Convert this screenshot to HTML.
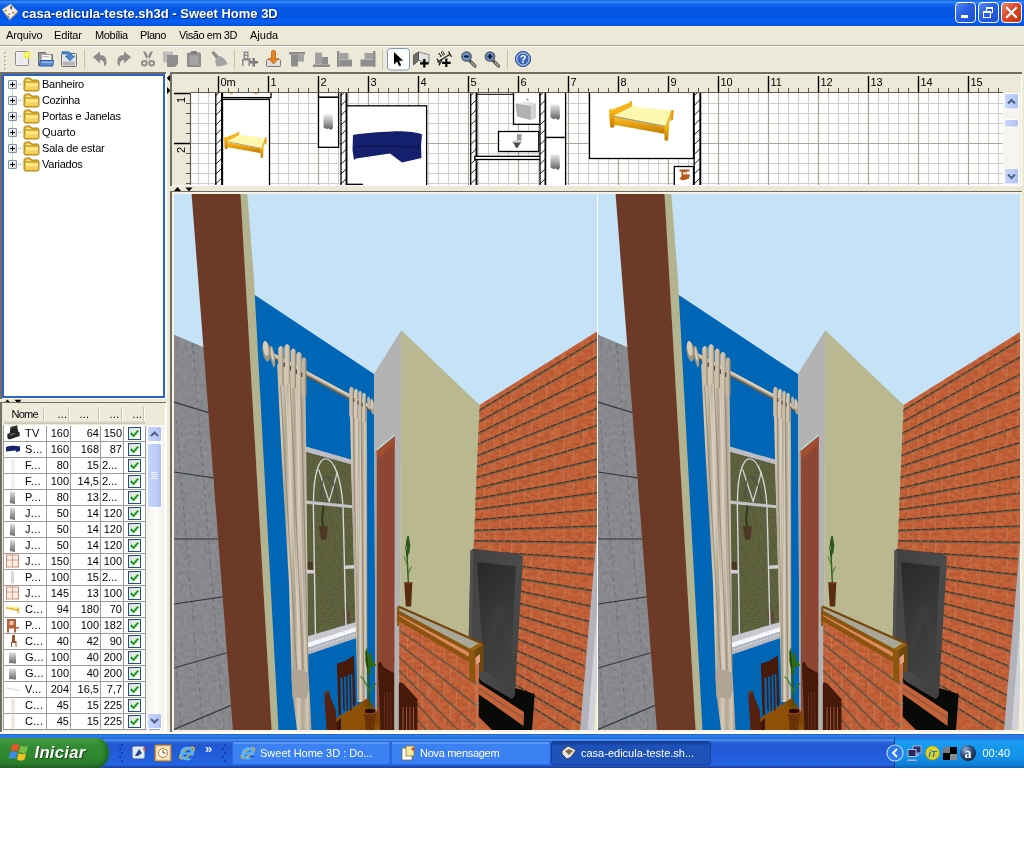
<!DOCTYPE html>
<html lang="pt-BR">
<head>
<meta charset="utf-8">
<title>casa-edicula-teste.sh3d - Sweet Home 3D</title>
<style>
html,body{margin:0;padding:0;background:#fff;}
body{width:1024px;height:857px;position:relative;overflow:hidden;font-family:"Liberation Sans",sans-serif;font-size:11px;color:#000;}
.abs{position:absolute;}
#win{will-change:transform;position:absolute;left:0;top:0;width:1024px;height:768px;background:#ece9d8;overflow:hidden;}
#titlebar{position:absolute;left:0;top:0;width:1024px;height:26px;background:linear-gradient(to bottom,#0a5fe0 0px,#3a8bf7 2px,#1466ec 4px,#0558e6 8px,#0354e2 17px,#0561f5 22px,#0553dc 25px,#0345c4 26px);}
#title{position:absolute;left:22px;top:6px;font-weight:bold;font-size:13px;color:#fff;white-space:nowrap;text-shadow:1px 1px 0 #0a2a8c;letter-spacing:0px;}
.tb{position:absolute;top:2px;width:19px;height:19px;border:1px solid #fff;border-radius:4px;background:linear-gradient(135deg,#5d8cf0 0%,#2a62e4 40%,#1c4fd0 100%);}
#menubar{position:absolute;left:0;top:26px;width:1024px;height:19px;background:#ece9d8;}
#menubar span{position:absolute;top:3px;font-size:11px;white-space:nowrap;}
#toolbar{position:absolute;left:0;top:45px;width:1024px;height:27px;background:#ece9d8;border-top:1px solid #aca899;box-shadow:inset 0 1px 0 #fff;box-sizing:border-box;}
.sep{position:absolute;top:50px;width:1px;height:18px;background:#c5c2b2;}
</style>
</head>
<body>
<div id="win">
<div id="titlebar">
  <svg class="abs" style="left:0;top:0" width="22" height="26"><path d="M10.500 4 L18 11.500 L9.400 19.900 L2.100 9.400 Z" fill="#f4f2ec" stroke="#9a8460" stroke-width="0.900" stroke-dasharray="1.2 0.8"/><path d="M9.400 19.900 L18 11.500 L17.500 13.500 L9.800 20 L5 14.500 L9.500 16.500 Z" fill="#8c8c8c"/><path d="M10 5.500 L11.800 6.500 L11.800 9.500 L10.200 8.800 Z" fill="#111"/><path d="M4.500 10 L7 9.500 L6.500 11.500 L5 12 Z" fill="#c88a1a"/><path d="M12.500 12 L15 12 L13.500 13.800 L12 13.500 Z" fill="#c8781a"/><path d="M7 11.500 L10.500 10.500 L11 13.500 L8 14.800 Z" fill="#fdf8d8"/><path d="M7.500 15 L10.500 13.500" stroke="#8a6a2a" stroke-width="1"/><path d="M10.500 4 L10.800 11 L18 11.500" fill="none" stroke="#d8d4cc" stroke-width="0.700"/></svg>
  <div id="title">casa-edicula-teste.sh3d - Sweet Home 3D</div>
  <div class="tb" style="left:955px"><div class="abs" style="left:5px;top:12px;width:7px;height:3px;background:#fff"></div></div>
  <div class="tb" style="left:978px"><div class="abs" style="left:7px;top:4px;width:7px;height:6px;border:1px solid #fff;border-top-width:2px;box-sizing:border-box"></div><div class="abs" style="left:4px;top:8px;width:8px;height:7px;border:1px solid #fff;border-top-width:2px;box-sizing:border-box;background:#2a5fe0"></div></div>
  <div class="tb" style="left:1001px;background:linear-gradient(135deg,#e8846a 0%,#d9492a 45%,#c03410 100%)"><svg class="abs" style="left:0;top:0" width="19" height="19"><path d="M5 5 L14 14 M14 5 L5 14" stroke="#fff" stroke-width="2.2" stroke-linecap="square"/></svg></div>
</div>
<div id="menubar">
  <span style="left:6px;letter-spacing:-0.1px">Arquivo</span><span style="left:54px;letter-spacing:-0.15px">Editar</span><span style="left:95px;letter-spacing:-0.4px">Mobília</span><span style="left:140px;letter-spacing:-0.45px">Plano</span><span style="left:179px;letter-spacing:-0.43px">Visão em 3D</span><span style="left:250px">Ajuda</span>
</div>
<div id="toolbar"></div>
<svg class="abs" style="left:0;top:46px" width="1024" height="26" viewBox="0 46 1024 26">
<rect x="4" y="52" width="2" height="2" fill="#b4b09c"/><rect x="5" y="53" width="1" height="1" fill="#fff"/>
<rect x="4" y="56" width="2" height="2" fill="#b4b09c"/><rect x="5" y="57" width="1" height="1" fill="#fff"/>
<rect x="4" y="60" width="2" height="2" fill="#b4b09c"/><rect x="5" y="61" width="1" height="1" fill="#fff"/>
<rect x="4" y="64" width="2" height="2" fill="#b4b09c"/><rect x="5" y="65" width="1" height="1" fill="#fff"/>
<rect x="4" y="68" width="2" height="2" fill="#b4b09c"/><rect x="5" y="69" width="1" height="1" fill="#fff"/>
<rect x="84" y="50" width="1" height="19" fill="#c9c3a6"/>
<rect x="234" y="50" width="1" height="19" fill="#c9c3a6"/>
<rect x="382" y="50" width="1" height="19" fill="#c9c3a6"/>
<rect x="507" y="50" width="1" height="19" fill="#c9c3a6"/>
<rect x="15.5" y="51.5" width="13" height="14" rx="1" fill="#f2f2f4" stroke="#8c8c90"/>
<rect x="17" y="53" width="10" height="11" fill="#ecebee"/>
<circle cx="27" cy="55" r="3.6" fill="#f4ee3a"/><circle cx="27" cy="55" r="1.6" fill="#fdfbb0"/>
<path d="M38.5 52.5 h7 l1.5 2 h5.5 v11 h-14 z" fill="#9a9a9a" stroke="#6a6a6a"/>
<rect x="41.5" y="54.500" width="10" height="8" fill="#f4f4f4" stroke="#9a9a9a" stroke-width="0.6"/>
<rect x="43" y="56" width="6" height="1" fill="#bbb"/>
<path d="M40.5 60.500 h13 l-0.800 5.500 h-13.200 z" fill="#5b8fd2" stroke="#2a5aa8"/>
<rect x="41" y="61.5" width="12" height="1.5" fill="#8db6ea"/>
<rect x="61.5" y="53.5" width="15" height="13" rx="1" fill="#e4e4e4" stroke="#6e6e6e"/>
<rect x="63" y="61.5" width="12" height="4" fill="#b4b4b4"/>
<path d="M62 51.8 h5 c3 0 5 1.500 5 4.200 h2.600 l-4.600 4.800 l-4.600 -4.800 h2.800 c0 -1.500 -1 -2.200 -2.500 -2.200 h-3.700 z" fill="#4e8cd0" stroke="#2660a8" stroke-width="0.8"/>
<path d="M93 57 l7 -5.500 v3.500 c5 0 7 3 6.500 9 l-2.500 2.500 c0.500 -4.500 -1 -6.500 -4 -6.500 v3.500 z" fill="#8e8e8e"/>
<path d="M131 57 l-7 -5.500 v3.500 c-5 0 -7 3 -6.500 9 l2.500 2.500 c-0.500 -4.500 1 -6.500 4 -6.500 v3.500 z" fill="#8e8e8e"/>
<path d="M143 51.500 l2.500 0 l4.500 8.500 l-2.200 2 z M153 51.500 l-2.500 0 l-4.500 8.500 l2.200 2 z" fill="#8e8e8e"/>
<ellipse cx="144.300" cy="63.300" rx="2.400" ry="2.200" fill="none" stroke="#8e8e8e" stroke-width="2"/><ellipse cx="151.700" cy="63.300" rx="2.400" ry="2.200" fill="none" stroke="#8e8e8e" stroke-width="2"/>
<rect x="163" y="51.5" width="10" height="11" rx="1" fill="#bdbdbd"/>
<path d="M167 55 h11 v9 l-3 3 h-8 z" fill="#8e8e8e"/>
<rect x="187" y="52.5" width="14" height="14.500" rx="1.500" fill="#8e8e8e"/>
<rect x="191" y="51" width="6" height="3" rx="1" fill="#7e7e7e"/>
<rect x="189.500" y="55.5" width="9" height="9.500" fill="#a4a4a4"/>
<path d="M211.200 52.500 l2.500 -1.500 l5.500 5.500 l-3 2.500 z" fill="#8e8e8e"/>
<path d="M215.500 59.500 l4.500 -3.500 c3.500 1.500 6.500 4.500 7.500 8 c-3 1.500 -6.500 2.500 -10.500 2.500 c-1.500 -2.500 -2 -5 -1.500 -7 z" fill="#a2a2a2"/>
<path d="M243.500 51.500 h5 v7 h2.500 v2 h-1 v5.500 h-1.500 v-5.500 h-5 v5.500 h-1.500 v-6.500 l1.500 -1 z M245 53 v1.500 h2.200 v-1.500 z M245 56 v2 h2.200 v-2 z" fill="#8a8a8a" fill-rule="evenodd"/>
<path d="M249.500 61 h3 v-3 h2.500 v3 h3 v2.500 h-3 v3 h-2.500 v-3 h-3 z" fill="#7e7e7e"/>
<rect x="266.500" y="59.500" width="14" height="7" rx="1" fill="#e0e0e0" stroke="#7a7a7a"/>
<path d="M271.500 51.500 c0 -1.500 4 -1.500 4 0 v7 h3 l-5 5.500 l-5 -5.500 h3 z" fill="#e8821e" stroke="#b45a0a" stroke-width="0.700"/>
<rect x="289" y="52" width="16" height="2.500" fill="#8e8e8e"/><rect x="291" y="54.500" width="7" height="12" fill="#8e8e8e"/><rect x="298" y="54.500" width="6" height="7" fill="#a2a2a2"/>
<rect x="313" y="64.500" width="17" height="2.500" fill="#8e8e8e"/><rect x="315" y="52.500" width="7" height="12" fill="#a2a2a2"/><rect x="322" y="57" width="6" height="7.500" fill="#8e8e8e"/>
<rect x="337" y="51" width="2.500" height="16" fill="#8e8e8e"/><rect x="339.500" y="53" width="9" height="6" fill="#a2a2a2"/><rect x="339.500" y="59.500" width="12.500" height="7" fill="#8e8e8e"/>
<rect x="373" y="51" width="2.500" height="16" fill="#8e8e8e"/><rect x="364.500" y="53" width="8.500" height="6" fill="#a2a2a2"/><rect x="360.500" y="59.500" width="12.500" height="7" fill="#8e8e8e"/>
<rect x="387.500" y="48.500" width="22" height="21.500" rx="3" fill="#fefefc" stroke="#7a98c4"/>
<path d="M394 52 v12.500 l3 -3 l2.200 4.800 l2 -1 l-2.200 -4.600 h4.200 z" fill="#000"/>
<path d="M418.500 52 l10.500 2.500 v8 l-10.500 -2 z" fill="#e2e2e2" stroke="#6a6a6a" stroke-width="0.800"/><path d="M413.500 55 l5 -3 v8.500 l-5 4.500 z" fill="#6e6e6e" stroke="#4a4a4a" stroke-width="0.800"/>
<path d="M418.500 52 v8" stroke="#4a4a4a" stroke-width="0.800"/>
<path d="M420 62.200 h3.200 v-3.200 h2.200 v3.200 h3.200 v2.200 h-3.200 v3.200 h-2.200 v-3.200 h-3.200 z" fill="#000"/>
<path d="M437.500 62 l13 -8 M437 58.500 l2.500 5 M448.500 51.500 l3 5.500 M439 65.500 l3 -6" stroke="#222" stroke-width="1.300" fill="none"/>
<text x="438.500" y="56.500" font-size="6" font-weight="bold" font-family="Liberation Sans,sans-serif" transform="rotate(-30 441 55)">10</text>
<path d="M442 61.700 h3.200 v-3.200 h2.200 v3.200 h3.200 v2.200 h-3.200 v3.200 h-2.200 v-3.200 h-3.200 z" fill="#000"/>
<path d="M469.5 60.500 l5.500 5.500" stroke="#5a5a5a" stroke-width="3.200" stroke-linecap="round"/>
<path d="M471.5 62.500 l3.500 3.500" stroke="#a8a8a8" stroke-width="1.200" stroke-linecap="round"/>
<circle cx="466.5" cy="56.500" r="4.600" fill="#6d95d2" stroke="#5a5e66" stroke-width="1.500"/>
<rect x="464.0" y="55.500" width="5" height="2" fill="#10203a"/>
<path d="M493.0 60.500 l5.500 5.500" stroke="#5a5a5a" stroke-width="3.200" stroke-linecap="round"/>
<path d="M495.0 62.500 l3.500 3.500" stroke="#a8a8a8" stroke-width="1.200" stroke-linecap="round"/>
<circle cx="490.0" cy="56.500" r="4.600" fill="#6d95d2" stroke="#5a5e66" stroke-width="1.500"/>
<rect x="487.5" y="55.500" width="5" height="2" fill="#10203a"/>
<rect x="489.0" y="54" width="2" height="5" fill="#10203a"/>
<circle cx="523" cy="59" r="7.600" fill="#3a66b8" stroke="#2a4a94" stroke-width="1"/>
<circle cx="523" cy="59" r="6.200" fill="none" stroke="#dfe8f8" stroke-width="1"/>
<text x="523" y="63.200" font-size="11" font-weight="bold" fill="#fff" text-anchor="middle" font-family="Liberation Sans,sans-serif">?</text>
</svg>
<style>
.tree{position:absolute;left:0;top:72px;width:166px;height:327px;background:#fff;box-sizing:border-box;border:2px solid #2b62c8;border-left-width:2px;}
.ti{position:absolute;left:42px;font-size:11px;white-space:nowrap;line-height:13px;}
.pm{position:absolute;left:8px;width:7px;height:7px;border:1px solid #7a94b4;background:linear-gradient(135deg,#fff,#d8d4c8);border-radius:1px;}
.pm:before{content:"";position:absolute;left:1px;top:3px;width:5px;height:1px;background:#000}.pm:after{content:"";position:absolute;left:3px;top:1px;width:1px;height:5px;background:#000}
.tbl{position:absolute;left:4px;top:425px;font-size:11px;}
.c{position:absolute;height:15px;line-height:15px;background:#fff;white-space:nowrap;overflow:hidden;}
.r{text-align:right}
.hd{position:absolute;top:403px;height:21px;line-height:23px;text-align:center;font-size:11px;background:#eeebdc;box-shadow:inset 0 -1px 0 #cbc7b8,inset 0 -2px 0 #d6d2c2,inset 0 -3px 0 #e0dccc;white-space:nowrap}.hd:after{content:"";position:absolute;right:0;top:4px;width:1px;height:14px;background:#fff;box-shadow:-1px 0 0 #c5c2b2}
.cb{position:absolute;left:4px;top:1px;width:11px;height:11px;border:1px solid #1c5180;background:linear-gradient(135deg,#dcdcd7,#fff);}
</style>
<div class="abs" style="left:0;top:72px;width:167px;height:327px;background:#fff"></div>
<div class="abs" style="left:0;top:72px;width:166px;height:2px;background:#716f64"></div><div class="abs" style="left:0;top:72px;width:2px;height:327px;background:#716f64"></div>
<div class="abs" style="left:2px;top:74px;width:163px;height:324px;background:#fff;border:2px solid #2b62c8;box-sizing:border-box"></div>
<svg class="abs" style="left:0;top:74px" width="60" height="100" viewBox="0 74 60 100">
<path d="M12.500 89 V160 M16 84.500 H22 M16 100.500 H22 M16 116.500 H22 M16 132.500 H22 M16 148.500 H22 M16 164.500 H22" stroke="#a0a0a0" stroke-width="1" stroke-dasharray="1 1" fill="none"/>
<g transform="translate(23 77)">
<path d="M1 3.500 C1 2 2 1 3.500 1 H7 L9 3 H14 C15.500 3 16 4 16 5 V12 C16 13.500 15 14 14 14 H3 C1.500 14 1 13 1 12 Z" fill="#d9aa2a" stroke="#a67c12" stroke-width="0.900"/>
<path d="M2.500 6 H15 V11.500 C15 12.500 14.500 13 13.500 13 H4 C3 13 2.500 12.500 2.500 11.500 Z" fill="#fbe88a"/>
<path d="M2.500 9.500 H15 V11.500 C15 12.500 14.500 13 13.500 13 H4 C3 13 2.500 12.500 2.500 11.500 Z" fill="#f3cf55"/>
<path d="M3 2.600 H6.500 L8 4.200 H3 Z" fill="#f6e08a"/>
</g>
<g transform="translate(23 93)">
<path d="M1 3.500 C1 2 2 1 3.500 1 H7 L9 3 H14 C15.500 3 16 4 16 5 V12 C16 13.500 15 14 14 14 H3 C1.500 14 1 13 1 12 Z" fill="#d9aa2a" stroke="#a67c12" stroke-width="0.900"/>
<path d="M2.500 6 H15 V11.500 C15 12.500 14.500 13 13.500 13 H4 C3 13 2.500 12.500 2.500 11.500 Z" fill="#fbe88a"/>
<path d="M2.500 9.500 H15 V11.500 C15 12.500 14.500 13 13.500 13 H4 C3 13 2.500 12.500 2.500 11.500 Z" fill="#f3cf55"/>
<path d="M3 2.600 H6.500 L8 4.200 H3 Z" fill="#f6e08a"/>
</g>
<g transform="translate(23 109)">
<path d="M1 3.500 C1 2 2 1 3.500 1 H7 L9 3 H14 C15.500 3 16 4 16 5 V12 C16 13.500 15 14 14 14 H3 C1.500 14 1 13 1 12 Z" fill="#d9aa2a" stroke="#a67c12" stroke-width="0.900"/>
<path d="M2.500 6 H15 V11.500 C15 12.500 14.500 13 13.500 13 H4 C3 13 2.500 12.500 2.500 11.500 Z" fill="#fbe88a"/>
<path d="M2.500 9.500 H15 V11.500 C15 12.500 14.500 13 13.500 13 H4 C3 13 2.500 12.500 2.500 11.500 Z" fill="#f3cf55"/>
<path d="M3 2.600 H6.500 L8 4.200 H3 Z" fill="#f6e08a"/>
</g>
<g transform="translate(23 125)">
<path d="M1 3.500 C1 2 2 1 3.500 1 H7 L9 3 H14 C15.500 3 16 4 16 5 V12 C16 13.500 15 14 14 14 H3 C1.500 14 1 13 1 12 Z" fill="#d9aa2a" stroke="#a67c12" stroke-width="0.900"/>
<path d="M2.500 6 H15 V11.500 C15 12.500 14.500 13 13.500 13 H4 C3 13 2.500 12.500 2.500 11.500 Z" fill="#fbe88a"/>
<path d="M2.500 9.500 H15 V11.500 C15 12.500 14.500 13 13.500 13 H4 C3 13 2.500 12.500 2.500 11.500 Z" fill="#f3cf55"/>
<path d="M3 2.600 H6.500 L8 4.200 H3 Z" fill="#f6e08a"/>
</g>
<g transform="translate(23 141)">
<path d="M1 3.500 C1 2 2 1 3.500 1 H7 L9 3 H14 C15.500 3 16 4 16 5 V12 C16 13.500 15 14 14 14 H3 C1.500 14 1 13 1 12 Z" fill="#d9aa2a" stroke="#a67c12" stroke-width="0.900"/>
<path d="M2.500 6 H15 V11.500 C15 12.500 14.500 13 13.500 13 H4 C3 13 2.500 12.500 2.500 11.500 Z" fill="#fbe88a"/>
<path d="M2.500 9.500 H15 V11.500 C15 12.500 14.500 13 13.500 13 H4 C3 13 2.500 12.500 2.500 11.500 Z" fill="#f3cf55"/>
<path d="M3 2.600 H6.500 L8 4.200 H3 Z" fill="#f6e08a"/>
</g>
<g transform="translate(23 157)">
<path d="M1 3.500 C1 2 2 1 3.500 1 H7 L9 3 H14 C15.500 3 16 4 16 5 V12 C16 13.500 15 14 14 14 H3 C1.500 14 1 13 1 12 Z" fill="#d9aa2a" stroke="#a67c12" stroke-width="0.900"/>
<path d="M2.500 6 H15 V11.500 C15 12.500 14.500 13 13.500 13 H4 C3 13 2.500 12.500 2.500 11.500 Z" fill="#fbe88a"/>
<path d="M2.500 9.500 H15 V11.500 C15 12.500 14.500 13 13.500 13 H4 C3 13 2.500 12.500 2.500 11.500 Z" fill="#f3cf55"/>
<path d="M3 2.600 H6.500 L8 4.200 H3 Z" fill="#f6e08a"/>
</g>
</svg>
<div class="pm" style="top:80px"></div>
<div class="ti" style="top:78px;letter-spacing:-0.27px">Banheiro</div>
<div class="pm" style="top:96px"></div>
<div class="ti" style="top:94px;letter-spacing:-0.38px">Cozinha</div>
<div class="pm" style="top:112px"></div>
<div class="ti" style="top:110px;letter-spacing:-0.20px">Portas e Janelas</div>
<div class="pm" style="top:128px"></div>
<div class="ti" style="top:126px;letter-spacing:-0.01px">Quarto</div>
<div class="pm" style="top:144px"></div>
<div class="ti" style="top:142px;letter-spacing:-0.17px">Sala de estar</div>
<div class="pm" style="top:160px"></div>
<div class="ti" style="top:158px;letter-spacing:-0.25px">Variados</div>
<svg class="abs" style="left:0;top:398px" width="166" height="7" viewBox="0 398 166 7"><path d="M4 403.500 L7.500 399.500 L11 403.500 Z M14.500 399.800 L21.500 399.800 L18 403.800 Z" fill="#000"/></svg>
<div class="abs" style="left:0;top:402px;width:167px;height:330px;background:#fff"></div>
<div class="abs" style="left:0;top:402px;width:166px;height:1px;background:#716f64"></div><div class="abs" style="left:0;top:402px;width:2px;height:330px;background:#716f64"></div>
<div class="abs" style="left:2px;top:403px;width:163px;height:328px;background:#ece9d8"></div>
<div class="abs" style="left:3px;top:425px;width:143px;height:305px;background:#9c9c9c"></div><div class="abs" style="left:4px;top:425px;width:142px;height:1px;background:#fff"></div>
<div class="abs" style="left:146px;top:425px;width:19px;height:306px;background:#f4f2ea"></div>
<div class="hd" style="left:4px;width:41px;box-sizing:border-box;"><span style="position:absolute;left:7.4px;letter-spacing:-0.7px">Nome</span></div>
<div class="hd" style="left:45px;width:25px;box-sizing:border-box;"><span style="position:absolute;left:12.5px;letter-spacing:0.25px">...</span></div>
<div class="hd" style="left:70px;width:30px;box-sizing:border-box;"><span style="position:absolute;left:9.5px;letter-spacing:0.25px">...</span></div>
<div class="hd" style="left:100px;width:23px;box-sizing:border-box;"><span style="position:absolute;left:9.5px;letter-spacing:0.25px">...</span></div>
<div class="hd" style="left:123px;width:22px;box-sizing:border-box;"><span style="position:absolute;left:9.5px;letter-spacing:0.25px">...</span></div>
<div class="c" style="left:4px;top:426px;width:42px"><span style="position:absolute;left:21px;letter-spacing:0.3px">TV</span></div>
<div class="c r" style="left:47px;top:426px;width:22px;padding-right:1px">160</div>
<div class="c r" style="left:71px;top:426px;width:28px;padding-right:1px">64</div>
<div class="c r" style="left:101px;top:426px;width:21px;padding-right:1px">150</div>
<div class="c" style="left:124px;top:426px;width:21px"><div class="cb"></div><svg class="abs" style="left:5px;top:2px" width="11" height="11"><path d="M1.800 5 L4.500 8 L9.200 2.600" fill="none" stroke="#21a121" stroke-width="2.100"/></svg></div>
<div class="c" style="left:4px;top:442px;width:42px"><span style="position:absolute;left:21px;letter-spacing:0.3px">S...</span></div>
<div class="c r" style="left:47px;top:442px;width:22px;padding-right:1px">160</div>
<div class="c r" style="left:71px;top:442px;width:28px;padding-right:1px">168</div>
<div class="c r" style="left:101px;top:442px;width:21px;padding-right:1px">87</div>
<div class="c" style="left:124px;top:442px;width:21px"><div class="cb"></div><svg class="abs" style="left:5px;top:2px" width="11" height="11"><path d="M1.800 5 L4.500 8 L9.200 2.600" fill="none" stroke="#21a121" stroke-width="2.100"/></svg></div>
<div class="c" style="left:4px;top:458px;width:42px"><span style="position:absolute;left:21px;letter-spacing:0.3px">F...</span></div>
<div class="c r" style="left:47px;top:458px;width:22px;padding-right:1px">80</div>
<div class="c r" style="left:71px;top:458px;width:28px;padding-right:1px">15</div>
<div class="c" style="left:101px;top:458px;width:22px;padding-left:1px;box-sizing:border-box">2...</div>
<div class="c" style="left:124px;top:458px;width:21px"><div class="cb"></div><svg class="abs" style="left:5px;top:2px" width="11" height="11"><path d="M1.800 5 L4.500 8 L9.200 2.600" fill="none" stroke="#21a121" stroke-width="2.100"/></svg></div>
<div class="c" style="left:4px;top:474px;width:42px"><span style="position:absolute;left:21px;letter-spacing:0.3px">F...</span></div>
<div class="c r" style="left:47px;top:474px;width:22px;padding-right:1px">100</div>
<div class="c r" style="left:71px;top:474px;width:28px;padding-right:1px">14,5</div>
<div class="c" style="left:101px;top:474px;width:22px;padding-left:1px;box-sizing:border-box">2...</div>
<div class="c" style="left:124px;top:474px;width:21px"><div class="cb"></div><svg class="abs" style="left:5px;top:2px" width="11" height="11"><path d="M1.800 5 L4.500 8 L9.200 2.600" fill="none" stroke="#21a121" stroke-width="2.100"/></svg></div>
<div class="c" style="left:4px;top:490px;width:42px"><span style="position:absolute;left:21px;letter-spacing:0.3px">P...</span></div>
<div class="c r" style="left:47px;top:490px;width:22px;padding-right:1px">80</div>
<div class="c r" style="left:71px;top:490px;width:28px;padding-right:1px">13</div>
<div class="c" style="left:101px;top:490px;width:22px;padding-left:1px;box-sizing:border-box">2...</div>
<div class="c" style="left:124px;top:490px;width:21px"><div class="cb"></div><svg class="abs" style="left:5px;top:2px" width="11" height="11"><path d="M1.800 5 L4.500 8 L9.200 2.600" fill="none" stroke="#21a121" stroke-width="2.100"/></svg></div>
<div class="c" style="left:4px;top:506px;width:42px"><span style="position:absolute;left:21px;letter-spacing:0.3px">J...</span></div>
<div class="c r" style="left:47px;top:506px;width:22px;padding-right:1px">50</div>
<div class="c r" style="left:71px;top:506px;width:28px;padding-right:1px">14</div>
<div class="c r" style="left:101px;top:506px;width:21px;padding-right:1px">120</div>
<div class="c" style="left:124px;top:506px;width:21px"><div class="cb"></div><svg class="abs" style="left:5px;top:2px" width="11" height="11"><path d="M1.800 5 L4.500 8 L9.200 2.600" fill="none" stroke="#21a121" stroke-width="2.100"/></svg></div>
<div class="c" style="left:4px;top:522px;width:42px"><span style="position:absolute;left:21px;letter-spacing:0.3px">J...</span></div>
<div class="c r" style="left:47px;top:522px;width:22px;padding-right:1px">50</div>
<div class="c r" style="left:71px;top:522px;width:28px;padding-right:1px">14</div>
<div class="c r" style="left:101px;top:522px;width:21px;padding-right:1px">120</div>
<div class="c" style="left:124px;top:522px;width:21px"><div class="cb"></div><svg class="abs" style="left:5px;top:2px" width="11" height="11"><path d="M1.800 5 L4.500 8 L9.200 2.600" fill="none" stroke="#21a121" stroke-width="2.100"/></svg></div>
<div class="c" style="left:4px;top:538px;width:42px"><span style="position:absolute;left:21px;letter-spacing:0.3px">J...</span></div>
<div class="c r" style="left:47px;top:538px;width:22px;padding-right:1px">50</div>
<div class="c r" style="left:71px;top:538px;width:28px;padding-right:1px">14</div>
<div class="c r" style="left:101px;top:538px;width:21px;padding-right:1px">120</div>
<div class="c" style="left:124px;top:538px;width:21px"><div class="cb"></div><svg class="abs" style="left:5px;top:2px" width="11" height="11"><path d="M1.800 5 L4.500 8 L9.200 2.600" fill="none" stroke="#21a121" stroke-width="2.100"/></svg></div>
<div class="c" style="left:4px;top:554px;width:42px"><span style="position:absolute;left:21px;letter-spacing:0.3px">J...</span></div>
<div class="c r" style="left:47px;top:554px;width:22px;padding-right:1px">150</div>
<div class="c r" style="left:71px;top:554px;width:28px;padding-right:1px">14</div>
<div class="c r" style="left:101px;top:554px;width:21px;padding-right:1px">100</div>
<div class="c" style="left:124px;top:554px;width:21px"><div class="cb"></div><svg class="abs" style="left:5px;top:2px" width="11" height="11"><path d="M1.800 5 L4.500 8 L9.200 2.600" fill="none" stroke="#21a121" stroke-width="2.100"/></svg></div>
<div class="c" style="left:4px;top:570px;width:42px"><span style="position:absolute;left:21px;letter-spacing:0.3px">P...</span></div>
<div class="c r" style="left:47px;top:570px;width:22px;padding-right:1px">100</div>
<div class="c r" style="left:71px;top:570px;width:28px;padding-right:1px">15</div>
<div class="c" style="left:101px;top:570px;width:22px;padding-left:1px;box-sizing:border-box">2...</div>
<div class="c" style="left:124px;top:570px;width:21px"><div class="cb"></div><svg class="abs" style="left:5px;top:2px" width="11" height="11"><path d="M1.800 5 L4.500 8 L9.200 2.600" fill="none" stroke="#21a121" stroke-width="2.100"/></svg></div>
<div class="c" style="left:4px;top:586px;width:42px"><span style="position:absolute;left:21px;letter-spacing:0.3px">J...</span></div>
<div class="c r" style="left:47px;top:586px;width:22px;padding-right:1px">145</div>
<div class="c r" style="left:71px;top:586px;width:28px;padding-right:1px">13</div>
<div class="c r" style="left:101px;top:586px;width:21px;padding-right:1px">100</div>
<div class="c" style="left:124px;top:586px;width:21px"><div class="cb"></div><svg class="abs" style="left:5px;top:2px" width="11" height="11"><path d="M1.800 5 L4.500 8 L9.200 2.600" fill="none" stroke="#21a121" stroke-width="2.100"/></svg></div>
<div class="c" style="left:4px;top:602px;width:42px"><span style="position:absolute;left:21px;letter-spacing:0.3px">C...</span></div>
<div class="c r" style="left:47px;top:602px;width:22px;padding-right:1px">94</div>
<div class="c r" style="left:71px;top:602px;width:28px;padding-right:1px">180</div>
<div class="c r" style="left:101px;top:602px;width:21px;padding-right:1px">70</div>
<div class="c" style="left:124px;top:602px;width:21px"><div class="cb"></div><svg class="abs" style="left:5px;top:2px" width="11" height="11"><path d="M1.800 5 L4.500 8 L9.200 2.600" fill="none" stroke="#21a121" stroke-width="2.100"/></svg></div>
<div class="c" style="left:4px;top:618px;width:42px"><span style="position:absolute;left:21px;letter-spacing:0.3px">P...</span></div>
<div class="c r" style="left:47px;top:618px;width:22px;padding-right:1px">100</div>
<div class="c r" style="left:71px;top:618px;width:28px;padding-right:1px">100</div>
<div class="c r" style="left:101px;top:618px;width:21px;padding-right:1px">182</div>
<div class="c" style="left:124px;top:618px;width:21px"><div class="cb"></div><svg class="abs" style="left:5px;top:2px" width="11" height="11"><path d="M1.800 5 L4.500 8 L9.200 2.600" fill="none" stroke="#21a121" stroke-width="2.100"/></svg></div>
<div class="c" style="left:4px;top:634px;width:42px"><span style="position:absolute;left:21px;letter-spacing:0.3px">C...</span></div>
<div class="c r" style="left:47px;top:634px;width:22px;padding-right:1px">40</div>
<div class="c r" style="left:71px;top:634px;width:28px;padding-right:1px">42</div>
<div class="c r" style="left:101px;top:634px;width:21px;padding-right:1px">90</div>
<div class="c" style="left:124px;top:634px;width:21px"><div class="cb"></div><svg class="abs" style="left:5px;top:2px" width="11" height="11"><path d="M1.800 5 L4.500 8 L9.200 2.600" fill="none" stroke="#21a121" stroke-width="2.100"/></svg></div>
<div class="c" style="left:4px;top:650px;width:42px"><span style="position:absolute;left:21px;letter-spacing:0.3px">G...</span></div>
<div class="c r" style="left:47px;top:650px;width:22px;padding-right:1px">100</div>
<div class="c r" style="left:71px;top:650px;width:28px;padding-right:1px">40</div>
<div class="c r" style="left:101px;top:650px;width:21px;padding-right:1px">200</div>
<div class="c" style="left:124px;top:650px;width:21px"><div class="cb"></div><svg class="abs" style="left:5px;top:2px" width="11" height="11"><path d="M1.800 5 L4.500 8 L9.200 2.600" fill="none" stroke="#21a121" stroke-width="2.100"/></svg></div>
<div class="c" style="left:4px;top:666px;width:42px"><span style="position:absolute;left:21px;letter-spacing:0.3px">G...</span></div>
<div class="c r" style="left:47px;top:666px;width:22px;padding-right:1px">100</div>
<div class="c r" style="left:71px;top:666px;width:28px;padding-right:1px">40</div>
<div class="c r" style="left:101px;top:666px;width:21px;padding-right:1px">200</div>
<div class="c" style="left:124px;top:666px;width:21px"><div class="cb"></div><svg class="abs" style="left:5px;top:2px" width="11" height="11"><path d="M1.800 5 L4.500 8 L9.200 2.600" fill="none" stroke="#21a121" stroke-width="2.100"/></svg></div>
<div class="c" style="left:4px;top:682px;width:42px"><span style="position:absolute;left:21px;letter-spacing:0.3px">V...</span></div>
<div class="c r" style="left:47px;top:682px;width:22px;padding-right:1px">204</div>
<div class="c r" style="left:71px;top:682px;width:28px;padding-right:1px">16,5</div>
<div class="c r" style="left:101px;top:682px;width:21px;padding-right:1px">7,7</div>
<div class="c" style="left:124px;top:682px;width:21px"><div class="cb"></div><svg class="abs" style="left:5px;top:2px" width="11" height="11"><path d="M1.800 5 L4.500 8 L9.200 2.600" fill="none" stroke="#21a121" stroke-width="2.100"/></svg></div>
<div class="c" style="left:4px;top:698px;width:42px"><span style="position:absolute;left:21px;letter-spacing:0.3px">C...</span></div>
<div class="c r" style="left:47px;top:698px;width:22px;padding-right:1px">45</div>
<div class="c r" style="left:71px;top:698px;width:28px;padding-right:1px">15</div>
<div class="c r" style="left:101px;top:698px;width:21px;padding-right:1px">225</div>
<div class="c" style="left:124px;top:698px;width:21px"><div class="cb"></div><svg class="abs" style="left:5px;top:2px" width="11" height="11"><path d="M1.800 5 L4.500 8 L9.200 2.600" fill="none" stroke="#21a121" stroke-width="2.100"/></svg></div>
<div class="c" style="left:4px;top:714px;width:42px"><span style="position:absolute;left:21px;letter-spacing:0.3px">C...</span></div>
<div class="c r" style="left:47px;top:714px;width:22px;padding-right:1px">45</div>
<div class="c r" style="left:71px;top:714px;width:28px;padding-right:1px">15</div>
<div class="c r" style="left:101px;top:714px;width:21px;padding-right:1px">225</div>
<div class="c" style="left:124px;top:714px;width:21px"><div class="cb"></div><svg class="abs" style="left:5px;top:2px" width="11" height="11"><path d="M1.800 5 L4.500 8 L9.200 2.600" fill="none" stroke="#21a121" stroke-width="2.100"/></svg></div>
<svg class="abs" style="left:4px;top:425px" width="22" height="305" viewBox="4 425 22 305">
<defs><linearGradient id="gi" x1="0" y1="0" x2="0" y2="1"><stop offset="0" stop-color="#e4e4e4"/><stop offset="1" stop-color="#6a6a6a"/></linearGradient></defs>
<path d="M10.500 427 l6.500 -1.500 l1.200 6 l1.300 0.500 l0.300 4 l-10.500 3.500 l-1.800 -1 l-0.200 -4.500 l2.500 -1 z" fill="#262626"/><path d="M10.500 427 l6.500 -1.500 l0.800 1.500 l-6.800 1.800 z" fill="#3e3e3e"/><path d="M10 435 l5 -1.500" stroke="#8a8a8a" stroke-width="0.900"/>
<path d="M6 447 c4 -1.500 10 -1.500 14 -0.500 v4.500 l-3.500 1 l-1 -1.500 l-9.500 1 z" fill="#18246e"/>
<rect x="11" y="459" width="4" height="14" fill="#f2f2f2"/>
<rect x="11" y="475" width="4" height="14" fill="#f2f2f2"/>
<path d="M10 491 l5 1 v12 l-5 -1 z" fill="url(#gi)"/>
<path d="M10 507 l5 1 v12 l-5 -1 z" fill="url(#gi)"/>
<path d="M10 523 l5 1 v12 l-5 -1 z" fill="url(#gi)"/>
<path d="M10 539 l5 1 v12 l-5 -1 z" fill="url(#gi)"/>
<rect x="6.500" y="555" width="12" height="12" fill="#f8ece4" stroke="#c89070" stroke-width="1"/><path d="M12.500 555 v12 M6.500 560 h12" stroke="#c89070" stroke-width="0.800"/>
<rect x="6.500" y="587" width="12" height="12" fill="#f8ece4" stroke="#c89070" stroke-width="1"/><path d="M12.500 587 v12 M6.500 592 h12" stroke="#c89070" stroke-width="0.800"/>
<path d="M11 571 l3 1 v12 l-3 -1 z" fill="#d8d8d8"/>
<path d="M6 607 l11 2 l2 -2 v6 l-1.500 0 v-2 l-11.500 -2.500 z" fill="#f0b020"/><path d="M7 607 l9.500 1.800 l1.500 -1.500 l-9 -1.500 z" fill="#fdf0a0"/>
<path d="M7 619 h9 v8 h3 v1.500 h-3 v4 h-2 v-4 h-5 v4 h-2 z" fill="#b4603a"/><rect x="9.500" y="621" width="4" height="4" fill="#e8c8b0"/>
<path d="M12 635 h3 v6 h1.500 v6 h-1 v-4 h-3.500 v4 h-1 v-5 h1 z" fill="#9a5430"/>
<path d="M9 652 l7 0.500 v11 l-7 -0.500 z" fill="url(#gi)"/>
<path d="M9 668 l7 0.500 v11 l-7 -0.500 z" fill="url(#gi)"/>
<path d="M6 688 l14 2.500" stroke="#e8e0d8" stroke-width="1.500"/>
<rect x="11.500" y="699" width="3" height="14" fill="#ece4d4"/>
<rect x="11.500" y="715" width="3" height="14" fill="#ece4d4"/>
</svg>
<svg class="abs" style="left:147px;top:425px" width="18" height="305" viewBox="147 425 18 305">
<defs><linearGradient id="sbt" x1="0" y1="0" x2="1" y2="0"><stop offset="0" stop-color="#f3f1ec"/><stop offset="0.500" stop-color="#fefefb"/><stop offset="1" stop-color="#f3f1ec"/></linearGradient><linearGradient id="sbb" x1="0" y1="0" x2="1" y2="0"><stop offset="0" stop-color="#c8d6fb"/><stop offset="0.700" stop-color="#bacbf7"/><stop offset="1" stop-color="#a8bcf0"/></linearGradient></defs>
<rect x="147" y="425" width="18" height="305" fill="#f6f5f0"/>
<rect x="148" y="426" width="15" height="304" fill="url(#sbt)"/>
<rect x="147.500" y="426.500" width="14" height="15" rx="2" fill="url(#sbb)" stroke="#fff"/>
<path d="M151 436 l3.500 -3.500 l3.500 3.500" fill="none" stroke="#4d6185" stroke-width="2"/>
<rect x="147.500" y="443.500" width="14" height="64" rx="2" fill="url(#sbb)" stroke="#fff"/>
<path d="M151.500 472.500 h6 M151.500 474.500 h6 M151.500 476.500 h6 M151.500 478.500 h6" stroke="#eef4fe" stroke-width="1"/>
<rect x="147.500" y="713.500" width="14" height="15" rx="2" fill="url(#sbb)" stroke="#fff"/><path d="M149 729.500 h11" stroke="#8aa4e0" stroke-width="1"/>
<path d="M151 719 l3.500 3.500 l3.500 -3.500" fill="none" stroke="#4d6185" stroke-width="2"/>
</svg>
<svg class="abs" style="left:166px;top:72px" width="5" height="30" viewBox="166 72 5 30"><path d="M170 75 L166.800 78 L170 81.500 Z M167 87 L170.500 90.500 L167 94 Z" fill="#000"/></svg>
<div class="abs" style="left:170px;top:72px;width:852px;height:114px;background:#fff"></div>
<div class="abs" style="left:170px;top:72px;width:852px;height:2px;background:#716f64"></div><div class="abs" style="left:170px;top:72px;width:2px;height:114px;background:#716f64"></div>
<div class="abs" style="left:172px;top:74px;width:849px;height:111px;background:#ece9d8"></div>
<svg class="abs" style="left:172px;top:74px" width="849" height="111" viewBox="172 74 849 111" font-family="Liberation Sans,sans-serif" font-size="11">
<defs><pattern id="hat" x="0" y="3" width="12" height="10" patternUnits="userSpaceOnUse"><rect width="12" height="10" fill="#fff"/><path d="M-6 15 L18 -5 M-6 25 L18 5 M-6 5 L18 -15" stroke="#444" stroke-width="0.900"/></pattern>
<linearGradient id="cur" x1="0" y1="0" x2="0" y2="1"><stop offset="0" stop-color="#eeeeee"/><stop offset="1" stop-color="#5c5c5c"/></linearGradient>
<linearGradient id="bedg" x1="0" y1="0" x2="0" y2="1"><stop offset="0" stop-color="#ffc01e"/><stop offset="1" stop-color="#c07800"/></linearGradient>
<linearGradient id="sbp" x1="0" y1="0" x2="1" y2="0"><stop offset="0" stop-color="#c8d6fb"/><stop offset="0.700" stop-color="#bacbf7"/><stop offset="1" stop-color="#a8bcf0"/></linearGradient>
</defs>
<rect x="191" y="93" width="812" height="92" fill="#fff"/>
<path d="M198.5 93V185M208.5 93V185M228.5 93V185M238.5 93V185M248.5 93V185M258.5 93V185M278.5 93V185M288.5 93V185M298.5 93V185M308.5 93V185M328.5 93V185M338.5 93V185M348.5 93V185M358.5 93V185M378.5 93V185M388.5 93V185M398.5 93V185M408.5 93V185M428.5 93V185M438.5 93V185M448.5 93V185M458.5 93V185M478.5 93V185M488.5 93V185M498.5 93V185M508.5 93V185M528.5 93V185M538.5 93V185M548.5 93V185M558.5 93V185M578.5 93V185M588.5 93V185M598.5 93V185M608.5 93V185M628.5 93V185M638.5 93V185M648.5 93V185M658.5 93V185M678.5 93V185M688.5 93V185M698.5 93V185M708.5 93V185M728.5 93V185M738.5 93V185M748.5 93V185M758.5 93V185M778.5 93V185M788.5 93V185M798.5 93V185M808.5 93V185M828.5 93V185M838.5 93V185M848.5 93V185M858.5 93V185M878.5 93V185M888.5 93V185M898.5 93V185M908.5 93V185M928.5 93V185M938.5 93V185M948.5 93V185M958.5 93V185M978.5 93V185M988.5 93V185M998.5 93V185M191 103.5H1003M191 113.5H1003M191 123.5H1003M191 133.5H1003M191 153.5H1003M191 163.5H1003M191 173.5H1003M191 183.5H1003" stroke="#d3cfc7" stroke-width="1" fill="none"/>
<path d="M218.5 93V185M268.5 93V185M318.5 93V185M368.5 93V185M418.5 93V185M468.5 93V185M518.5 93V185M568.5 93V185M618.5 93V185M668.5 93V185M718.5 93V185M768.5 93V185M818.5 93V185M868.5 93V185M918.5 93V185M968.5 93V185M191 143.5H1003" stroke="#aaa69a" stroke-width="1.200" fill="none"/>
<path d="M198.5 88V93M208.5 88V93M228.5 88V93M238.5 88V93M248.5 88V93M258.5 88V93M278.5 88V93M288.5 88V93M298.5 88V93M308.5 88V93M328.5 88V93M338.5 88V93M348.5 88V93M358.5 88V93M378.5 88V93M388.5 88V93M398.5 88V93M408.5 88V93M428.5 88V93M438.5 88V93M448.5 88V93M458.5 88V93M478.5 88V93M488.5 88V93M498.5 88V93M508.5 88V93M528.5 88V93M538.5 88V93M548.5 88V93M558.5 88V93M578.5 88V93M588.5 88V93M598.5 88V93M608.5 88V93M628.5 88V93M638.5 88V93M648.5 88V93M658.5 88V93M678.5 88V93M688.5 88V93M698.5 88V93M708.5 88V93M728.5 88V93M738.5 88V93M748.5 88V93M758.5 88V93M778.5 88V93M788.5 88V93M798.5 88V93M808.5 88V93M828.5 88V93M838.5 88V93M848.5 88V93M858.5 88V93M878.5 88V93M888.5 88V93M898.5 88V93M908.5 88V93M928.5 88V93M938.5 88V93M948.5 88V93M958.5 88V93M978.5 88V93M988.5 88V93M998.5 88V93M186 103.5H191M186 113.5H191M186 123.5H191M186 133.5H191M186 153.5H191M186 163.5H191M186 173.5H191M186 183.5H191" stroke="#55524a" stroke-width="1" fill="none"/>
<path d="M218.5 76V93M268.5 76V93M318.5 76V93M368.5 76V93M418.5 76V93M468.5 76V93M518.5 76V93M568.5 76V93M618.5 76V93M668.5 76V93M718.5 76V93M768.5 76V93M818.5 76V93M868.5 76V93M918.5 76V93M968.5 76V93M174 93.5H191M174 143.5H191" stroke="#000" stroke-width="1.400" fill="none"/>
<text x="220.5" y="86">0m</text>
<text x="270.5" y="86">1</text>
<text x="320.5" y="86">2</text>
<text x="370.5" y="86">3</text>
<text x="420.5" y="86">4</text>
<text x="470.5" y="86">5</text>
<text x="520.5" y="86">6</text>
<text x="570.5" y="86">7</text>
<text x="620.5" y="86">8</text>
<text x="670.5" y="86">9</text>
<text x="720.5" y="86">10</text>
<text x="770.5" y="86">11</text>
<text x="820.5" y="86">12</text>
<text x="870.5" y="86">13</text>
<text x="920.5" y="86">14</text>
<text x="970.5" y="86">15</text>
<text transform="translate(184.500 103) rotate(-90)">1</text>
<text transform="translate(184.500 153) rotate(-90)">2</text>
<clipPath id="pc"><rect x="191" y="93" width="812" height="92"/></clipPath><g clip-path="url(#pc)">
<rect x="222.5" y="92.0" width="48.5" height="5.6" fill="#fff" stroke="#000" stroke-width="1.300"/>
<path d="M229 93 h4.500 l-1 1 l-2 0.300 z M254 93 h4.500 l-1.500 1.100 l-2 0.200 z" fill="#f0954a"/>
<rect x="222.5" y="99.4" width="47.0" height="90.6" fill="#fff" stroke="#000" stroke-width="1.300"/>
<rect x="215.6" y="92" width="6.4" height="96" fill="#fff"/>
<path d="M215.6 95.9L222.0 89.5M215.6 105.7L222.0 99.3M215.6 115.5L222.0 109.1M215.6 125.3L222.0 118.9M215.6 135.1L222.0 128.7M215.6 144.9L222.0 138.5M215.6 154.7L222.0 148.3M215.6 164.5L222.0 158.1M215.6 174.3L222.0 167.9M215.6 184.1L222.0 177.7M215.6 193.9L222.0 187.5" stroke="#1a1a1a" stroke-width="1" fill="none"/>
<path d="M215.8 92V188" stroke="#000" stroke-width="1.300"/><path d="M222.0 92V188" stroke="#000" stroke-width="1.900"/>
<g transform="translate(224.0 131.5) scale(0.660)">
<path d="M61.500 9.500 L64.800 9 L64 19 L61.800 20 Z" fill="#e09a10"/>
<path d="M3.300 8.600 L20.500 1.800 L20.500 0.200 L23 0 L23.200 5.500 L4.900 15 Z" fill="#f8b21a"/>
<path d="M4.900 14.800 L23.800 5.300 L62.300 9.800 L56.600 24.800 Z" fill="#fdf8ae"/>
<path d="M4.900 14.800 L56.600 24.800 L56.600 26.200 L4.900 16.400 Z" fill="#a89c80"/>
<path d="M56.600 25 L62.300 9.800 L63.300 11 L59.500 24 Z" fill="#f0aa18"/>
<path d="M3.300 16 L56.600 26 L56.600 33 L3.300 23.400 Z" fill="url(#bedg)"/>
<path d="M0 8.500 L3.600 8 L5.200 9.500 L5.500 26 L2.500 27 L1 25 Z" fill="url(#bedg)"/>
<path d="M55.200 24.500 L60.200 23.400 L59.200 39 L57.500 40 L55.500 39 Z" fill="url(#bedg)"/>
</g>
<rect x="318.5" y="92.0" width="20.1" height="5.3" fill="#fff" stroke="#000" stroke-width="1.300"/>
<rect x="318.5" y="97.3" width="20.1" height="50.0" fill="#fff" stroke="#000" stroke-width="1.300"/>
<path d="M323.5 115.0 c1.500 -1 5 -1 7.500 -0.500 l1.500 1 l0.500 12 l-1.500 2.500 l-3 -1.500 l-2 0.500 l-3 -1.500 z" fill="url(#cur)"/>
<rect x="340.8" y="92" width="5.7" height="96" fill="#fff"/>
<path d="M340.8 95.9L346.5 90.2M340.8 105.7L346.5 100.0M340.8 115.5L346.5 109.8M340.8 125.3L346.5 119.6M340.8 135.1L346.5 129.4M340.8 144.9L346.5 139.2M340.8 154.7L346.5 149.0M340.8 164.5L346.5 158.8M340.8 174.3L346.5 168.6M340.8 184.1L346.5 178.4M340.8 193.9L346.5 188.2" stroke="#1a1a1a" stroke-width="1" fill="none"/>
<path d="M341.0 92V188" stroke="#000" stroke-width="1.300"/><path d="M346.5 92V188" stroke="#000" stroke-width="1.900"/>
<rect x="346.8" y="105.8" width="79.8" height="84.2" fill="#fff" stroke="#000" stroke-width="1.300"/>
<path d="M346.800 184.300 H363" stroke="#000" stroke-width="1.300"/>
<path d="M353 135 C362 133 380 132 392 131.500 C404 131 415 131.800 422 134.500 L421 146 L421.500 158 L402 162.500 L390 153.500 L356 158.500 L354 160 L352.500 150 Z" fill="#14206e"/>
<path d="M353.500 147 C370 146 384 145.500 393 146 L408 147.500 L421 146" fill="none" stroke="#0c1652" stroke-width="1.500"/>
<rect x="470.5" y="92" width="6.0" height="96" fill="#fff"/>
<path d="M470.5 95.9L476.5 89.9M470.5 105.7L476.5 99.7M470.5 115.5L476.5 109.5M470.5 125.3L476.5 119.3M470.5 135.1L476.5 129.1M470.5 144.9L476.5 138.9M470.5 154.7L476.5 148.7M470.5 164.5L476.5 158.5M470.5 174.3L476.5 168.3M470.5 184.1L476.5 178.1M470.5 193.9L476.5 187.9" stroke="#1a1a1a" stroke-width="1" fill="none"/>
<path d="M470.7 92V188" stroke="#000" stroke-width="1.300"/><path d="M476.5 92V188" stroke="#000" stroke-width="1.900"/>
<path d="M477 94.300 H513" stroke="#000" stroke-width="1"/>
<rect x="513.5" y="92.0" width="26.5" height="32.3" fill="#fff" stroke="#000" stroke-width="1.300"/>
<path d="M515.500 103.500 L530 102 L536 103.500 L535.500 118 L530.500 120 L517 116.500 Z" fill="#b0b0b0"/><path d="M515.500 103.500 L530 102 L536 103.500 L531 106 Z" fill="#e6e6e6"/><path d="M531 106 L536 103.500 L535.500 118 L530.500 120 Z" fill="#d4d4d4"/><path d="M526 100.500 l1.500 -2.500 l1.500 2.500 z" fill="#9a9a9a"/>
<rect x="498.5" y="131.5" width="40.3" height="20.0" fill="#fff" stroke="#000" stroke-width="1.300"/>
<path d="M517 134 h4.500 v6.500 h-4.500 z" fill="#9a9a9a"/><path d="M512.500 142 c2 -2 7 -2 9 0 l-3 4 l-1 2 l-2 -0.500 l-0.500 -2 z" fill="#4a4a4a"/><path d="M512.500 141.500 c2 -1.500 7 -1.500 9 0 l-1 1 h-7 z" fill="#e0e0e0"/>
<rect x="474.8" y="156.3" width="65.7" height="3.2" fill="#fff" stroke="#000" stroke-width="1.300"/>
<rect x="539.8" y="92" width="5.7" height="96" fill="#fff"/>
<path d="M539.8 95.9L545.5 90.2M539.8 105.7L545.5 100.0M539.8 115.5L545.5 109.8M539.8 125.3L545.5 119.6M539.8 135.1L545.5 129.4M539.8 144.9L545.5 139.2M539.8 154.7L545.5 149.0M539.8 164.5L545.5 158.8M539.8 174.3L545.5 168.6M539.8 184.1L545.5 178.4M539.8 193.9L545.5 188.2" stroke="#1a1a1a" stroke-width="1" fill="none"/>
<path d="M540.0 92V188" stroke="#000" stroke-width="1.300"/><path d="M545.5 92V188" stroke="#000" stroke-width="1.900"/>
<rect x="545.6" y="92.0" width="20.0" height="45.5" fill="#fff" stroke="#000" stroke-width="1.300"/>
<rect x="545.6" y="137.5" width="20.0" height="52.5" fill="#fff" stroke="#000" stroke-width="1.300"/>
<path d="M550.5 105.0 c1.500 -1 5 -1 7.500 -0.500 l1.500 1 l0.500 12 l-1.500 2.500 l-3 -1.500 l-2 0.500 l-3 -1.500 z" fill="url(#cur)"/>
<path d="M550.5 155.0 c1.500 -1 5 -1 7.500 -0.500 l1.500 1 l0.500 12 l-1.500 2.500 l-3 -1.500 l-2 0.500 l-3 -1.500 z" fill="url(#cur)"/>
<rect x="589.5" y="92.0" width="104.0" height="66.5" fill="#fff" stroke="#000" stroke-width="1.300"/>
<g transform="translate(609.0 101.0) scale(1.000)">
<path d="M61.500 9.500 L64.800 9 L64 19 L61.800 20 Z" fill="#e09a10"/>
<path d="M3.300 8.600 L20.500 1.800 L20.500 0.200 L23 0 L23.200 5.500 L4.900 15 Z" fill="#f8b21a"/>
<path d="M4.900 14.800 L23.800 5.300 L62.300 9.800 L56.600 24.800 Z" fill="#fdf8ae"/>
<path d="M4.900 14.800 L56.600 24.800 L56.600 26.200 L4.900 16.400 Z" fill="#a89c80"/>
<path d="M56.600 25 L62.300 9.800 L63.300 11 L59.500 24 Z" fill="#f0aa18"/>
<path d="M3.300 16 L56.600 26 L56.600 33 L3.300 23.400 Z" fill="url(#bedg)"/>
<path d="M0 8.500 L3.600 8 L5.200 9.500 L5.500 26 L2.500 27 L1 25 Z" fill="url(#bedg)"/>
<path d="M55.200 24.500 L60.200 23.400 L59.200 39 L57.500 40 L55.500 39 Z" fill="url(#bedg)"/>
</g>
<rect x="674.3" y="166.5" width="19.2" height="23.5" fill="#fff" stroke="#000" stroke-width="1.300"/>
<path d="M679.500 169.500 h10 v2 h-3 v3 h3.500 l-1 4 l-6 2 l-3.500 -1.500 l2 -3 v-4.500 h-2 z" fill="#b4581e"/><rect x="683" y="172" width="3" height="2.500" fill="#f0d8c0"/>
<rect x="694.0" y="92" width="6.3" height="96" fill="#fff"/>
<path d="M694.0 95.9L700.3 89.6M694.0 105.7L700.3 99.4M694.0 115.5L700.3 109.2M694.0 125.3L700.3 119.0M694.0 135.1L700.3 128.8M694.0 144.9L700.3 138.6M694.0 154.7L700.3 148.4M694.0 164.5L700.3 158.2M694.0 174.3L700.3 168.0M694.0 184.1L700.3 177.8M694.0 193.9L700.3 187.6" stroke="#1a1a1a" stroke-width="1" fill="none"/>
<path d="M694.2 92V188" stroke="#000" stroke-width="1.300"/><path d="M700.3 92V188" stroke="#000" stroke-width="1.900"/>
</g>
<path d="M191 92.500H1003" stroke="#5e5b50" stroke-width="1.200"/><path d="M190.500 93V185" stroke="#5e5b50" stroke-width="1.200"/>
<rect x="191" y="185" width="830" height="6" fill="#ece9d8"/>
<rect x="1003" y="74" width="18" height="111" fill="#ece9d8"/>
<rect x="1003" y="93" width="17" height="92" fill="#f6f5f0"/>
<rect x="1004.500" y="93.500" width="14" height="15.500" rx="2" fill="url(#sbp)" stroke="#fff"/>
<path d="M1008 103.500 l3.500 -3.500 l3.500 3.500" fill="none" stroke="#4d6185" stroke-width="2"/>
<rect x="1004.500" y="119.500" width="14" height="7.500" rx="2" fill="url(#sbp)" stroke="#fff"/>
<rect x="1004.500" y="168.500" width="14" height="15.500" rx="2" fill="url(#sbp)" stroke="#fff"/>
<path d="M1008 174.500 l3.500 3.500 l3.500 -3.500" fill="none" stroke="#4d6185" stroke-width="2"/>
</svg>
<svg class="abs" style="left:170px;top:185px" width="40" height="7" viewBox="170 185 40 7"><path d="M174 191 L177.500 187 L181 191 Z M185.500 187.500 L192.500 187.500 L189 191.500 Z" fill="#000"/></svg>
<div class="abs" style="left:170px;top:191px;width:852px;height:541px;background:#f6f2e6"></div>
<div class="abs" style="left:170px;top:191px;width:852px;height:1px;background:#716f64"></div><div class="abs" style="left:170px;top:191px;width:2px;height:541px;background:#716f64"></div>
<div class="abs" style="left:174px;top:194px;width:846px;height:536px;background:#fff"></div>
<svg class="abs" style="left:174px;top:194px" width="423" height="536" viewBox="174 194 423 536"><defs>
<filter id="na" x="0" y="0" width="100%" height="100%" color-interpolation-filters="sRGB"><feTurbulence type="fractalNoise" baseFrequency="0.25" numOctaves="3" seed="3" result="t"/><feColorMatrix in="t" type="matrix" values="0 0 0 0 0.46  0 0 0 0 0.465  0 0 0 0 0.485  1.2 0 0 0 -0.4"/><feComposite operator="in" in2="SourceGraphic"/></filter>
<filter id="fa" x="0" y="0" width="100%" height="100%" color-interpolation-filters="sRGB"><feTurbulence type="fractalNoise" baseFrequency="0.8" numOctaves="2" seed="8" result="t"/><feColorMatrix in="t" type="matrix" values="0 0 0 0 0.5  0 0 0 0 0.5  0 0 0 0 0.32  1.3 0 0 0 -0.5"/><feComposite operator="in" in2="SourceGraphic"/></filter>
<filter id="ba" x="0" y="0" width="100%" height="100%" color-interpolation-filters="sRGB"><feTurbulence type="fractalNoise" baseFrequency="0.18 0.3" numOctaves="3" seed="5" result="t"/><feColorMatrix in="t" type="matrix" values="0 0 0 0 0.66  0 0 0 0 0.3  0 0 0 0 0.17  1.5 0 0 0 -0.5"/><feComposite operator="in" in2="SourceGraphic"/></filter>
<linearGradient id="tsa" x1="0" y1="0" x2="0.3" y2="1"><stop offset="0" stop-color="#292929"/><stop offset="0.55" stop-color="#383838"/><stop offset="1" stop-color="#414141"/></linearGradient>
<linearGradient id="tva" x1="0" y1="0" x2="1" y2="1"><stop offset="0" stop-color="#404040"/><stop offset="0.5" stop-color="#4a4a4a"/><stop offset="1" stop-color="#3e3e3e"/></linearGradient>
<linearGradient id="cua" x1="0" y1="0" x2="1" y2="0"><stop offset="0" stop-color="#b4a994"/><stop offset="0.12" stop-color="#d6ccb9"/><stop offset="0.25" stop-color="#b0a591"/><stop offset="0.38" stop-color="#dad0bd"/><stop offset="0.5" stop-color="#aca18c"/><stop offset="0.62" stop-color="#d6ccb9"/><stop offset="0.75" stop-color="#b0a591"/><stop offset="0.88" stop-color="#d2c8b4"/><stop offset="1" stop-color="#a0957f"/></linearGradient>
<linearGradient id="dra" x1="0" y1="0" x2="1" y2="0"><stop offset="0" stop-color="#8a4a36"/><stop offset="1" stop-color="#8e4330"/></linearGradient>
<clipPath id="bwa"><polygon points="479.6,405.0 600.0,329.5 600.0,730.0 466.0,730.0"/></clipPath>
<clipPath id="lwa"><polygon points="399.3,619.0 470.0,661.5 475.5,663.0 476.0,730.0 399.3,730.0"/></clipPath>
<clipPath id="gwa"><polygon points="174.0,334.8 203.6,347.3 240.0,362.0 240.0,730.0 174.0,730.0"/></clipPath>
</defs>
<rect x="174" y="194" width="424" height="536" fill="#c6e2f7"/>
<polygon points="174.0,334.8 203.6,347.3 240.0,362.0 240.0,730.0 174.0,730.0" fill="#8d8e92" />
<g clip-path="url(#gwa)">
<rect x="174" y="330" width="62" height="400" fill="#6a6c72" filter="url(#na)"/>
<polyline points="174.0,402.0 240.0,422.1" fill="none" stroke="#32353e" stroke-width="1.2" />
<polyline points="174.0,472.0 240.0,481.8" fill="none" stroke="#32353e" stroke-width="1.2" />
<polyline points="174.0,539.0 240.0,539.0" fill="none" stroke="#32353e" stroke-width="1.2" />
<polyline points="174.0,604.0 240.0,594.4" fill="none" stroke="#32353e" stroke-width="1.2" />
<polyline points="174.0,668.0 240.0,649.0" fill="none" stroke="#32353e" stroke-width="1.2" />
<polyline points="174.0,729.5 240.0,701.5" fill="none" stroke="#32353e" stroke-width="1.2" />
<line x1="192.5" y1="343.0" x2="201.5" y2="454.0" stroke="#4e525e" stroke-width="0.8" stroke-dasharray="4.5 3.5" opacity="0.55"/>
<line x1="201.5" y1="454.0" x2="212.5" y2="590.0" stroke="#4e525e" stroke-width="0.8" stroke-dasharray="4.5 3.5" opacity="0.55"/>
<line x1="212.5" y1="590.0" x2="224.0" y2="730.0" stroke="#4e525e" stroke-width="0.8" stroke-dasharray="4.5 3.5" opacity="0.55"/>
<line x1="176.5" y1="420.0" x2="178.6" y2="450.0" stroke="#4e525e" stroke-width="0.8" stroke-dasharray="4.5 3.5" opacity="0.55"/>
<line x1="178.6" y1="450.0" x2="190.0" y2="584.0" stroke="#4e525e" stroke-width="0.8" stroke-dasharray="4.5 3.5" opacity="0.55"/>
<line x1="190.0" y1="584.0" x2="203.0" y2="730.0" stroke="#4e525e" stroke-width="0.8" stroke-dasharray="4.5 3.5" opacity="0.55"/>
<line x1="174.0" y1="640.0" x2="181.0" y2="730.0" stroke="#4e525e" stroke-width="0.8" stroke-dasharray="4.5 3.5" opacity="0.55"/>
</g>
<polygon points="254.0,294.6 374.0,374.0 375.8,730.0 276.0,730.0" fill="#0166b6" />
<polygon points="306.0,449.0 351.5,462.0 357.5,624.0 308.0,640.0" fill="#565a38" />
<polygon points="306.0,449.0 351.5,462.0 357.5,624.0 308.0,640.0" fill="#8a8a50" filter="url(#fa)"/>
<polyline points="323.5,505.0 322.0,520.0 323.5,527.0" fill="none" stroke="#2e3a20" stroke-width="2" />
<polygon points="319.0,526.0 328.0,526.5 326.2,539.5 321.0,539.5" fill="#4e3626" />
<polygon points="307.4,562.0 313.0,562.0 312.6,569.6 307.8,569.6" fill="#4a3424" />
<polygon points="343.4,611.5 350.5,611.0 349.6,622.5 344.6,622.5" fill="#5e4632" />
<polyline points="347.0,611.0 346.5,603.0" fill="none" stroke="#3a4a24" stroke-width="1.2" />
<path d="M313.5 501.5 C313.5 478 318 459 325.5 458.7 C334 459 341 478 342.8 504.5" fill="none" stroke="#dcdce0" stroke-width="1.3"/>
<path d="M318.7 469.5 L329.2 501.5 L337.4 472" fill="none" stroke="#d0d0d6" stroke-width="1.3"/>
<path d="M320.5 499 C321 486 323 476.5 327 476 C332 476.5 336 488 337.6 503" fill="none" stroke="#4c4c50" stroke-width="1.2"/>
<polyline points="313.3,502.0 315.5,637.0" fill="none" stroke="#d4d4da" stroke-width="1.4" />
<polyline points="343.0,506.0 346.0,628.0" fill="none" stroke="#d4d4da" stroke-width="1.4" />
<polygon points="306.0,500.5 352.8,505.3 352.8,508.3 306.0,503.7" fill="#c2c2c8" />
<polygon points="306.0,446.6 351.2,459.6 351.2,464.4 306.0,452.0" fill="#bcbcc2" />
<polyline points="306.0,452.4 351.2,464.8" fill="none" stroke="#4a4a4a" stroke-width="0.8" stroke-dasharray="2 2"/>
<polygon points="351.0,462.0 353.5,462.0 358.5,625.0 355.5,625.0" fill="#b4b4ba" />
<polygon points="306.0,569.8 314.5,570.2 314.5,573.6 306.0,573.4" fill="#cfcfd3" />
<polygon points="344.8,565.6 355.0,565.0 355.0,568.6 344.8,569.0" fill="#cfcfd3" />
<polygon points="306.0,636.8 357.8,621.5 358.0,628.0 306.0,645.0" fill="#c9c9cf" />
<polygon points="306.0,643.5 358.0,626.5 358.0,631.0 306.0,648.4" fill="#f6f6fa" />
<polygon points="306.0,648.4 358.0,631.0 358.2,637.5 306.0,655.2" fill="#b9b9c1" />
<polyline points="306.0,651.0 358.0,633.6" fill="none" stroke="#e8e8ee" stroke-width="0.8" stroke-dasharray="2 1.5"/>
<polygon points="277.0,364.0 305.3,372.0 306.2,450.0 307.5,580.0 308.2,672.0 309.5,690.0 311.5,730.0 297.0,730.0 292.5,694.0 291.5,672.0 289.0,584.0 281.3,450.0" fill="url(#cua)" />
<polyline points="279.5,366.0 296.7,670.0" fill="none" stroke="#8f8470" stroke-width="1.1" opacity="0.8"/>
<polyline points="284.5,367.5 300.5,670.0" fill="none" stroke="#e0d6c4" stroke-width="1.1" opacity="0.8"/>
<polyline points="289.5,369.0 303.0,670.0" fill="none" stroke="#8f8470" stroke-width="1.1" opacity="0.8"/>
<polyline points="295.0,370.5 305.5,670.0" fill="none" stroke="#ddd3c1" stroke-width="1.1" opacity="0.8"/>
<polyline points="300.5,372.0 308.1,670.0" fill="none" stroke="#8a7f6b" stroke-width="1.1" opacity="0.8"/>
<polygon points="349.5,398.0 366.8,407.0 367.1,450.0 367.3,640.0 367.0,702.0 357.5,702.0 356.2,640.0 350.8,450.0" fill="url(#cua)" />
<polyline points="353.0,400.0 358.5,700.0" fill="none" stroke="#8f8470" stroke-width="1" opacity="0.8"/>
<polyline points="357.0,401.5 361.0,700.0" fill="none" stroke="#e0d6c4" stroke-width="1" opacity="0.8"/>
<polyline points="361.0,403.0 364.0,700.0" fill="none" stroke="#8a7f6b" stroke-width="1" opacity="0.8"/>
<polyline points="364.5,404.5 366.0,700.0" fill="none" stroke="#d6ccb9" stroke-width="1" opacity="0.8"/>
<polyline points="268.0,353.2 372.0,409.0" fill="none" stroke="#6a5e4c" stroke-width="5.2" stroke-linecap="round"/>
<polyline points="268.0,352.2 372.0,408.0" fill="none" stroke="#b8ad99" stroke-width="3.6" stroke-linecap="round"/>
<polyline points="268.0,351.4 372.0,407.2" fill="none" stroke="#ddd4c3" stroke-width="1.6" stroke-linecap="round"/>
<ellipse cx="266.6" cy="351.2" rx="4" ry="10.4" fill="#9c917d" transform="rotate(-8 266.6 351.2)"/>
<ellipse cx="265.8" cy="348.5" rx="2.6" ry="7.5" fill="#d8cfbd" transform="rotate(-8 265.8 348.5)"/>
<ellipse cx="272.6" cy="356.5" rx="2.1" ry="11" fill="#a89d89" transform="rotate(-8 272.6 356.5)"/>
<ellipse cx="272.2" cy="354.5" rx="1" ry="7" fill="#d8cebc" transform="rotate(-8 272.2 354.5)"/>
<path d="M278.2 385.5 V348.5 Q280.8 343.0 283.4 348.5 V385.5 Z" fill="#c9beaa"/>
<path d="M283.0 348.5 V385.5" stroke="#9c917d" stroke-width="1.3"/>
<path d="M284.4 383.8 V346.8 Q287.1 341.3 289.8 346.8 V383.8 Z" fill="#d2c7b3"/>
<path d="M289.4 346.8 V383.8" stroke="#a59a86" stroke-width="1.3"/>
<path d="M290.6 388.0 V351.0 Q293.2 345.5 295.8 351.0 V388.0 Z" fill="#cabfab"/>
<path d="M295.4 351.0 V388.0" stroke="#978c78" stroke-width="1.3"/>
<path d="M296.3 391.5 V354.5 Q298.9 349.0 301.5 354.5 V391.5 Z" fill="#cfc4b0"/>
<path d="M301.1 354.5 V391.5" stroke="#9f9480" stroke-width="1.3"/>
<path d="M301.6 397.0 V360.0 Q303.9 354.5 306.2 360.0 V397.0 Z" fill="#c2b7a3"/>
<path d="M305.8 360.0 V397.0" stroke="#8f8470" stroke-width="1.3"/>
<rect x="283.6" y="362.5" width="1.3" height="4.5" fill="#5a4e40"/>
<rect x="289.8" y="366.0" width="1.3" height="4.5" fill="#5a4e40"/>
<rect x="295.7" y="369.5" width="1.3" height="4.5" fill="#5a4e40"/>
<rect x="301.0" y="372.5" width="1.3" height="4.5" fill="#5a4e40"/>
<path d="M349.3 416.5 V389.0 Q351.4 384.5 353.5 389.0 V416.5 Z" fill="#c9beaa"/>
<path d="M353.1 389.5 V416.5" stroke="#9c917d" stroke-width="1.1"/>
<path d="M354.0 418.5 V391.0 Q356.0 386.5 358.0 391.0 V418.5 Z" fill="#d2c7b3"/>
<path d="M357.6 391.5 V418.5" stroke="#a59a86" stroke-width="1.1"/>
<path d="M358.3 420.5 V393.0 Q360.1 388.5 361.9 393.0 V420.5 Z" fill="#cabfab"/>
<path d="M361.5 393.5 V420.5" stroke="#978c78" stroke-width="1.1"/>
<path d="M362.2 422.5 V395.0 Q364.1 390.5 366.0 395.0 V422.5 Z" fill="#cfc4b0"/>
<path d="M365.6 395.5 V422.5" stroke="#9f9480" stroke-width="1.1"/>
<rect x="353.3" y="398.0" width="1.1" height="4" fill="#5a4e40"/>
<rect x="357.6" y="400.5" width="1.1" height="4" fill="#5a4e40"/>
<rect x="361.6" y="402.5" width="1.1" height="4" fill="#5a4e40"/>
<ellipse cx="369" cy="403" rx="1.7" ry="6.5" fill="#c4b9a5" transform="rotate(-6 369 403)"/>
<ellipse cx="372.4" cy="406.5" rx="2" ry="8" fill="#b0a591" transform="rotate(-6 372.4 406.5)"/>
<ellipse cx="372" cy="404.5" rx="0.9" ry="5" fill="#ddd3c1" transform="rotate(-6 372 404.5)"/>
<polygon points="291.2,676.0 293.5,668.0 308.2,672.5 309.2,689.0 306.0,699.0 292.6,697.0" fill="#b0a592" />
<polygon points="374.0,374.0 401.2,330.2 400.0,730.0 375.5,730.0" fill="#b2b2b2" />
<polygon points="376.6,450.5 394.8,435.5 394.3,730.0 376.8,730.0" fill="url(#dra)" />
<polygon points="376.6,450.5 394.8,435.5 394.8,444.0 377.2,460.0" fill="#a24c30" />
<polyline points="376.6,450.0 394.8,435.0" fill="none" stroke="#b8e6ea" stroke-width="1.2" />
<polyline points="375.9,452.0 376.3,730.0" fill="none" stroke="#9a9a9a" stroke-width="1" />
<polygon points="401.2,330.2 479.6,405.0 472.0,730.0 399.8,730.0" fill="#bab890" />
<polygon points="479.6,405.0 600.0,329.5 600.0,730.0 466.0,730.0" fill="#c8663c" />
<polygon points="479.6,405.0 600.0,329.5 600.0,730.0 466.0,730.0" fill="#000" filter="url(#ba)"/>
<g clip-path="url(#bwa)">
<line x1="605.9" y1="316.3" x2="604.2" y2="335.3" stroke="#c08c60" stroke-width="0.8" opacity="0.75"/>
<line x1="583.8" y1="330.9" x2="582.4" y2="348.5" stroke="#c08c60" stroke-width="0.8" opacity="0.75"/>
<line x1="564.4" y1="343.6" x2="563.2" y2="360.1" stroke="#c08c60" stroke-width="0.8" opacity="0.75"/>
<line x1="547.3" y1="354.9" x2="546.3" y2="370.3" stroke="#c08c60" stroke-width="0.8" opacity="0.75"/>
<line x1="532.1" y1="364.9" x2="531.2" y2="379.5" stroke="#c08c60" stroke-width="0.8" opacity="0.75"/>
<line x1="518.4" y1="373.9" x2="517.6" y2="387.7" stroke="#c08c60" stroke-width="0.8" opacity="0.75"/>
<line x1="506.0" y1="382.0" x2="505.4" y2="395.0" stroke="#c08c60" stroke-width="0.8" opacity="0.75"/>
<line x1="494.9" y1="389.3" x2="494.3" y2="401.7" stroke="#c08c60" stroke-width="0.8" opacity="0.75"/>
<line x1="484.7" y1="396.0" x2="484.2" y2="407.8" stroke="#c08c60" stroke-width="0.8" opacity="0.75"/>
<line x1="475.4" y1="402.1" x2="475.0" y2="413.4" stroke="#c08c60" stroke-width="0.8" opacity="0.75"/>
<line x1="466.9" y1="407.8" x2="466.5" y2="418.5" stroke="#c08c60" stroke-width="0.8" opacity="0.75"/>
<line x1="594.5" y1="341.2" x2="592.9" y2="359.4" stroke="#c08c60" stroke-width="0.8" opacity="0.75"/>
<line x1="573.8" y1="353.7" x2="572.5" y2="370.6" stroke="#c08c60" stroke-width="0.8" opacity="0.75"/>
<line x1="555.6" y1="364.7" x2="554.5" y2="380.5" stroke="#c08c60" stroke-width="0.8" opacity="0.75"/>
<line x1="539.5" y1="374.5" x2="538.5" y2="389.4" stroke="#c08c60" stroke-width="0.8" opacity="0.75"/>
<line x1="525.0" y1="383.2" x2="524.2" y2="397.2" stroke="#c08c60" stroke-width="0.8" opacity="0.75"/>
<line x1="512.1" y1="391.0" x2="511.4" y2="404.3" stroke="#c08c60" stroke-width="0.8" opacity="0.75"/>
<line x1="500.3" y1="398.1" x2="499.7" y2="410.7" stroke="#c08c60" stroke-width="0.8" opacity="0.75"/>
<line x1="489.7" y1="404.6" x2="489.2" y2="416.6" stroke="#c08c60" stroke-width="0.8" opacity="0.75"/>
<line x1="479.9" y1="410.4" x2="479.5" y2="421.9" stroke="#c08c60" stroke-width="0.8" opacity="0.75"/>
<line x1="471.0" y1="415.8" x2="470.7" y2="426.8" stroke="#c08c60" stroke-width="0.8" opacity="0.75"/>
<line x1="605.9" y1="352.2" x2="604.2" y2="370.9" stroke="#c08c60" stroke-width="0.8" opacity="0.75"/>
<line x1="583.8" y1="364.4" x2="582.4" y2="381.7" stroke="#c08c60" stroke-width="0.8" opacity="0.75"/>
<line x1="564.4" y1="375.1" x2="563.2" y2="391.3" stroke="#c08c60" stroke-width="0.8" opacity="0.75"/>
<line x1="547.3" y1="384.5" x2="546.3" y2="399.7" stroke="#c08c60" stroke-width="0.8" opacity="0.75"/>
<line x1="532.1" y1="392.9" x2="531.2" y2="407.3" stroke="#c08c60" stroke-width="0.8" opacity="0.75"/>
<line x1="518.4" y1="400.5" x2="517.6" y2="414.0" stroke="#c08c60" stroke-width="0.8" opacity="0.75"/>
<line x1="506.0" y1="407.3" x2="505.4" y2="420.1" stroke="#c08c60" stroke-width="0.8" opacity="0.75"/>
<line x1="494.9" y1="413.4" x2="494.3" y2="425.6" stroke="#c08c60" stroke-width="0.8" opacity="0.75"/>
<line x1="484.7" y1="419.0" x2="484.2" y2="430.7" stroke="#c08c60" stroke-width="0.8" opacity="0.75"/>
<line x1="475.4" y1="424.2" x2="475.0" y2="435.3" stroke="#c08c60" stroke-width="0.8" opacity="0.75"/>
<line x1="466.9" y1="428.9" x2="466.5" y2="439.5" stroke="#c08c60" stroke-width="0.8" opacity="0.75"/>
<line x1="594.5" y1="375.7" x2="592.9" y2="393.5" stroke="#c08c60" stroke-width="0.8" opacity="0.75"/>
<line x1="573.8" y1="386.0" x2="572.5" y2="402.6" stroke="#c08c60" stroke-width="0.8" opacity="0.75"/>
<line x1="555.6" y1="395.1" x2="554.5" y2="410.6" stroke="#c08c60" stroke-width="0.8" opacity="0.75"/>
<line x1="539.5" y1="403.1" x2="538.5" y2="417.8" stroke="#c08c60" stroke-width="0.8" opacity="0.75"/>
<line x1="525.0" y1="410.3" x2="524.2" y2="424.2" stroke="#c08c60" stroke-width="0.8" opacity="0.75"/>
<line x1="512.1" y1="416.8" x2="511.4" y2="429.9" stroke="#c08c60" stroke-width="0.8" opacity="0.75"/>
<line x1="500.3" y1="422.7" x2="499.7" y2="435.1" stroke="#c08c60" stroke-width="0.8" opacity="0.75"/>
<line x1="489.7" y1="428.0" x2="489.2" y2="439.8" stroke="#c08c60" stroke-width="0.8" opacity="0.75"/>
<line x1="479.9" y1="432.8" x2="479.5" y2="444.1" stroke="#c08c60" stroke-width="0.8" opacity="0.75"/>
<line x1="471.0" y1="437.3" x2="470.7" y2="448.1" stroke="#c08c60" stroke-width="0.8" opacity="0.75"/>
<line x1="605.9" y1="387.7" x2="604.2" y2="406.0" stroke="#c08c60" stroke-width="0.8" opacity="0.75"/>
<line x1="583.8" y1="397.6" x2="582.4" y2="414.6" stroke="#c08c60" stroke-width="0.8" opacity="0.75"/>
<line x1="564.4" y1="406.2" x2="563.2" y2="422.1" stroke="#c08c60" stroke-width="0.8" opacity="0.75"/>
<line x1="547.3" y1="413.9" x2="546.3" y2="428.8" stroke="#c08c60" stroke-width="0.8" opacity="0.75"/>
<line x1="532.0" y1="420.7" x2="531.2" y2="434.8" stroke="#c08c60" stroke-width="0.8" opacity="0.75"/>
<line x1="518.4" y1="426.8" x2="517.6" y2="440.1" stroke="#c08c60" stroke-width="0.8" opacity="0.75"/>
<line x1="506.0" y1="432.3" x2="505.4" y2="444.9" stroke="#c08c60" stroke-width="0.8" opacity="0.75"/>
<line x1="494.9" y1="437.3" x2="494.3" y2="449.3" stroke="#c08c60" stroke-width="0.8" opacity="0.75"/>
<line x1="484.7" y1="441.8" x2="484.2" y2="453.3" stroke="#c08c60" stroke-width="0.8" opacity="0.75"/>
<line x1="475.4" y1="446.0" x2="475.0" y2="456.9" stroke="#c08c60" stroke-width="0.8" opacity="0.75"/>
<line x1="466.9" y1="449.8" x2="466.5" y2="460.3" stroke="#c08c60" stroke-width="0.8" opacity="0.75"/>
<line x1="594.5" y1="409.8" x2="592.9" y2="427.3" stroke="#c08c60" stroke-width="0.8" opacity="0.75"/>
<line x1="573.8" y1="418.0" x2="572.5" y2="434.3" stroke="#c08c60" stroke-width="0.8" opacity="0.75"/>
<line x1="555.6" y1="425.2" x2="554.5" y2="440.5" stroke="#c08c60" stroke-width="0.8" opacity="0.75"/>
<line x1="539.5" y1="431.5" x2="538.5" y2="445.9" stroke="#c08c60" stroke-width="0.8" opacity="0.75"/>
<line x1="525.0" y1="437.2" x2="524.2" y2="450.8" stroke="#c08c60" stroke-width="0.8" opacity="0.75"/>
<line x1="512.0" y1="442.3" x2="511.4" y2="455.2" stroke="#c08c60" stroke-width="0.8" opacity="0.75"/>
<line x1="500.3" y1="446.9" x2="499.7" y2="459.2" stroke="#c08c60" stroke-width="0.8" opacity="0.75"/>
<line x1="489.7" y1="451.1" x2="489.2" y2="462.8" stroke="#c08c60" stroke-width="0.8" opacity="0.75"/>
<line x1="479.9" y1="455.0" x2="479.5" y2="466.1" stroke="#c08c60" stroke-width="0.8" opacity="0.75"/>
<line x1="471.0" y1="458.5" x2="470.7" y2="469.1" stroke="#c08c60" stroke-width="0.8" opacity="0.75"/>
<line x1="605.9" y1="422.9" x2="604.2" y2="440.8" stroke="#c08c60" stroke-width="0.8" opacity="0.75"/>
<line x1="583.8" y1="430.4" x2="582.4" y2="447.1" stroke="#c08c60" stroke-width="0.8" opacity="0.75"/>
<line x1="564.4" y1="437.1" x2="563.3" y2="452.7" stroke="#c08c60" stroke-width="0.8" opacity="0.75"/>
<line x1="547.3" y1="442.9" x2="546.3" y2="457.6" stroke="#c08c60" stroke-width="0.8" opacity="0.75"/>
<line x1="532.0" y1="448.1" x2="531.2" y2="462.0" stroke="#c08c60" stroke-width="0.8" opacity="0.75"/>
<line x1="518.4" y1="452.8" x2="517.6" y2="466.0" stroke="#c08c60" stroke-width="0.8" opacity="0.75"/>
<line x1="506.0" y1="457.0" x2="505.4" y2="469.5" stroke="#c08c60" stroke-width="0.8" opacity="0.75"/>
<line x1="494.9" y1="460.9" x2="494.3" y2="472.7" stroke="#c08c60" stroke-width="0.8" opacity="0.75"/>
<line x1="484.7" y1="464.3" x2="484.2" y2="475.7" stroke="#c08c60" stroke-width="0.8" opacity="0.75"/>
<line x1="475.4" y1="467.5" x2="475.0" y2="478.4" stroke="#c08c60" stroke-width="0.8" opacity="0.75"/>
<line x1="466.9" y1="470.4" x2="466.5" y2="480.8" stroke="#c08c60" stroke-width="0.8" opacity="0.75"/>
<line x1="594.5" y1="443.6" x2="592.9" y2="460.8" stroke="#c08c60" stroke-width="0.8" opacity="0.75"/>
<line x1="573.8" y1="449.6" x2="572.5" y2="465.6" stroke="#c08c60" stroke-width="0.8" opacity="0.75"/>
<line x1="555.6" y1="454.9" x2="554.5" y2="470.0" stroke="#c08c60" stroke-width="0.8" opacity="0.75"/>
<line x1="539.5" y1="459.6" x2="538.5" y2="473.8" stroke="#c08c60" stroke-width="0.8" opacity="0.75"/>
<line x1="525.0" y1="463.8" x2="524.2" y2="477.2" stroke="#c08c60" stroke-width="0.8" opacity="0.75"/>
<line x1="512.0" y1="467.6" x2="511.4" y2="480.3" stroke="#c08c60" stroke-width="0.8" opacity="0.75"/>
<line x1="500.3" y1="471.0" x2="499.7" y2="483.1" stroke="#c08c60" stroke-width="0.8" opacity="0.75"/>
<line x1="489.7" y1="474.1" x2="489.2" y2="485.6" stroke="#c08c60" stroke-width="0.8" opacity="0.75"/>
<line x1="479.9" y1="476.9" x2="479.5" y2="487.9" stroke="#c08c60" stroke-width="0.8" opacity="0.75"/>
<line x1="471.0" y1="479.5" x2="470.7" y2="490.0" stroke="#c08c60" stroke-width="0.8" opacity="0.75"/>
<line x1="605.9" y1="457.7" x2="604.2" y2="475.2" stroke="#c08c60" stroke-width="0.8" opacity="0.75"/>
<line x1="583.8" y1="463.0" x2="582.4" y2="479.3" stroke="#c08c60" stroke-width="0.8" opacity="0.75"/>
<line x1="564.4" y1="467.6" x2="563.3" y2="483.0" stroke="#c08c60" stroke-width="0.8" opacity="0.75"/>
<line x1="547.3" y1="471.7" x2="546.3" y2="486.1" stroke="#c08c60" stroke-width="0.8" opacity="0.75"/>
<line x1="532.0" y1="475.3" x2="531.2" y2="489.0" stroke="#c08c60" stroke-width="0.8" opacity="0.75"/>
<line x1="518.4" y1="478.6" x2="517.6" y2="491.5" stroke="#c08c60" stroke-width="0.8" opacity="0.75"/>
<line x1="506.0" y1="481.6" x2="505.4" y2="493.8" stroke="#c08c60" stroke-width="0.8" opacity="0.75"/>
<line x1="494.9" y1="484.2" x2="494.3" y2="495.9" stroke="#c08c60" stroke-width="0.8" opacity="0.75"/>
<line x1="484.7" y1="486.7" x2="484.2" y2="497.8" stroke="#c08c60" stroke-width="0.8" opacity="0.75"/>
<line x1="475.4" y1="488.9" x2="475.0" y2="499.6" stroke="#c08c60" stroke-width="0.8" opacity="0.75"/>
<line x1="466.9" y1="490.9" x2="466.5" y2="501.2" stroke="#c08c60" stroke-width="0.8" opacity="0.75"/>
<line x1="594.5" y1="477.1" x2="592.9" y2="493.9" stroke="#c08c60" stroke-width="0.8" opacity="0.75"/>
<line x1="573.8" y1="481.0" x2="572.5" y2="496.7" stroke="#c08c60" stroke-width="0.8" opacity="0.75"/>
<line x1="555.6" y1="484.4" x2="554.5" y2="499.2" stroke="#c08c60" stroke-width="0.8" opacity="0.75"/>
<line x1="539.5" y1="487.4" x2="538.5" y2="501.4" stroke="#c08c60" stroke-width="0.8" opacity="0.75"/>
<line x1="525.0" y1="490.1" x2="524.2" y2="503.3" stroke="#c08c60" stroke-width="0.8" opacity="0.75"/>
<line x1="512.0" y1="492.6" x2="511.4" y2="505.1" stroke="#c08c60" stroke-width="0.8" opacity="0.75"/>
<line x1="500.3" y1="494.8" x2="499.7" y2="506.7" stroke="#c08c60" stroke-width="0.8" opacity="0.75"/>
<line x1="489.7" y1="496.8" x2="489.2" y2="508.1" stroke="#c08c60" stroke-width="0.8" opacity="0.75"/>
<line x1="479.9" y1="498.6" x2="479.5" y2="509.5" stroke="#c08c60" stroke-width="0.8" opacity="0.75"/>
<line x1="471.0" y1="500.3" x2="470.7" y2="510.7" stroke="#c08c60" stroke-width="0.8" opacity="0.75"/>
<line x1="605.9" y1="492.1" x2="604.2" y2="509.3" stroke="#c08c60" stroke-width="0.8" opacity="0.75"/>
<line x1="583.8" y1="495.1" x2="582.4" y2="511.2" stroke="#c08c60" stroke-width="0.8" opacity="0.75"/>
<line x1="564.4" y1="497.8" x2="563.3" y2="512.9" stroke="#c08c60" stroke-width="0.8" opacity="0.75"/>
<line x1="547.3" y1="500.1" x2="546.3" y2="514.4" stroke="#c08c60" stroke-width="0.8" opacity="0.75"/>
<line x1="532.0" y1="502.2" x2="531.2" y2="515.7" stroke="#c08c60" stroke-width="0.8" opacity="0.75"/>
<line x1="518.4" y1="504.1" x2="517.6" y2="516.8" stroke="#c08c60" stroke-width="0.8" opacity="0.75"/>
<line x1="506.0" y1="505.8" x2="505.4" y2="517.9" stroke="#c08c60" stroke-width="0.8" opacity="0.75"/>
<line x1="494.9" y1="507.3" x2="494.3" y2="518.9" stroke="#c08c60" stroke-width="0.8" opacity="0.75"/>
<line x1="484.7" y1="508.7" x2="484.2" y2="519.7" stroke="#c08c60" stroke-width="0.8" opacity="0.75"/>
<line x1="475.4" y1="510.0" x2="475.0" y2="520.5" stroke="#c08c60" stroke-width="0.8" opacity="0.75"/>
<line x1="466.9" y1="511.2" x2="466.5" y2="521.3" stroke="#c08c60" stroke-width="0.8" opacity="0.75"/>
<line x1="594.5" y1="510.2" x2="593.0" y2="526.7" stroke="#c08c60" stroke-width="0.8" opacity="0.75"/>
<line x1="573.8" y1="512.0" x2="572.5" y2="527.4" stroke="#c08c60" stroke-width="0.8" opacity="0.75"/>
<line x1="555.6" y1="513.5" x2="554.5" y2="528.1" stroke="#c08c60" stroke-width="0.8" opacity="0.75"/>
<line x1="539.5" y1="514.9" x2="538.5" y2="528.6" stroke="#c08c60" stroke-width="0.8" opacity="0.75"/>
<line x1="525.0" y1="516.2" x2="524.2" y2="529.2" stroke="#c08c60" stroke-width="0.8" opacity="0.75"/>
<line x1="512.0" y1="517.3" x2="511.4" y2="529.6" stroke="#c08c60" stroke-width="0.8" opacity="0.75"/>
<line x1="500.3" y1="518.3" x2="499.7" y2="530.1" stroke="#c08c60" stroke-width="0.8" opacity="0.75"/>
<line x1="489.7" y1="519.3" x2="489.2" y2="530.4" stroke="#c08c60" stroke-width="0.8" opacity="0.75"/>
<line x1="479.9" y1="520.1" x2="479.5" y2="530.8" stroke="#c08c60" stroke-width="0.8" opacity="0.75"/>
<line x1="471.0" y1="520.9" x2="470.7" y2="531.1" stroke="#c08c60" stroke-width="0.8" opacity="0.75"/>
<line x1="605.9" y1="526.2" x2="604.2" y2="543.1" stroke="#c08c60" stroke-width="0.8" opacity="0.75"/>
<line x1="583.8" y1="527.0" x2="582.4" y2="542.8" stroke="#c08c60" stroke-width="0.8" opacity="0.75"/>
<line x1="564.4" y1="527.7" x2="563.3" y2="542.5" stroke="#c08c60" stroke-width="0.8" opacity="0.75"/>
<line x1="547.3" y1="528.3" x2="546.3" y2="542.3" stroke="#c08c60" stroke-width="0.8" opacity="0.75"/>
<line x1="532.0" y1="528.9" x2="531.2" y2="542.1" stroke="#c08c60" stroke-width="0.8" opacity="0.75"/>
<line x1="518.4" y1="529.4" x2="517.6" y2="541.9" stroke="#c08c60" stroke-width="0.8" opacity="0.75"/>
<line x1="506.0" y1="529.8" x2="505.4" y2="541.7" stroke="#c08c60" stroke-width="0.8" opacity="0.75"/>
<line x1="494.9" y1="530.2" x2="494.3" y2="541.6" stroke="#c08c60" stroke-width="0.8" opacity="0.75"/>
<line x1="484.7" y1="530.6" x2="484.2" y2="541.4" stroke="#c08c60" stroke-width="0.8" opacity="0.75"/>
<line x1="475.4" y1="530.9" x2="475.0" y2="541.3" stroke="#c08c60" stroke-width="0.8" opacity="0.75"/>
<line x1="466.9" y1="531.2" x2="466.5" y2="541.2" stroke="#c08c60" stroke-width="0.8" opacity="0.75"/>
<line x1="594.5" y1="542.9" x2="593.0" y2="559.1" stroke="#c08c60" stroke-width="0.8" opacity="0.75"/>
<line x1="573.8" y1="542.6" x2="572.5" y2="557.8" stroke="#c08c60" stroke-width="0.8" opacity="0.75"/>
<line x1="555.6" y1="542.4" x2="554.5" y2="556.6" stroke="#c08c60" stroke-width="0.8" opacity="0.75"/>
<line x1="539.5" y1="542.2" x2="538.5" y2="555.6" stroke="#c08c60" stroke-width="0.8" opacity="0.75"/>
<line x1="525.0" y1="542.0" x2="524.2" y2="554.7" stroke="#c08c60" stroke-width="0.8" opacity="0.75"/>
<line x1="512.0" y1="541.8" x2="511.4" y2="553.9" stroke="#c08c60" stroke-width="0.8" opacity="0.75"/>
<line x1="500.3" y1="541.7" x2="499.7" y2="553.2" stroke="#c08c60" stroke-width="0.8" opacity="0.75"/>
<line x1="489.7" y1="541.5" x2="489.2" y2="552.5" stroke="#c08c60" stroke-width="0.8" opacity="0.75"/>
<line x1="479.9" y1="541.4" x2="479.5" y2="551.9" stroke="#c08c60" stroke-width="0.8" opacity="0.75"/>
<line x1="471.0" y1="541.3" x2="470.7" y2="551.3" stroke="#c08c60" stroke-width="0.8" opacity="0.75"/>
<line x1="605.9" y1="559.9" x2="604.2" y2="576.4" stroke="#c08c60" stroke-width="0.8" opacity="0.75"/>
<line x1="583.8" y1="558.5" x2="582.4" y2="574.0" stroke="#c08c60" stroke-width="0.8" opacity="0.75"/>
<line x1="564.4" y1="557.3" x2="563.3" y2="571.8" stroke="#c08c60" stroke-width="0.8" opacity="0.75"/>
<line x1="547.3" y1="556.2" x2="546.3" y2="569.9" stroke="#c08c60" stroke-width="0.8" opacity="0.75"/>
<line x1="532.0" y1="555.2" x2="531.2" y2="568.2" stroke="#c08c60" stroke-width="0.8" opacity="0.75"/>
<line x1="518.4" y1="554.4" x2="517.6" y2="566.7" stroke="#c08c60" stroke-width="0.8" opacity="0.75"/>
<line x1="506.0" y1="553.6" x2="505.4" y2="565.3" stroke="#c08c60" stroke-width="0.8" opacity="0.75"/>
<line x1="494.9" y1="552.9" x2="494.3" y2="564.0" stroke="#c08c60" stroke-width="0.8" opacity="0.75"/>
<line x1="484.7" y1="552.2" x2="484.2" y2="562.9" stroke="#c08c60" stroke-width="0.8" opacity="0.75"/>
<line x1="475.4" y1="551.6" x2="475.0" y2="561.9" stroke="#c08c60" stroke-width="0.8" opacity="0.75"/>
<line x1="466.9" y1="551.1" x2="466.5" y2="560.9" stroke="#c08c60" stroke-width="0.8" opacity="0.75"/>
<line x1="594.5" y1="575.3" x2="593.0" y2="591.2" stroke="#c08c60" stroke-width="0.8" opacity="0.75"/>
<line x1="573.8" y1="573.0" x2="572.5" y2="587.9" stroke="#c08c60" stroke-width="0.8" opacity="0.75"/>
<line x1="555.6" y1="570.9" x2="554.5" y2="584.9" stroke="#c08c60" stroke-width="0.8" opacity="0.75"/>
<line x1="539.5" y1="569.1" x2="538.5" y2="582.3" stroke="#c08c60" stroke-width="0.8" opacity="0.75"/>
<line x1="525.0" y1="567.5" x2="524.2" y2="580.0" stroke="#c08c60" stroke-width="0.8" opacity="0.75"/>
<line x1="512.0" y1="566.0" x2="511.4" y2="577.9" stroke="#c08c60" stroke-width="0.8" opacity="0.75"/>
<line x1="500.3" y1="564.7" x2="499.7" y2="576.1" stroke="#c08c60" stroke-width="0.8" opacity="0.75"/>
<line x1="489.7" y1="563.5" x2="489.2" y2="574.3" stroke="#c08c60" stroke-width="0.8" opacity="0.75"/>
<line x1="479.9" y1="562.4" x2="479.5" y2="572.8" stroke="#c08c60" stroke-width="0.8" opacity="0.75"/>
<line x1="471.0" y1="561.4" x2="470.7" y2="571.3" stroke="#c08c60" stroke-width="0.8" opacity="0.75"/>
<line x1="605.9" y1="593.3" x2="604.2" y2="609.5" stroke="#c08c60" stroke-width="0.8" opacity="0.75"/>
<line x1="583.8" y1="589.7" x2="582.4" y2="604.9" stroke="#c08c60" stroke-width="0.8" opacity="0.75"/>
<line x1="564.4" y1="586.5" x2="563.3" y2="600.8" stroke="#c08c60" stroke-width="0.8" opacity="0.75"/>
<line x1="547.3" y1="583.8" x2="546.3" y2="597.2" stroke="#c08c60" stroke-width="0.8" opacity="0.75"/>
<line x1="532.0" y1="581.3" x2="531.2" y2="594.0" stroke="#c08c60" stroke-width="0.8" opacity="0.75"/>
<line x1="518.4" y1="579.1" x2="517.6" y2="591.2" stroke="#c08c60" stroke-width="0.8" opacity="0.75"/>
<line x1="506.0" y1="577.1" x2="505.4" y2="588.6" stroke="#c08c60" stroke-width="0.8" opacity="0.75"/>
<line x1="494.9" y1="575.3" x2="494.3" y2="586.3" stroke="#c08c60" stroke-width="0.8" opacity="0.75"/>
<line x1="484.7" y1="573.6" x2="484.2" y2="584.1" stroke="#c08c60" stroke-width="0.8" opacity="0.75"/>
<line x1="475.4" y1="572.1" x2="475.0" y2="582.2" stroke="#c08c60" stroke-width="0.8" opacity="0.75"/>
<line x1="466.9" y1="570.7" x2="466.5" y2="580.4" stroke="#c08c60" stroke-width="0.8" opacity="0.75"/>
<line x1="594.5" y1="607.4" x2="593.0" y2="622.9" stroke="#c08c60" stroke-width="0.8" opacity="0.75"/>
<line x1="573.8" y1="603.0" x2="572.5" y2="617.6" stroke="#c08c60" stroke-width="0.8" opacity="0.75"/>
<line x1="555.6" y1="599.2" x2="554.5" y2="612.9" stroke="#c08c60" stroke-width="0.8" opacity="0.75"/>
<line x1="539.4" y1="595.8" x2="538.5" y2="608.8" stroke="#c08c60" stroke-width="0.8" opacity="0.75"/>
<line x1="525.0" y1="592.7" x2="524.2" y2="605.1" stroke="#c08c60" stroke-width="0.8" opacity="0.75"/>
<line x1="512.0" y1="590.0" x2="511.4" y2="601.7" stroke="#c08c60" stroke-width="0.8" opacity="0.75"/>
<line x1="500.3" y1="587.5" x2="499.7" y2="598.7" stroke="#c08c60" stroke-width="0.8" opacity="0.75"/>
<line x1="489.7" y1="585.3" x2="489.2" y2="595.9" stroke="#c08c60" stroke-width="0.8" opacity="0.75"/>
<line x1="479.9" y1="583.2" x2="479.5" y2="593.4" stroke="#c08c60" stroke-width="0.8" opacity="0.75"/>
<line x1="471.0" y1="581.3" x2="470.7" y2="591.1" stroke="#c08c60" stroke-width="0.8" opacity="0.75"/>
<line x1="605.9" y1="626.3" x2="604.2" y2="642.1" stroke="#c08c60" stroke-width="0.8" opacity="0.75"/>
<line x1="583.8" y1="620.5" x2="582.4" y2="635.4" stroke="#c08c60" stroke-width="0.8" opacity="0.75"/>
<line x1="564.4" y1="615.5" x2="563.3" y2="629.5" stroke="#c08c60" stroke-width="0.8" opacity="0.75"/>
<line x1="547.3" y1="611.0" x2="546.3" y2="624.3" stroke="#c08c60" stroke-width="0.8" opacity="0.75"/>
<line x1="532.0" y1="607.1" x2="531.2" y2="619.6" stroke="#c08c60" stroke-width="0.8" opacity="0.75"/>
<line x1="518.4" y1="603.5" x2="517.6" y2="615.4" stroke="#c08c60" stroke-width="0.8" opacity="0.75"/>
<line x1="506.0" y1="600.3" x2="505.4" y2="611.7" stroke="#c08c60" stroke-width="0.8" opacity="0.75"/>
<line x1="494.9" y1="597.4" x2="494.3" y2="608.2" stroke="#c08c60" stroke-width="0.8" opacity="0.75"/>
<line x1="484.7" y1="594.8" x2="484.2" y2="605.1" stroke="#c08c60" stroke-width="0.8" opacity="0.75"/>
<line x1="475.4" y1="592.4" x2="475.0" y2="602.3" stroke="#c08c60" stroke-width="0.8" opacity="0.75"/>
<line x1="466.9" y1="590.2" x2="466.5" y2="599.7" stroke="#c08c60" stroke-width="0.8" opacity="0.75"/>
<line x1="594.4" y1="639.1" x2="593.0" y2="654.3" stroke="#c08c60" stroke-width="0.8" opacity="0.75"/>
<line x1="573.8" y1="632.7" x2="572.5" y2="647.0" stroke="#c08c60" stroke-width="0.8" opacity="0.75"/>
<line x1="555.6" y1="627.1" x2="554.5" y2="640.6" stroke="#c08c60" stroke-width="0.8" opacity="0.75"/>
<line x1="539.4" y1="622.2" x2="538.5" y2="634.9" stroke="#c08c60" stroke-width="0.8" opacity="0.75"/>
<line x1="525.0" y1="617.7" x2="524.2" y2="629.8" stroke="#c08c60" stroke-width="0.8" opacity="0.75"/>
<line x1="512.0" y1="613.7" x2="511.4" y2="625.2" stroke="#c08c60" stroke-width="0.8" opacity="0.75"/>
<line x1="500.3" y1="610.1" x2="499.7" y2="621.1" stroke="#c08c60" stroke-width="0.8" opacity="0.75"/>
<line x1="489.7" y1="606.8" x2="489.2" y2="617.3" stroke="#c08c60" stroke-width="0.8" opacity="0.75"/>
<line x1="479.9" y1="603.8" x2="479.5" y2="613.9" stroke="#c08c60" stroke-width="0.8" opacity="0.75"/>
<line x1="471.0" y1="601.1" x2="470.7" y2="610.7" stroke="#c08c60" stroke-width="0.8" opacity="0.75"/>
<line x1="605.9" y1="658.9" x2="604.2" y2="674.4" stroke="#c08c60" stroke-width="0.8" opacity="0.75"/>
<line x1="583.8" y1="651.0" x2="582.4" y2="665.6" stroke="#c08c60" stroke-width="0.8" opacity="0.75"/>
<line x1="564.4" y1="644.1" x2="563.3" y2="657.9" stroke="#c08c60" stroke-width="0.8" opacity="0.75"/>
<line x1="547.3" y1="638.0" x2="546.3" y2="651.0" stroke="#c08c60" stroke-width="0.8" opacity="0.75"/>
<line x1="532.0" y1="632.6" x2="531.2" y2="644.9" stroke="#c08c60" stroke-width="0.8" opacity="0.75"/>
<line x1="518.4" y1="627.7" x2="517.6" y2="639.4" stroke="#c08c60" stroke-width="0.8" opacity="0.75"/>
<line x1="506.0" y1="623.3" x2="505.4" y2="634.5" stroke="#c08c60" stroke-width="0.8" opacity="0.75"/>
<line x1="494.9" y1="619.3" x2="494.3" y2="630.0" stroke="#c08c60" stroke-width="0.8" opacity="0.75"/>
<line x1="484.7" y1="615.7" x2="484.2" y2="625.9" stroke="#c08c60" stroke-width="0.8" opacity="0.75"/>
<line x1="475.4" y1="612.4" x2="475.0" y2="622.2" stroke="#c08c60" stroke-width="0.8" opacity="0.75"/>
<line x1="466.9" y1="609.4" x2="466.5" y2="618.8" stroke="#c08c60" stroke-width="0.8" opacity="0.75"/>
<line x1="594.4" y1="670.5" x2="593.0" y2="685.4" stroke="#c08c60" stroke-width="0.8" opacity="0.75"/>
<line x1="573.8" y1="662.1" x2="572.6" y2="676.1" stroke="#c08c60" stroke-width="0.8" opacity="0.75"/>
<line x1="555.6" y1="654.8" x2="554.5" y2="668.0" stroke="#c08c60" stroke-width="0.8" opacity="0.75"/>
<line x1="539.4" y1="648.2" x2="538.5" y2="660.8" stroke="#c08c60" stroke-width="0.8" opacity="0.75"/>
<line x1="525.0" y1="642.4" x2="524.2" y2="654.3" stroke="#c08c60" stroke-width="0.8" opacity="0.75"/>
<line x1="512.0" y1="637.2" x2="511.4" y2="648.5" stroke="#c08c60" stroke-width="0.8" opacity="0.75"/>
<line x1="500.3" y1="632.4" x2="499.7" y2="643.2" stroke="#c08c60" stroke-width="0.8" opacity="0.75"/>
<line x1="489.7" y1="628.1" x2="489.2" y2="638.4" stroke="#c08c60" stroke-width="0.8" opacity="0.75"/>
<line x1="479.9" y1="624.2" x2="479.5" y2="634.1" stroke="#c08c60" stroke-width="0.8" opacity="0.75"/>
<line x1="471.0" y1="620.6" x2="470.7" y2="630.1" stroke="#c08c60" stroke-width="0.8" opacity="0.75"/>
<line x1="605.9" y1="691.2" x2="604.2" y2="706.4" stroke="#c08c60" stroke-width="0.8" opacity="0.75"/>
<line x1="583.8" y1="681.2" x2="582.4" y2="695.5" stroke="#c08c60" stroke-width="0.8" opacity="0.75"/>
<line x1="564.4" y1="672.5" x2="563.3" y2="685.9" stroke="#c08c60" stroke-width="0.8" opacity="0.75"/>
<line x1="547.3" y1="664.7" x2="546.3" y2="677.5" stroke="#c08c60" stroke-width="0.8" opacity="0.75"/>
<line x1="532.0" y1="657.8" x2="531.2" y2="669.9" stroke="#c08c60" stroke-width="0.8" opacity="0.75"/>
<line x1="518.4" y1="651.6" x2="517.6" y2="663.1" stroke="#c08c60" stroke-width="0.8" opacity="0.75"/>
<line x1="506.0" y1="646.1" x2="505.4" y2="657.0" stroke="#c08c60" stroke-width="0.8" opacity="0.75"/>
<line x1="494.9" y1="641.0" x2="494.3" y2="651.5" stroke="#c08c60" stroke-width="0.8" opacity="0.75"/>
<line x1="484.7" y1="636.4" x2="484.2" y2="646.5" stroke="#c08c60" stroke-width="0.8" opacity="0.75"/>
<line x1="475.4" y1="632.2" x2="475.0" y2="641.9" stroke="#c08c60" stroke-width="0.8" opacity="0.75"/>
<line x1="466.9" y1="628.4" x2="466.5" y2="637.6" stroke="#c08c60" stroke-width="0.8" opacity="0.75"/>
<line x1="594.4" y1="701.5" x2="593.0" y2="716.1" stroke="#c08c60" stroke-width="0.8" opacity="0.75"/>
<line x1="573.8" y1="691.2" x2="572.6" y2="704.9" stroke="#c08c60" stroke-width="0.8" opacity="0.75"/>
<line x1="555.6" y1="682.1" x2="554.5" y2="695.1" stroke="#c08c60" stroke-width="0.8" opacity="0.75"/>
<line x1="539.4" y1="674.0" x2="538.6" y2="686.3" stroke="#c08c60" stroke-width="0.8" opacity="0.75"/>
<line x1="525.0" y1="666.8" x2="524.2" y2="678.5" stroke="#c08c60" stroke-width="0.8" opacity="0.75"/>
<line x1="512.0" y1="660.3" x2="511.4" y2="671.5" stroke="#c08c60" stroke-width="0.8" opacity="0.75"/>
<line x1="500.3" y1="654.5" x2="499.7" y2="665.1" stroke="#c08c60" stroke-width="0.8" opacity="0.75"/>
<line x1="489.7" y1="649.2" x2="489.2" y2="659.3" stroke="#c08c60" stroke-width="0.8" opacity="0.75"/>
<line x1="479.9" y1="644.3" x2="479.5" y2="654.1" stroke="#c08c60" stroke-width="0.8" opacity="0.75"/>
<line x1="471.0" y1="639.9" x2="470.7" y2="649.2" stroke="#c08c60" stroke-width="0.8" opacity="0.75"/>
<line x1="605.8" y1="723.1" x2="604.3" y2="738.0" stroke="#c08c60" stroke-width="0.8" opacity="0.75"/>
<line x1="583.8" y1="711.0" x2="582.4" y2="725.0" stroke="#c08c60" stroke-width="0.8" opacity="0.75"/>
<line x1="564.4" y1="700.5" x2="563.3" y2="713.7" stroke="#c08c60" stroke-width="0.8" opacity="0.75"/>
<line x1="547.3" y1="691.1" x2="546.3" y2="703.6" stroke="#c08c60" stroke-width="0.8" opacity="0.75"/>
<line x1="532.0" y1="682.8" x2="531.2" y2="694.6" stroke="#c08c60" stroke-width="0.8" opacity="0.75"/>
<line x1="518.4" y1="675.3" x2="517.6" y2="686.6" stroke="#c08c60" stroke-width="0.8" opacity="0.75"/>
<line x1="506.0" y1="668.6" x2="505.4" y2="679.3" stroke="#c08c60" stroke-width="0.8" opacity="0.75"/>
<line x1="494.9" y1="662.5" x2="494.3" y2="672.8" stroke="#c08c60" stroke-width="0.8" opacity="0.75"/>
<line x1="484.7" y1="656.9" x2="484.2" y2="666.8" stroke="#c08c60" stroke-width="0.8" opacity="0.75"/>
<line x1="475.4" y1="651.8" x2="475.0" y2="661.3" stroke="#c08c60" stroke-width="0.8" opacity="0.75"/>
<line x1="466.9" y1="647.2" x2="466.5" y2="656.3" stroke="#c08c60" stroke-width="0.8" opacity="0.75"/>
<line x1="594.4" y1="732.2" x2="593.0" y2="746.4" stroke="#c08c60" stroke-width="0.8" opacity="0.75"/>
<line x1="573.8" y1="719.9" x2="572.6" y2="733.4" stroke="#c08c60" stroke-width="0.8" opacity="0.75"/>
<line x1="555.6" y1="709.1" x2="554.6" y2="721.8" stroke="#c08c60" stroke-width="0.8" opacity="0.75"/>
<line x1="539.4" y1="699.5" x2="538.6" y2="711.6" stroke="#c08c60" stroke-width="0.8" opacity="0.75"/>
<line x1="525.0" y1="691.0" x2="524.2" y2="702.5" stroke="#c08c60" stroke-width="0.8" opacity="0.75"/>
<line x1="512.0" y1="683.3" x2="511.4" y2="694.2" stroke="#c08c60" stroke-width="0.8" opacity="0.75"/>
<line x1="500.3" y1="676.3" x2="499.7" y2="686.8" stroke="#c08c60" stroke-width="0.8" opacity="0.75"/>
<line x1="489.7" y1="670.0" x2="489.2" y2="680.0" stroke="#c08c60" stroke-width="0.8" opacity="0.75"/>
<line x1="479.9" y1="664.2" x2="479.5" y2="673.8" stroke="#c08c60" stroke-width="0.8" opacity="0.75"/>
<line x1="471.0" y1="658.9" x2="470.7" y2="668.2" stroke="#c08c60" stroke-width="0.8" opacity="0.75"/>
<line x1="460.0" y1="412.3" x2="602.0" y2="318.9" stroke="#75604a" stroke-width="2"/>
<line x1="460.0" y1="411.6" x2="602.0" y2="318.2" stroke="#2e1e14" stroke-width="0.9" stroke-dasharray="6 1.5" opacity="0.85"/>
<line x1="460.0" y1="422.5" x2="602.0" y2="336.7" stroke="#75604a" stroke-width="2"/>
<line x1="460.0" y1="421.8" x2="602.0" y2="336.0" stroke="#2e1e14" stroke-width="0.9" stroke-dasharray="6 1.5" opacity="0.85"/>
<line x1="460.0" y1="432.6" x2="602.0" y2="354.4" stroke="#75604a" stroke-width="2"/>
<line x1="460.0" y1="431.9" x2="602.0" y2="353.7" stroke="#2e1e14" stroke-width="0.9" stroke-dasharray="6 1.5" opacity="0.85"/>
<line x1="460.0" y1="442.8" x2="602.0" y2="372.0" stroke="#75604a" stroke-width="2"/>
<line x1="460.0" y1="442.1" x2="602.0" y2="371.3" stroke="#2e1e14" stroke-width="0.9" stroke-dasharray="6 1.5" opacity="0.85"/>
<line x1="460.0" y1="452.8" x2="602.0" y2="389.5" stroke="#75604a" stroke-width="2"/>
<line x1="460.0" y1="452.1" x2="602.0" y2="388.8" stroke="#2e1e14" stroke-width="0.9" stroke-dasharray="6 1.5" opacity="0.85"/>
<line x1="460.0" y1="462.8" x2="602.0" y2="406.9" stroke="#75604a" stroke-width="2"/>
<line x1="460.0" y1="462.1" x2="602.0" y2="406.2" stroke="#2e1e14" stroke-width="0.9" stroke-dasharray="6 1.5" opacity="0.85"/>
<line x1="460.0" y1="472.8" x2="602.0" y2="424.2" stroke="#75604a" stroke-width="2"/>
<line x1="460.0" y1="472.1" x2="602.0" y2="423.5" stroke="#2e1e14" stroke-width="0.9" stroke-dasharray="6 1.5" opacity="0.85"/>
<line x1="460.0" y1="482.7" x2="602.0" y2="441.4" stroke="#75604a" stroke-width="2"/>
<line x1="460.0" y1="482.0" x2="602.0" y2="440.7" stroke="#2e1e14" stroke-width="0.9" stroke-dasharray="6 1.5" opacity="0.85"/>
<line x1="460.0" y1="492.6" x2="602.0" y2="458.6" stroke="#75604a" stroke-width="2"/>
<line x1="460.0" y1="491.9" x2="602.0" y2="457.9" stroke="#2e1e14" stroke-width="0.9" stroke-dasharray="6 1.5" opacity="0.85"/>
<line x1="460.0" y1="502.4" x2="602.0" y2="475.7" stroke="#75604a" stroke-width="2"/>
<line x1="460.0" y1="501.7" x2="602.0" y2="475.0" stroke="#2e1e14" stroke-width="0.9" stroke-dasharray="6 1.5" opacity="0.85"/>
<line x1="460.0" y1="512.1" x2="602.0" y2="492.6" stroke="#75604a" stroke-width="2"/>
<line x1="460.0" y1="511.4" x2="602.0" y2="491.9" stroke="#2e1e14" stroke-width="0.9" stroke-dasharray="6 1.5" opacity="0.85"/>
<line x1="460.0" y1="521.8" x2="602.0" y2="509.5" stroke="#75604a" stroke-width="2"/>
<line x1="460.0" y1="521.1" x2="602.0" y2="508.8" stroke="#2e1e14" stroke-width="0.9" stroke-dasharray="6 1.5" opacity="0.85"/>
<line x1="460.0" y1="531.5" x2="602.0" y2="526.3" stroke="#75604a" stroke-width="2"/>
<line x1="460.0" y1="530.8" x2="602.0" y2="525.6" stroke="#2e1e14" stroke-width="0.9" stroke-dasharray="6 1.5" opacity="0.85"/>
<line x1="460.0" y1="541.1" x2="602.0" y2="543.0" stroke="#75604a" stroke-width="2"/>
<line x1="460.0" y1="540.4" x2="602.0" y2="542.3" stroke="#2e1e14" stroke-width="0.9" stroke-dasharray="6 1.5" opacity="0.85"/>
<line x1="460.0" y1="550.7" x2="602.0" y2="559.7" stroke="#75604a" stroke-width="2"/>
<line x1="460.0" y1="550.0" x2="602.0" y2="559.0" stroke="#2e1e14" stroke-width="0.9" stroke-dasharray="6 1.5" opacity="0.85"/>
<line x1="460.0" y1="560.2" x2="602.0" y2="576.2" stroke="#75604a" stroke-width="2"/>
<line x1="460.0" y1="559.5" x2="602.0" y2="575.5" stroke="#2e1e14" stroke-width="0.9" stroke-dasharray="6 1.5" opacity="0.85"/>
<line x1="460.0" y1="569.6" x2="602.0" y2="592.6" stroke="#75604a" stroke-width="2"/>
<line x1="460.0" y1="568.9" x2="602.0" y2="591.9" stroke="#2e1e14" stroke-width="0.9" stroke-dasharray="6 1.5" opacity="0.85"/>
<line x1="460.0" y1="579.0" x2="602.0" y2="609.0" stroke="#75604a" stroke-width="2"/>
<line x1="460.0" y1="578.3" x2="602.0" y2="608.3" stroke="#2e1e14" stroke-width="0.9" stroke-dasharray="6 1.5" opacity="0.85"/>
<line x1="460.0" y1="588.4" x2="602.0" y2="625.3" stroke="#75604a" stroke-width="2"/>
<line x1="460.0" y1="587.7" x2="602.0" y2="624.6" stroke="#2e1e14" stroke-width="0.9" stroke-dasharray="6 1.5" opacity="0.85"/>
<line x1="460.0" y1="597.7" x2="602.0" y2="641.4" stroke="#75604a" stroke-width="2"/>
<line x1="460.0" y1="597.0" x2="602.0" y2="640.7" stroke="#2e1e14" stroke-width="0.9" stroke-dasharray="6 1.5" opacity="0.85"/>
<line x1="460.0" y1="606.9" x2="602.0" y2="657.5" stroke="#75604a" stroke-width="2"/>
<line x1="460.0" y1="606.2" x2="602.0" y2="656.8" stroke="#2e1e14" stroke-width="0.9" stroke-dasharray="6 1.5" opacity="0.85"/>
<line x1="460.0" y1="616.1" x2="602.0" y2="673.5" stroke="#75604a" stroke-width="2"/>
<line x1="460.0" y1="615.4" x2="602.0" y2="672.8" stroke="#2e1e14" stroke-width="0.9" stroke-dasharray="6 1.5" opacity="0.85"/>
<line x1="460.0" y1="625.3" x2="602.0" y2="689.4" stroke="#75604a" stroke-width="2"/>
<line x1="460.0" y1="624.6" x2="602.0" y2="688.7" stroke="#2e1e14" stroke-width="0.9" stroke-dasharray="6 1.5" opacity="0.85"/>
<line x1="460.0" y1="634.4" x2="602.0" y2="705.3" stroke="#75604a" stroke-width="2"/>
<line x1="460.0" y1="633.7" x2="602.0" y2="704.6" stroke="#2e1e14" stroke-width="0.9" stroke-dasharray="6 1.5" opacity="0.85"/>
<line x1="460.0" y1="643.4" x2="602.0" y2="721.0" stroke="#75604a" stroke-width="2"/>
<line x1="460.0" y1="642.7" x2="602.0" y2="720.3" stroke="#2e1e14" stroke-width="0.9" stroke-dasharray="6 1.5" opacity="0.85"/>
<line x1="460.0" y1="652.4" x2="602.0" y2="736.6" stroke="#75604a" stroke-width="2"/>
<line x1="460.0" y1="651.7" x2="602.0" y2="735.9" stroke="#2e1e14" stroke-width="0.9" stroke-dasharray="6 1.5" opacity="0.85"/>
<line x1="460.0" y1="661.3" x2="602.0" y2="752.2" stroke="#75604a" stroke-width="2"/>
<line x1="460.0" y1="660.6" x2="602.0" y2="751.5" stroke="#2e1e14" stroke-width="0.9" stroke-dasharray="6 1.5" opacity="0.85"/>
</g>
<polygon points="597.2,530.0 600.0,530.0 600.0,730.0 580.0,730.0" fill="#b2b2ba" />
<polygon points="597.0,612.0 600.0,612.0 600.0,730.0 587.5,730.0" fill="#d2d2da" />
<polygon points="596.0,690.0 597.0,690.0 597.0,730.0 594.3,730.0" fill="#eeeec4" />
<polygon points="240.3,194.0 247.3,194.0 254.0,280.0 256.4,324.0 263.4,454.0 270.3,580.0 278.5,730.0 271.6,730.0" fill="#b3b38d" />
<polygon points="191.6,194.0 240.5,194.0 271.6,730.0 232.9,730.0" fill="#6e3a28" />
<polyline points="408.4,584.0 407.3,560.0 408.0,536.0" fill="none" stroke="#2e5a1e" stroke-width="1.4" />
<polyline points="407.5,566.0 404.2,556.0" fill="none" stroke="#4a8a2a" stroke-width="1" />
<polyline points="407.6,575.0 411.5,566.5" fill="none" stroke="#3a7a24" stroke-width="1" />
<polygon points="406.6,538.0 408.6,536.0 410.3,545.0 409.2,555.0 407.2,551.0" fill="#2a5a1e" />
<polyline points="407.2,540.0 405.8,548.0 407.0,557.0" fill="none" stroke="#1c4014" stroke-width="1" />
<polygon points="404.3,582.5 412.3,582.5 411.2,606.5 405.8,606.5" fill="#5a2a12" />
<polyline points="404.3,583.0 412.3,583.0" fill="none" stroke="#7a3e1e" stroke-width="1.4" />
<polygon points="476.0,676.0 534.7,694.0 532.0,730.0 476.0,730.0" fill="#080a08" />
<polygon points="479.0,683.0 524.0,712.0 523.5,726.0 478.5,694.0" fill="#c4623a" />
<polyline points="479.0,688.5 524.0,718.5" fill="none" stroke="#8a5a3a" stroke-width="1.5" />
<polygon points="478.0,716.0 492.0,730.0 478.0,730.0" fill="#c4623a" />
<polygon points="470.6,550.5 473.5,548.8 520.0,554.0 523.0,557.0 514.8,696.0 511.5,699.0 482.0,681.5 468.2,664.0" fill="url(#tva)" />
<polygon points="477.0,562.0 516.0,566.5 510.0,686.0 483.5,671.0" fill="url(#tsa)" />
<polygon points="468.2,664.0 470.6,550.5 473.5,548.8 471.5,662.0 482.0,681.5" fill="#505050" />
<polyline points="486.0,650.0 500.0,606.0 511.0,646.0" fill="none" stroke="#464646" stroke-width="7" opacity="0.3" stroke-linejoin="round"/>
<polygon points="399.0,606.3 483.0,643.8 472.0,651.6 397.4,611.7" fill="#a9a797" />
<polygon points="397.4,613.0 472.0,653.0 470.0,661.0 397.4,619.0" fill="#e08a60" />
<polygon points="399.3,619.0 470.0,661.5 475.5,663.0 476.0,730.0 399.3,730.0" fill="#c8663c" />
<polygon points="399.3,619.0 470.0,661.5 475.5,663.0 476.0,730.0 399.3,730.0" fill="#000" filter="url(#ba)"/>
<g clip-path="url(#lwa)">
<line x1="394.0" y1="613.7" x2="394.0" y2="626.6" stroke="#c08c60" stroke-width="0.8" opacity="0.75"/>
<line x1="402.9" y1="619.1" x2="402.9" y2="632.8" stroke="#c08c60" stroke-width="0.8" opacity="0.75"/>
<line x1="412.5" y1="624.7" x2="412.3" y2="639.5" stroke="#c08c60" stroke-width="0.8" opacity="0.75"/>
<line x1="422.6" y1="630.8" x2="422.4" y2="646.5" stroke="#c08c60" stroke-width="0.8" opacity="0.75"/>
<line x1="433.4" y1="637.2" x2="433.0" y2="654.0" stroke="#c08c60" stroke-width="0.8" opacity="0.75"/>
<line x1="444.7" y1="644.0" x2="444.3" y2="661.8" stroke="#c08c60" stroke-width="0.8" opacity="0.75"/>
<line x1="456.7" y1="651.1" x2="456.1" y2="670.1" stroke="#c08c60" stroke-width="0.8" opacity="0.75"/>
<line x1="469.3" y1="658.7" x2="468.5" y2="678.8" stroke="#c08c60" stroke-width="0.8" opacity="0.75"/>
<line x1="482.5" y1="666.5" x2="481.5" y2="687.9" stroke="#c08c60" stroke-width="0.8" opacity="0.75"/>
<line x1="496.3" y1="674.8" x2="495.1" y2="697.4" stroke="#c08c60" stroke-width="0.8" opacity="0.75"/>
<line x1="510.7" y1="683.4" x2="509.3" y2="707.3" stroke="#c08c60" stroke-width="0.8" opacity="0.75"/>
<line x1="525.7" y1="692.4" x2="524.1" y2="717.6" stroke="#c08c60" stroke-width="0.8" opacity="0.75"/>
<line x1="541.4" y1="701.7" x2="539.4" y2="728.4" stroke="#c08c60" stroke-width="0.8" opacity="0.75"/>
<line x1="557.7" y1="711.4" x2="555.3" y2="739.5" stroke="#c08c60" stroke-width="0.8" opacity="0.75"/>
<line x1="398.4" y1="629.7" x2="398.3" y2="643.1" stroke="#c08c60" stroke-width="0.8" opacity="0.75"/>
<line x1="407.6" y1="636.2" x2="407.5" y2="650.4" stroke="#c08c60" stroke-width="0.8" opacity="0.75"/>
<line x1="417.5" y1="643.1" x2="417.3" y2="658.3" stroke="#c08c60" stroke-width="0.8" opacity="0.75"/>
<line x1="427.9" y1="650.4" x2="427.6" y2="666.6" stroke="#c08c60" stroke-width="0.8" opacity="0.75"/>
<line x1="439.0" y1="658.1" x2="438.6" y2="675.3" stroke="#c08c60" stroke-width="0.8" opacity="0.75"/>
<line x1="450.6" y1="666.3" x2="450.1" y2="684.6" stroke="#c08c60" stroke-width="0.8" opacity="0.75"/>
<line x1="462.9" y1="674.9" x2="462.2" y2="694.3" stroke="#c08c60" stroke-width="0.8" opacity="0.75"/>
<line x1="475.8" y1="683.9" x2="474.9" y2="704.5" stroke="#c08c60" stroke-width="0.8" opacity="0.75"/>
<line x1="489.3" y1="693.3" x2="488.2" y2="715.2" stroke="#c08c60" stroke-width="0.8" opacity="0.75"/>
<line x1="503.4" y1="703.2" x2="502.1" y2="726.3" stroke="#c08c60" stroke-width="0.8" opacity="0.75"/>
<line x1="518.1" y1="713.5" x2="516.6" y2="737.9" stroke="#c08c60" stroke-width="0.8" opacity="0.75"/>
<line x1="533.5" y1="724.2" x2="531.7" y2="750.0" stroke="#c08c60" stroke-width="0.8" opacity="0.75"/>
<line x1="549.5" y1="735.4" x2="547.3" y2="762.6" stroke="#c08c60" stroke-width="0.8" opacity="0.75"/>
<line x1="566.0" y1="747.0" x2="563.5" y2="775.6" stroke="#c08c60" stroke-width="0.8" opacity="0.75"/>
<line x1="394.0" y1="639.6" x2="394.0" y2="652.5" stroke="#c08c60" stroke-width="0.8" opacity="0.75"/>
<line x1="402.9" y1="646.8" x2="402.9" y2="660.5" stroke="#c08c60" stroke-width="0.8" opacity="0.75"/>
<line x1="412.5" y1="654.4" x2="412.3" y2="669.1" stroke="#c08c60" stroke-width="0.8" opacity="0.75"/>
<line x1="422.6" y1="662.6" x2="422.4" y2="678.2" stroke="#c08c60" stroke-width="0.8" opacity="0.75"/>
<line x1="433.4" y1="671.2" x2="433.0" y2="687.8" stroke="#c08c60" stroke-width="0.8" opacity="0.75"/>
<line x1="444.7" y1="680.3" x2="444.3" y2="698.0" stroke="#c08c60" stroke-width="0.8" opacity="0.75"/>
<line x1="456.7" y1="689.9" x2="456.1" y2="708.7" stroke="#c08c60" stroke-width="0.8" opacity="0.75"/>
<line x1="469.3" y1="700.0" x2="468.5" y2="720.0" stroke="#c08c60" stroke-width="0.8" opacity="0.75"/>
<line x1="482.5" y1="710.6" x2="481.5" y2="731.7" stroke="#c08c60" stroke-width="0.8" opacity="0.75"/>
<line x1="496.3" y1="721.6" x2="495.1" y2="744.0" stroke="#c08c60" stroke-width="0.8" opacity="0.75"/>
<line x1="510.7" y1="733.2" x2="509.3" y2="756.9" stroke="#c08c60" stroke-width="0.8" opacity="0.75"/>
<line x1="525.7" y1="745.3" x2="524.0" y2="770.2" stroke="#c08c60" stroke-width="0.8" opacity="0.75"/>
<line x1="541.4" y1="757.8" x2="539.4" y2="784.1" stroke="#c08c60" stroke-width="0.8" opacity="0.75"/>
<line x1="557.7" y1="770.9" x2="555.3" y2="798.5" stroke="#c08c60" stroke-width="0.8" opacity="0.75"/>
<line x1="398.4" y1="656.5" x2="398.3" y2="669.8" stroke="#c08c60" stroke-width="0.8" opacity="0.75"/>
<line x1="407.6" y1="664.9" x2="407.5" y2="679.1" stroke="#c08c60" stroke-width="0.8" opacity="0.75"/>
<line x1="417.5" y1="673.8" x2="417.3" y2="688.9" stroke="#c08c60" stroke-width="0.8" opacity="0.75"/>
<line x1="427.9" y1="683.2" x2="427.6" y2="699.3" stroke="#c08c60" stroke-width="0.8" opacity="0.75"/>
<line x1="439.0" y1="693.2" x2="438.6" y2="710.4" stroke="#c08c60" stroke-width="0.8" opacity="0.75"/>
<line x1="450.6" y1="703.8" x2="450.1" y2="722.0" stroke="#c08c60" stroke-width="0.8" opacity="0.75"/>
<line x1="462.9" y1="714.9" x2="462.2" y2="734.2" stroke="#c08c60" stroke-width="0.8" opacity="0.75"/>
<line x1="475.8" y1="726.6" x2="474.9" y2="747.0" stroke="#c08c60" stroke-width="0.8" opacity="0.75"/>
<line x1="489.3" y1="738.8" x2="488.2" y2="760.4" stroke="#c08c60" stroke-width="0.8" opacity="0.75"/>
<line x1="503.4" y1="751.5" x2="502.1" y2="774.4" stroke="#c08c60" stroke-width="0.8" opacity="0.75"/>
<line x1="518.2" y1="764.9" x2="516.6" y2="789.0" stroke="#c08c60" stroke-width="0.8" opacity="0.75"/>
<line x1="533.5" y1="778.8" x2="531.6" y2="804.1" stroke="#c08c60" stroke-width="0.8" opacity="0.75"/>
<line x1="549.5" y1="793.2" x2="547.3" y2="819.9" stroke="#c08c60" stroke-width="0.8" opacity="0.75"/>
<line x1="566.0" y1="808.2" x2="563.5" y2="836.2" stroke="#c08c60" stroke-width="0.8" opacity="0.75"/>
<line x1="394.0" y1="665.5" x2="394.0" y2="678.4" stroke="#c08c60" stroke-width="0.8" opacity="0.75"/>
<line x1="402.9" y1="674.5" x2="402.9" y2="688.2" stroke="#c08c60" stroke-width="0.8" opacity="0.75"/>
<line x1="412.5" y1="684.1" x2="412.3" y2="698.7" stroke="#c08c60" stroke-width="0.8" opacity="0.75"/>
<line x1="422.6" y1="694.3" x2="422.4" y2="709.9" stroke="#c08c60" stroke-width="0.8" opacity="0.75"/>
<line x1="433.4" y1="705.1" x2="433.0" y2="721.7" stroke="#c08c60" stroke-width="0.8" opacity="0.75"/>
<line x1="444.7" y1="716.6" x2="444.3" y2="734.2" stroke="#c08c60" stroke-width="0.8" opacity="0.75"/>
<line x1="456.7" y1="728.6" x2="456.1" y2="747.3" stroke="#c08c60" stroke-width="0.8" opacity="0.75"/>
<line x1="469.3" y1="741.3" x2="468.5" y2="761.1" stroke="#c08c60" stroke-width="0.8" opacity="0.75"/>
<line x1="482.5" y1="754.6" x2="481.5" y2="775.6" stroke="#c08c60" stroke-width="0.8" opacity="0.75"/>
<line x1="496.3" y1="768.5" x2="495.1" y2="790.6" stroke="#c08c60" stroke-width="0.8" opacity="0.75"/>
<line x1="510.7" y1="783.1" x2="509.3" y2="806.4" stroke="#c08c60" stroke-width="0.8" opacity="0.75"/>
<line x1="525.8" y1="798.2" x2="524.0" y2="822.8" stroke="#c08c60" stroke-width="0.8" opacity="0.75"/>
<line x1="541.4" y1="814.0" x2="539.4" y2="839.8" stroke="#c08c60" stroke-width="0.8" opacity="0.75"/>
<line x1="557.7" y1="830.4" x2="555.3" y2="857.5" stroke="#c08c60" stroke-width="0.8" opacity="0.75"/>
<line x1="398.4" y1="683.3" x2="398.3" y2="696.6" stroke="#c08c60" stroke-width="0.8" opacity="0.75"/>
<line x1="407.6" y1="693.5" x2="407.5" y2="707.7" stroke="#c08c60" stroke-width="0.8" opacity="0.75"/>
<line x1="417.5" y1="704.5" x2="417.3" y2="719.6" stroke="#c08c60" stroke-width="0.8" opacity="0.75"/>
<line x1="427.9" y1="716.1" x2="427.6" y2="732.1" stroke="#c08c60" stroke-width="0.8" opacity="0.75"/>
<line x1="439.0" y1="728.3" x2="438.6" y2="745.4" stroke="#c08c60" stroke-width="0.8" opacity="0.75"/>
<line x1="450.6" y1="741.3" x2="450.1" y2="759.4" stroke="#c08c60" stroke-width="0.8" opacity="0.75"/>
<line x1="462.9" y1="754.9" x2="462.2" y2="774.1" stroke="#c08c60" stroke-width="0.8" opacity="0.75"/>
<line x1="475.8" y1="769.2" x2="474.9" y2="789.5" stroke="#c08c60" stroke-width="0.8" opacity="0.75"/>
<line x1="489.3" y1="784.2" x2="488.2" y2="805.6" stroke="#c08c60" stroke-width="0.8" opacity="0.75"/>
<line x1="503.4" y1="799.9" x2="502.1" y2="822.5" stroke="#c08c60" stroke-width="0.8" opacity="0.75"/>
<line x1="518.2" y1="816.2" x2="516.6" y2="840.0" stroke="#c08c60" stroke-width="0.8" opacity="0.75"/>
<line x1="533.5" y1="833.3" x2="531.6" y2="858.3" stroke="#c08c60" stroke-width="0.8" opacity="0.75"/>
<line x1="549.5" y1="851.0" x2="547.3" y2="877.2" stroke="#c08c60" stroke-width="0.8" opacity="0.75"/>
<line x1="566.1" y1="869.4" x2="563.5" y2="896.9" stroke="#c08c60" stroke-width="0.8" opacity="0.75"/>
<line x1="394.0" y1="691.3" x2="394.0" y2="704.2" stroke="#c08c60" stroke-width="0.8" opacity="0.75"/>
<line x1="402.9" y1="702.2" x2="402.9" y2="715.9" stroke="#c08c60" stroke-width="0.8" opacity="0.75"/>
<line x1="412.5" y1="713.7" x2="412.3" y2="728.4" stroke="#c08c60" stroke-width="0.8" opacity="0.75"/>
<line x1="422.6" y1="726.0" x2="422.4" y2="741.6" stroke="#c08c60" stroke-width="0.8" opacity="0.75"/>
<line x1="433.4" y1="739.1" x2="433.0" y2="755.6" stroke="#c08c60" stroke-width="0.8" opacity="0.75"/>
<line x1="444.7" y1="752.9" x2="444.3" y2="770.4" stroke="#c08c60" stroke-width="0.8" opacity="0.75"/>
<line x1="456.7" y1="767.4" x2="456.1" y2="785.9" stroke="#c08c60" stroke-width="0.8" opacity="0.75"/>
<line x1="469.3" y1="782.7" x2="468.5" y2="802.3" stroke="#c08c60" stroke-width="0.8" opacity="0.75"/>
<line x1="482.5" y1="798.7" x2="481.5" y2="819.4" stroke="#c08c60" stroke-width="0.8" opacity="0.75"/>
<line x1="496.3" y1="815.4" x2="495.1" y2="837.3" stroke="#c08c60" stroke-width="0.8" opacity="0.75"/>
<line x1="510.7" y1="832.9" x2="509.3" y2="855.9" stroke="#c08c60" stroke-width="0.8" opacity="0.75"/>
<line x1="525.8" y1="851.2" x2="524.0" y2="875.3" stroke="#c08c60" stroke-width="0.8" opacity="0.75"/>
<line x1="541.4" y1="870.1" x2="539.4" y2="895.5" stroke="#c08c60" stroke-width="0.8" opacity="0.75"/>
<line x1="557.7" y1="889.9" x2="555.3" y2="916.5" stroke="#c08c60" stroke-width="0.8" opacity="0.75"/>
<line x1="398.4" y1="710.1" x2="398.3" y2="723.4" stroke="#c08c60" stroke-width="0.8" opacity="0.75"/>
<line x1="407.6" y1="722.2" x2="407.5" y2="736.4" stroke="#c08c60" stroke-width="0.8" opacity="0.75"/>
<line x1="417.5" y1="735.2" x2="417.3" y2="750.2" stroke="#c08c60" stroke-width="0.8" opacity="0.75"/>
<line x1="427.9" y1="748.9" x2="427.6" y2="764.9" stroke="#c08c60" stroke-width="0.8" opacity="0.75"/>
<line x1="439.0" y1="763.4" x2="438.6" y2="780.4" stroke="#c08c60" stroke-width="0.8" opacity="0.75"/>
<line x1="450.7" y1="778.8" x2="450.1" y2="796.8" stroke="#c08c60" stroke-width="0.8" opacity="0.75"/>
<line x1="462.9" y1="794.9" x2="462.2" y2="813.9" stroke="#c08c60" stroke-width="0.8" opacity="0.75"/>
<line x1="475.8" y1="811.9" x2="474.9" y2="832.0" stroke="#c08c60" stroke-width="0.8" opacity="0.75"/>
<line x1="489.3" y1="829.7" x2="488.2" y2="850.8" stroke="#c08c60" stroke-width="0.8" opacity="0.75"/>
<line x1="503.4" y1="848.2" x2="502.1" y2="870.5" stroke="#c08c60" stroke-width="0.8" opacity="0.75"/>
<line x1="518.2" y1="867.6" x2="516.6" y2="891.0" stroke="#c08c60" stroke-width="0.8" opacity="0.75"/>
<line x1="533.5" y1="887.8" x2="531.6" y2="912.4" stroke="#c08c60" stroke-width="0.8" opacity="0.75"/>
<line x1="549.5" y1="908.8" x2="547.3" y2="934.5" stroke="#c08c60" stroke-width="0.8" opacity="0.75"/>
<line x1="566.1" y1="930.7" x2="563.5" y2="957.5" stroke="#c08c60" stroke-width="0.8" opacity="0.75"/>
<line x1="394.0" y1="717.2" x2="394.0" y2="730.1" stroke="#c08c60" stroke-width="0.8" opacity="0.75"/>
<line x1="402.9" y1="729.9" x2="402.9" y2="743.6" stroke="#c08c60" stroke-width="0.8" opacity="0.75"/>
<line x1="412.5" y1="743.4" x2="412.3" y2="758.0" stroke="#c08c60" stroke-width="0.8" opacity="0.75"/>
<line x1="422.6" y1="757.8" x2="422.4" y2="773.3" stroke="#c08c60" stroke-width="0.8" opacity="0.75"/>
<line x1="433.4" y1="773.1" x2="433.0" y2="789.5" stroke="#c08c60" stroke-width="0.8" opacity="0.75"/>
<line x1="444.7" y1="789.2" x2="444.3" y2="806.6" stroke="#c08c60" stroke-width="0.8" opacity="0.75"/>
<line x1="456.7" y1="806.1" x2="456.1" y2="824.6" stroke="#c08c60" stroke-width="0.8" opacity="0.75"/>
<line x1="469.3" y1="824.0" x2="468.5" y2="843.4" stroke="#c08c60" stroke-width="0.8" opacity="0.75"/>
<line x1="482.5" y1="842.7" x2="481.5" y2="863.2" stroke="#c08c60" stroke-width="0.8" opacity="0.75"/>
<line x1="496.3" y1="862.3" x2="495.1" y2="883.9" stroke="#c08c60" stroke-width="0.8" opacity="0.75"/>
<line x1="510.7" y1="882.8" x2="509.3" y2="905.4" stroke="#c08c60" stroke-width="0.8" opacity="0.75"/>
<line x1="525.8" y1="904.1" x2="524.0" y2="927.9" stroke="#c08c60" stroke-width="0.8" opacity="0.75"/>
<line x1="541.4" y1="926.3" x2="539.4" y2="951.2" stroke="#c08c60" stroke-width="0.8" opacity="0.75"/>
<line x1="557.7" y1="949.4" x2="555.3" y2="975.4" stroke="#c08c60" stroke-width="0.8" opacity="0.75"/>
<line x1="398.4" y1="736.8" x2="398.3" y2="750.1" stroke="#c08c60" stroke-width="0.8" opacity="0.75"/>
<line x1="407.6" y1="750.9" x2="407.5" y2="765.0" stroke="#c08c60" stroke-width="0.8" opacity="0.75"/>
<line x1="417.5" y1="765.8" x2="417.3" y2="780.9" stroke="#c08c60" stroke-width="0.8" opacity="0.75"/>
<line x1="427.9" y1="781.7" x2="427.6" y2="797.7" stroke="#c08c60" stroke-width="0.8" opacity="0.75"/>
<line x1="439.0" y1="798.6" x2="438.6" y2="815.4" stroke="#c08c60" stroke-width="0.8" opacity="0.75"/>
<line x1="450.7" y1="816.3" x2="450.1" y2="834.1" stroke="#c08c60" stroke-width="0.8" opacity="0.75"/>
<line x1="462.9" y1="835.0" x2="462.2" y2="853.8" stroke="#c08c60" stroke-width="0.8" opacity="0.75"/>
<line x1="475.8" y1="854.6" x2="474.9" y2="874.5" stroke="#c08c60" stroke-width="0.8" opacity="0.75"/>
<line x1="489.3" y1="875.1" x2="488.2" y2="896.0" stroke="#c08c60" stroke-width="0.8" opacity="0.75"/>
<line x1="503.4" y1="896.6" x2="502.1" y2="918.6" stroke="#c08c60" stroke-width="0.8" opacity="0.75"/>
<line x1="518.2" y1="919.0" x2="516.6" y2="942.1" stroke="#c08c60" stroke-width="0.8" opacity="0.75"/>
<line x1="533.5" y1="942.4" x2="531.6" y2="966.5" stroke="#c08c60" stroke-width="0.8" opacity="0.75"/>
<line x1="549.5" y1="966.6" x2="547.2" y2="991.9" stroke="#c08c60" stroke-width="0.8" opacity="0.75"/>
<line x1="566.1" y1="991.9" x2="563.4" y2="1018.2" stroke="#c08c60" stroke-width="0.8" opacity="0.75"/>
<line x1="394.0" y1="743.1" x2="394.0" y2="756.0" stroke="#c08c60" stroke-width="0.8" opacity="0.75"/>
<line x1="402.9" y1="757.6" x2="402.9" y2="771.3" stroke="#c08c60" stroke-width="0.8" opacity="0.75"/>
<line x1="412.5" y1="773.1" x2="412.3" y2="787.6" stroke="#c08c60" stroke-width="0.8" opacity="0.75"/>
<line x1="422.6" y1="789.6" x2="422.4" y2="805.0" stroke="#c08c60" stroke-width="0.8" opacity="0.75"/>
<line x1="433.4" y1="807.0" x2="433.0" y2="823.4" stroke="#c08c60" stroke-width="0.8" opacity="0.75"/>
<line x1="444.7" y1="825.5" x2="444.3" y2="842.8" stroke="#c08c60" stroke-width="0.8" opacity="0.75"/>
<line x1="456.7" y1="844.9" x2="456.1" y2="863.2" stroke="#c08c60" stroke-width="0.8" opacity="0.75"/>
<line x1="469.3" y1="865.3" x2="468.5" y2="884.6" stroke="#c08c60" stroke-width="0.8" opacity="0.75"/>
<line x1="482.5" y1="886.8" x2="481.5" y2="907.0" stroke="#c08c60" stroke-width="0.8" opacity="0.75"/>
<line x1="496.3" y1="909.2" x2="495.1" y2="930.5" stroke="#c08c60" stroke-width="0.8" opacity="0.75"/>
<line x1="510.7" y1="932.6" x2="509.3" y2="955.0" stroke="#c08c60" stroke-width="0.8" opacity="0.75"/>
<line x1="525.8" y1="957.0" x2="524.0" y2="980.4" stroke="#c08c60" stroke-width="0.8" opacity="0.75"/>
<line x1="541.4" y1="982.5" x2="539.3" y2="1006.9" stroke="#c08c60" stroke-width="0.8" opacity="0.75"/>
<line x1="557.7" y1="1008.9" x2="555.3" y2="1034.4" stroke="#c08c60" stroke-width="0.8" opacity="0.75"/>
<line x1="390.0" y1="611.3" x2="482.0" y2="666.2" stroke="#6c5642" stroke-width="1.7"/>
<line x1="390.0" y1="623.9" x2="482.0" y2="688.2" stroke="#6c5642" stroke-width="1.7"/>
<line x1="390.0" y1="636.4" x2="482.0" y2="710.2" stroke="#6c5642" stroke-width="1.7"/>
<line x1="390.0" y1="648.9" x2="482.0" y2="732.2" stroke="#6c5642" stroke-width="1.7"/>
<line x1="390.0" y1="661.4" x2="482.0" y2="754.1" stroke="#6c5642" stroke-width="1.7"/>
<line x1="390.0" y1="674.0" x2="482.0" y2="776.1" stroke="#6c5642" stroke-width="1.7"/>
<line x1="390.0" y1="686.5" x2="482.0" y2="798.1" stroke="#6c5642" stroke-width="1.7"/>
<line x1="390.0" y1="699.0" x2="482.0" y2="820.0" stroke="#6c5642" stroke-width="1.7"/>
<line x1="390.0" y1="711.5" x2="482.0" y2="842.0" stroke="#6c5642" stroke-width="1.7"/>
<line x1="390.0" y1="724.1" x2="482.0" y2="864.0" stroke="#6c5642" stroke-width="1.7"/>
<line x1="390.0" y1="736.6" x2="482.0" y2="885.9" stroke="#6c5642" stroke-width="1.7"/>
<line x1="390.0" y1="749.1" x2="482.0" y2="907.9" stroke="#6c5642" stroke-width="1.7"/>
</g>
<polygon points="475.3,664.0 479.0,661.0 478.6,730.0 476.0,730.0" fill="#cf7044" />
<polyline points="475.3,684.0 479.0,681.5" fill="none" stroke="#8a7860" stroke-width="2" />
<polyline points="475.5,705.5 479.0,703.0" fill="none" stroke="#8a7860" stroke-width="2" />
<polyline points="475.7,725.0 479.0,722.5" fill="none" stroke="#8a7860" stroke-width="2" />
<polyline points="398.5,606.6 483.2,644.0" fill="none" stroke="#74460a" stroke-width="2.2" />
<polyline points="397.4,611.8 471.5,651.6" fill="none" stroke="#8a540e" stroke-width="3.8" />
<polyline points="397.4,617.8 469.0,659.6" fill="none" stroke="#8a540e" stroke-width="4.6" />
<polyline points="398.2,606.5 398.2,626.0" fill="none" stroke="#8a540e" stroke-width="2.2" />
<polygon points="468.7,649.5 475.3,650.0 475.3,683.5 469.2,680.0" fill="#8c560e" />
<polygon points="475.3,650.0 483.4,644.0 483.2,672.0 480.0,672.0 480.2,653.0 475.3,657.0" fill="#74460a" />
<polygon points="468.7,649.5 478.0,643.5 483.4,644.0 475.3,650.0" fill="#9a6212" />
<polygon points="475.5,657.5 480.0,654.0 480.0,662.0 475.5,665.0" fill="#e8a07a" />
<polygon points="335.8,718.4 368.1,698.0 388.0,730.0 335.8,730.0" fill="#8c5006" />
<polygon points="362.0,702.0 368.1,698.0 388.0,730.0 380.0,730.0" fill="#7e4604" />
<polygon points="336.9,663.6 345.0,661.0 353.9,655.4 355.5,704.7 353.0,706.5 352.3,674.0 340.4,678.0 341.0,714.5 338.5,716.0" fill="#451a0a" />
<polyline points="343.2,676.0 344.1,710.5" fill="none" stroke="#451a0a" stroke-width="1.5" />
<polyline points="346.6,676.0 347.5,710.5" fill="none" stroke="#451a0a" stroke-width="1.5" />
<polyline points="350.0,676.0 350.9,710.5" fill="none" stroke="#451a0a" stroke-width="1.5" />
<polygon points="324.3,693.7 328.0,690.0 331.5,700.0 335.8,710.0 336.5,730.0 326.5,730.0" fill="#54220e" />
<polygon points="335.8,710.0 335.8,723.0 341.0,718.0 341.0,730.0 336.5,730.0" fill="#3c1608" />
<polyline points="324.5,694.0 328.0,690.5" fill="none" stroke="#7a3a1c" stroke-width="1.2" />
<polygon points="378.0,664.0 380.2,661.4 384.0,667.5 393.9,673.0 393.9,730.0 380.5,730.0" fill="#451a0a" />
<polyline points="384.5,692.0 384.8,730.0" fill="none" stroke="#6a3020" stroke-width="0.9" />
<polyline points="387.5,692.0 387.8,730.0" fill="none" stroke="#6a3020" stroke-width="0.9" />
<polyline points="390.5,692.0 390.8,730.0" fill="none" stroke="#6a3020" stroke-width="0.9" />
<polygon points="398.8,684.0 400.0,682.2 403.0,683.0 417.5,699.2 417.5,730.0 398.8,730.0" fill="#451a0a" />
<polyline points="403.0,707.0 403.0,730.0" fill="none" stroke="#a4583a" stroke-width="0.9" />
<polyline points="406.5,707.0 406.5,730.0" fill="none" stroke="#a4583a" stroke-width="0.9" />
<polyline points="410.0,707.0 410.0,730.0" fill="none" stroke="#a4583a" stroke-width="0.9" />
<polyline points="413.5,707.0 413.5,730.0" fill="none" stroke="#a4583a" stroke-width="0.9" />
<polyline points="369.8,712.0 368.4,680.0 367.0,650.0" fill="none" stroke="#2a5a18" stroke-width="1.5" />
<polygon points="365.5,650.0 366.8,648.0 368.5,655.0 372.0,652.5 371.5,659.0 376.5,665.5 371.0,667.0 370.5,676.0 367.2,670.0 365.3,661.0" fill="#2f6a1a" />
<polyline points="366.0,652.0 367.8,668.0" fill="none" stroke="#1a3a0e" stroke-width="1.2" />
<polyline points="368.8,690.0 363.0,678.5 360.5,676.5" fill="none" stroke="#3f8428" stroke-width="1.3" />
<polyline points="369.0,694.0 373.5,685.5 376.5,683.8" fill="none" stroke="#3a7c24" stroke-width="1.3" />
<polygon points="364.3,711.0 375.8,711.0 374.4,730.0 365.6,730.0" fill="#6a3408" />
<ellipse cx="370" cy="711" rx="5.7" ry="2.8" fill="#260a04" stroke="#8e4a12" stroke-width="1.1"/></svg>
<svg class="abs" style="left:598px;top:194px" width="422" height="536" viewBox="174 194 422 536"><defs>
<filter id="nb" x="0" y="0" width="100%" height="100%" color-interpolation-filters="sRGB"><feTurbulence type="fractalNoise" baseFrequency="0.25" numOctaves="3" seed="3" result="t"/><feColorMatrix in="t" type="matrix" values="0 0 0 0 0.46  0 0 0 0 0.465  0 0 0 0 0.485  1.2 0 0 0 -0.4"/><feComposite operator="in" in2="SourceGraphic"/></filter>
<filter id="fb" x="0" y="0" width="100%" height="100%" color-interpolation-filters="sRGB"><feTurbulence type="fractalNoise" baseFrequency="0.8" numOctaves="2" seed="8" result="t"/><feColorMatrix in="t" type="matrix" values="0 0 0 0 0.5  0 0 0 0 0.5  0 0 0 0 0.32  1.3 0 0 0 -0.5"/><feComposite operator="in" in2="SourceGraphic"/></filter>
<filter id="bb" x="0" y="0" width="100%" height="100%" color-interpolation-filters="sRGB"><feTurbulence type="fractalNoise" baseFrequency="0.18 0.3" numOctaves="3" seed="5" result="t"/><feColorMatrix in="t" type="matrix" values="0 0 0 0 0.66  0 0 0 0 0.3  0 0 0 0 0.17  1.5 0 0 0 -0.5"/><feComposite operator="in" in2="SourceGraphic"/></filter>
<linearGradient id="tsb" x1="0" y1="0" x2="0.3" y2="1"><stop offset="0" stop-color="#292929"/><stop offset="0.55" stop-color="#383838"/><stop offset="1" stop-color="#414141"/></linearGradient>
<linearGradient id="tvb" x1="0" y1="0" x2="1" y2="1"><stop offset="0" stop-color="#404040"/><stop offset="0.5" stop-color="#4a4a4a"/><stop offset="1" stop-color="#3e3e3e"/></linearGradient>
<linearGradient id="cub" x1="0" y1="0" x2="1" y2="0"><stop offset="0" stop-color="#b4a994"/><stop offset="0.12" stop-color="#d6ccb9"/><stop offset="0.25" stop-color="#b0a591"/><stop offset="0.38" stop-color="#dad0bd"/><stop offset="0.5" stop-color="#aca18c"/><stop offset="0.62" stop-color="#d6ccb9"/><stop offset="0.75" stop-color="#b0a591"/><stop offset="0.88" stop-color="#d2c8b4"/><stop offset="1" stop-color="#a0957f"/></linearGradient>
<linearGradient id="drb" x1="0" y1="0" x2="1" y2="0"><stop offset="0" stop-color="#8a4a36"/><stop offset="1" stop-color="#8e4330"/></linearGradient>
<clipPath id="bwb"><polygon points="479.6,405.0 600.0,329.5 600.0,730.0 466.0,730.0"/></clipPath>
<clipPath id="lwb"><polygon points="399.3,619.0 470.0,661.5 475.5,663.0 476.0,730.0 399.3,730.0"/></clipPath>
<clipPath id="gwb"><polygon points="174.0,334.8 203.6,347.3 240.0,362.0 240.0,730.0 174.0,730.0"/></clipPath>
</defs>
<rect x="174" y="194" width="424" height="536" fill="#c6e2f7"/>
<polygon points="174.0,334.8 203.6,347.3 240.0,362.0 240.0,730.0 174.0,730.0" fill="#8d8e92" />
<g clip-path="url(#gwb)">
<rect x="174" y="330" width="62" height="400" fill="#6a6c72" filter="url(#nb)"/>
<polyline points="174.0,402.0 240.0,422.1" fill="none" stroke="#32353e" stroke-width="1.2" />
<polyline points="174.0,472.0 240.0,481.8" fill="none" stroke="#32353e" stroke-width="1.2" />
<polyline points="174.0,539.0 240.0,539.0" fill="none" stroke="#32353e" stroke-width="1.2" />
<polyline points="174.0,604.0 240.0,594.4" fill="none" stroke="#32353e" stroke-width="1.2" />
<polyline points="174.0,668.0 240.0,649.0" fill="none" stroke="#32353e" stroke-width="1.2" />
<polyline points="174.0,729.5 240.0,701.5" fill="none" stroke="#32353e" stroke-width="1.2" />
<line x1="192.5" y1="343.0" x2="201.5" y2="454.0" stroke="#4e525e" stroke-width="0.8" stroke-dasharray="4.5 3.5" opacity="0.55"/>
<line x1="201.5" y1="454.0" x2="212.5" y2="590.0" stroke="#4e525e" stroke-width="0.8" stroke-dasharray="4.5 3.5" opacity="0.55"/>
<line x1="212.5" y1="590.0" x2="224.0" y2="730.0" stroke="#4e525e" stroke-width="0.8" stroke-dasharray="4.5 3.5" opacity="0.55"/>
<line x1="176.5" y1="420.0" x2="178.6" y2="450.0" stroke="#4e525e" stroke-width="0.8" stroke-dasharray="4.5 3.5" opacity="0.55"/>
<line x1="178.6" y1="450.0" x2="190.0" y2="584.0" stroke="#4e525e" stroke-width="0.8" stroke-dasharray="4.5 3.5" opacity="0.55"/>
<line x1="190.0" y1="584.0" x2="203.0" y2="730.0" stroke="#4e525e" stroke-width="0.8" stroke-dasharray="4.5 3.5" opacity="0.55"/>
<line x1="174.0" y1="640.0" x2="181.0" y2="730.0" stroke="#4e525e" stroke-width="0.8" stroke-dasharray="4.5 3.5" opacity="0.55"/>
</g>
<polygon points="254.0,294.6 374.0,374.0 375.8,730.0 276.0,730.0" fill="#0166b6" />
<polygon points="306.0,449.0 351.5,462.0 357.5,624.0 308.0,640.0" fill="#565a38" />
<polygon points="306.0,449.0 351.5,462.0 357.5,624.0 308.0,640.0" fill="#8a8a50" filter="url(#fb)"/>
<polyline points="323.5,505.0 322.0,520.0 323.5,527.0" fill="none" stroke="#2e3a20" stroke-width="2" />
<polygon points="319.0,526.0 328.0,526.5 326.2,539.5 321.0,539.5" fill="#4e3626" />
<polygon points="307.4,562.0 313.0,562.0 312.6,569.6 307.8,569.6" fill="#4a3424" />
<polygon points="343.4,611.5 350.5,611.0 349.6,622.5 344.6,622.5" fill="#5e4632" />
<polyline points="347.0,611.0 346.5,603.0" fill="none" stroke="#3a4a24" stroke-width="1.2" />
<path d="M313.5 501.5 C313.5 478 318 459 325.5 458.7 C334 459 341 478 342.8 504.5" fill="none" stroke="#dcdce0" stroke-width="1.3"/>
<path d="M318.7 469.5 L329.2 501.5 L337.4 472" fill="none" stroke="#d0d0d6" stroke-width="1.3"/>
<path d="M320.5 499 C321 486 323 476.5 327 476 C332 476.5 336 488 337.6 503" fill="none" stroke="#4c4c50" stroke-width="1.2"/>
<polyline points="313.3,502.0 315.5,637.0" fill="none" stroke="#d4d4da" stroke-width="1.4" />
<polyline points="343.0,506.0 346.0,628.0" fill="none" stroke="#d4d4da" stroke-width="1.4" />
<polygon points="306.0,500.5 352.8,505.3 352.8,508.3 306.0,503.7" fill="#c2c2c8" />
<polygon points="306.0,446.6 351.2,459.6 351.2,464.4 306.0,452.0" fill="#bcbcc2" />
<polyline points="306.0,452.4 351.2,464.8" fill="none" stroke="#4a4a4a" stroke-width="0.8" stroke-dasharray="2 2"/>
<polygon points="351.0,462.0 353.5,462.0 358.5,625.0 355.5,625.0" fill="#b4b4ba" />
<polygon points="306.0,569.8 314.5,570.2 314.5,573.6 306.0,573.4" fill="#cfcfd3" />
<polygon points="344.8,565.6 355.0,565.0 355.0,568.6 344.8,569.0" fill="#cfcfd3" />
<polygon points="306.0,636.8 357.8,621.5 358.0,628.0 306.0,645.0" fill="#c9c9cf" />
<polygon points="306.0,643.5 358.0,626.5 358.0,631.0 306.0,648.4" fill="#f6f6fa" />
<polygon points="306.0,648.4 358.0,631.0 358.2,637.5 306.0,655.2" fill="#b9b9c1" />
<polyline points="306.0,651.0 358.0,633.6" fill="none" stroke="#e8e8ee" stroke-width="0.8" stroke-dasharray="2 1.5"/>
<polygon points="277.0,364.0 305.3,372.0 306.2,450.0 307.5,580.0 308.2,672.0 309.5,690.0 311.5,730.0 297.0,730.0 292.5,694.0 291.5,672.0 289.0,584.0 281.3,450.0" fill="url(#cub)" />
<polyline points="279.5,366.0 296.7,670.0" fill="none" stroke="#8f8470" stroke-width="1.1" opacity="0.8"/>
<polyline points="284.5,367.5 300.5,670.0" fill="none" stroke="#e0d6c4" stroke-width="1.1" opacity="0.8"/>
<polyline points="289.5,369.0 303.0,670.0" fill="none" stroke="#8f8470" stroke-width="1.1" opacity="0.8"/>
<polyline points="295.0,370.5 305.5,670.0" fill="none" stroke="#ddd3c1" stroke-width="1.1" opacity="0.8"/>
<polyline points="300.5,372.0 308.1,670.0" fill="none" stroke="#8a7f6b" stroke-width="1.1" opacity="0.8"/>
<polygon points="349.5,398.0 366.8,407.0 367.1,450.0 367.3,640.0 367.0,702.0 357.5,702.0 356.2,640.0 350.8,450.0" fill="url(#cub)" />
<polyline points="353.0,400.0 358.5,700.0" fill="none" stroke="#8f8470" stroke-width="1" opacity="0.8"/>
<polyline points="357.0,401.5 361.0,700.0" fill="none" stroke="#e0d6c4" stroke-width="1" opacity="0.8"/>
<polyline points="361.0,403.0 364.0,700.0" fill="none" stroke="#8a7f6b" stroke-width="1" opacity="0.8"/>
<polyline points="364.5,404.5 366.0,700.0" fill="none" stroke="#d6ccb9" stroke-width="1" opacity="0.8"/>
<polyline points="268.0,353.2 372.0,409.0" fill="none" stroke="#6a5e4c" stroke-width="5.2" stroke-linecap="round"/>
<polyline points="268.0,352.2 372.0,408.0" fill="none" stroke="#b8ad99" stroke-width="3.6" stroke-linecap="round"/>
<polyline points="268.0,351.4 372.0,407.2" fill="none" stroke="#ddd4c3" stroke-width="1.6" stroke-linecap="round"/>
<ellipse cx="266.6" cy="351.2" rx="4" ry="10.4" fill="#9c917d" transform="rotate(-8 266.6 351.2)"/>
<ellipse cx="265.8" cy="348.5" rx="2.6" ry="7.5" fill="#d8cfbd" transform="rotate(-8 265.8 348.5)"/>
<ellipse cx="272.6" cy="356.5" rx="2.1" ry="11" fill="#a89d89" transform="rotate(-8 272.6 356.5)"/>
<ellipse cx="272.2" cy="354.5" rx="1" ry="7" fill="#d8cebc" transform="rotate(-8 272.2 354.5)"/>
<path d="M278.2 385.5 V348.5 Q280.8 343.0 283.4 348.5 V385.5 Z" fill="#c9beaa"/>
<path d="M283.0 348.5 V385.5" stroke="#9c917d" stroke-width="1.3"/>
<path d="M284.4 383.8 V346.8 Q287.1 341.3 289.8 346.8 V383.8 Z" fill="#d2c7b3"/>
<path d="M289.4 346.8 V383.8" stroke="#a59a86" stroke-width="1.3"/>
<path d="M290.6 388.0 V351.0 Q293.2 345.5 295.8 351.0 V388.0 Z" fill="#cabfab"/>
<path d="M295.4 351.0 V388.0" stroke="#978c78" stroke-width="1.3"/>
<path d="M296.3 391.5 V354.5 Q298.9 349.0 301.5 354.5 V391.5 Z" fill="#cfc4b0"/>
<path d="M301.1 354.5 V391.5" stroke="#9f9480" stroke-width="1.3"/>
<path d="M301.6 397.0 V360.0 Q303.9 354.5 306.2 360.0 V397.0 Z" fill="#c2b7a3"/>
<path d="M305.8 360.0 V397.0" stroke="#8f8470" stroke-width="1.3"/>
<rect x="283.6" y="362.5" width="1.3" height="4.5" fill="#5a4e40"/>
<rect x="289.8" y="366.0" width="1.3" height="4.5" fill="#5a4e40"/>
<rect x="295.7" y="369.5" width="1.3" height="4.5" fill="#5a4e40"/>
<rect x="301.0" y="372.5" width="1.3" height="4.5" fill="#5a4e40"/>
<path d="M349.3 416.5 V389.0 Q351.4 384.5 353.5 389.0 V416.5 Z" fill="#c9beaa"/>
<path d="M353.1 389.5 V416.5" stroke="#9c917d" stroke-width="1.1"/>
<path d="M354.0 418.5 V391.0 Q356.0 386.5 358.0 391.0 V418.5 Z" fill="#d2c7b3"/>
<path d="M357.6 391.5 V418.5" stroke="#a59a86" stroke-width="1.1"/>
<path d="M358.3 420.5 V393.0 Q360.1 388.5 361.9 393.0 V420.5 Z" fill="#cabfab"/>
<path d="M361.5 393.5 V420.5" stroke="#978c78" stroke-width="1.1"/>
<path d="M362.2 422.5 V395.0 Q364.1 390.5 366.0 395.0 V422.5 Z" fill="#cfc4b0"/>
<path d="M365.6 395.5 V422.5" stroke="#9f9480" stroke-width="1.1"/>
<rect x="353.3" y="398.0" width="1.1" height="4" fill="#5a4e40"/>
<rect x="357.6" y="400.5" width="1.1" height="4" fill="#5a4e40"/>
<rect x="361.6" y="402.5" width="1.1" height="4" fill="#5a4e40"/>
<ellipse cx="369" cy="403" rx="1.7" ry="6.5" fill="#c4b9a5" transform="rotate(-6 369 403)"/>
<ellipse cx="372.4" cy="406.5" rx="2" ry="8" fill="#b0a591" transform="rotate(-6 372.4 406.5)"/>
<ellipse cx="372" cy="404.5" rx="0.9" ry="5" fill="#ddd3c1" transform="rotate(-6 372 404.5)"/>
<polygon points="291.2,676.0 293.5,668.0 308.2,672.5 309.2,689.0 306.0,699.0 292.6,697.0" fill="#b0a592" />
<polygon points="374.0,374.0 401.2,330.2 400.0,730.0 375.5,730.0" fill="#b2b2b2" />
<polygon points="376.6,450.5 394.8,435.5 394.3,730.0 376.8,730.0" fill="url(#drb)" />
<polygon points="376.6,450.5 394.8,435.5 394.8,444.0 377.2,460.0" fill="#a24c30" />
<polyline points="376.6,450.0 394.8,435.0" fill="none" stroke="#b8e6ea" stroke-width="1.2" />
<polyline points="375.9,452.0 376.3,730.0" fill="none" stroke="#9a9a9a" stroke-width="1" />
<polygon points="401.2,330.2 479.6,405.0 472.0,730.0 399.8,730.0" fill="#bab890" />
<polygon points="479.6,405.0 600.0,329.5 600.0,730.0 466.0,730.0" fill="#c8663c" />
<polygon points="479.6,405.0 600.0,329.5 600.0,730.0 466.0,730.0" fill="#000" filter="url(#bb)"/>
<g clip-path="url(#bwb)">
<line x1="605.9" y1="316.3" x2="604.2" y2="335.3" stroke="#c08c60" stroke-width="0.8" opacity="0.75"/>
<line x1="583.8" y1="330.9" x2="582.4" y2="348.5" stroke="#c08c60" stroke-width="0.8" opacity="0.75"/>
<line x1="564.4" y1="343.6" x2="563.2" y2="360.1" stroke="#c08c60" stroke-width="0.8" opacity="0.75"/>
<line x1="547.3" y1="354.9" x2="546.3" y2="370.3" stroke="#c08c60" stroke-width="0.8" opacity="0.75"/>
<line x1="532.1" y1="364.9" x2="531.2" y2="379.5" stroke="#c08c60" stroke-width="0.8" opacity="0.75"/>
<line x1="518.4" y1="373.9" x2="517.6" y2="387.7" stroke="#c08c60" stroke-width="0.8" opacity="0.75"/>
<line x1="506.0" y1="382.0" x2="505.4" y2="395.0" stroke="#c08c60" stroke-width="0.8" opacity="0.75"/>
<line x1="494.9" y1="389.3" x2="494.3" y2="401.7" stroke="#c08c60" stroke-width="0.8" opacity="0.75"/>
<line x1="484.7" y1="396.0" x2="484.2" y2="407.8" stroke="#c08c60" stroke-width="0.8" opacity="0.75"/>
<line x1="475.4" y1="402.1" x2="475.0" y2="413.4" stroke="#c08c60" stroke-width="0.8" opacity="0.75"/>
<line x1="466.9" y1="407.8" x2="466.5" y2="418.5" stroke="#c08c60" stroke-width="0.8" opacity="0.75"/>
<line x1="594.5" y1="341.2" x2="592.9" y2="359.4" stroke="#c08c60" stroke-width="0.8" opacity="0.75"/>
<line x1="573.8" y1="353.7" x2="572.5" y2="370.6" stroke="#c08c60" stroke-width="0.8" opacity="0.75"/>
<line x1="555.6" y1="364.7" x2="554.5" y2="380.5" stroke="#c08c60" stroke-width="0.8" opacity="0.75"/>
<line x1="539.5" y1="374.5" x2="538.5" y2="389.4" stroke="#c08c60" stroke-width="0.8" opacity="0.75"/>
<line x1="525.0" y1="383.2" x2="524.2" y2="397.2" stroke="#c08c60" stroke-width="0.8" opacity="0.75"/>
<line x1="512.1" y1="391.0" x2="511.4" y2="404.3" stroke="#c08c60" stroke-width="0.8" opacity="0.75"/>
<line x1="500.3" y1="398.1" x2="499.7" y2="410.7" stroke="#c08c60" stroke-width="0.8" opacity="0.75"/>
<line x1="489.7" y1="404.6" x2="489.2" y2="416.6" stroke="#c08c60" stroke-width="0.8" opacity="0.75"/>
<line x1="479.9" y1="410.4" x2="479.5" y2="421.9" stroke="#c08c60" stroke-width="0.8" opacity="0.75"/>
<line x1="471.0" y1="415.8" x2="470.7" y2="426.8" stroke="#c08c60" stroke-width="0.8" opacity="0.75"/>
<line x1="605.9" y1="352.2" x2="604.2" y2="370.9" stroke="#c08c60" stroke-width="0.8" opacity="0.75"/>
<line x1="583.8" y1="364.4" x2="582.4" y2="381.7" stroke="#c08c60" stroke-width="0.8" opacity="0.75"/>
<line x1="564.4" y1="375.1" x2="563.2" y2="391.3" stroke="#c08c60" stroke-width="0.8" opacity="0.75"/>
<line x1="547.3" y1="384.5" x2="546.3" y2="399.7" stroke="#c08c60" stroke-width="0.8" opacity="0.75"/>
<line x1="532.1" y1="392.9" x2="531.2" y2="407.3" stroke="#c08c60" stroke-width="0.8" opacity="0.75"/>
<line x1="518.4" y1="400.5" x2="517.6" y2="414.0" stroke="#c08c60" stroke-width="0.8" opacity="0.75"/>
<line x1="506.0" y1="407.3" x2="505.4" y2="420.1" stroke="#c08c60" stroke-width="0.8" opacity="0.75"/>
<line x1="494.9" y1="413.4" x2="494.3" y2="425.6" stroke="#c08c60" stroke-width="0.8" opacity="0.75"/>
<line x1="484.7" y1="419.0" x2="484.2" y2="430.7" stroke="#c08c60" stroke-width="0.8" opacity="0.75"/>
<line x1="475.4" y1="424.2" x2="475.0" y2="435.3" stroke="#c08c60" stroke-width="0.8" opacity="0.75"/>
<line x1="466.9" y1="428.9" x2="466.5" y2="439.5" stroke="#c08c60" stroke-width="0.8" opacity="0.75"/>
<line x1="594.5" y1="375.7" x2="592.9" y2="393.5" stroke="#c08c60" stroke-width="0.8" opacity="0.75"/>
<line x1="573.8" y1="386.0" x2="572.5" y2="402.6" stroke="#c08c60" stroke-width="0.8" opacity="0.75"/>
<line x1="555.6" y1="395.1" x2="554.5" y2="410.6" stroke="#c08c60" stroke-width="0.8" opacity="0.75"/>
<line x1="539.5" y1="403.1" x2="538.5" y2="417.8" stroke="#c08c60" stroke-width="0.8" opacity="0.75"/>
<line x1="525.0" y1="410.3" x2="524.2" y2="424.2" stroke="#c08c60" stroke-width="0.8" opacity="0.75"/>
<line x1="512.1" y1="416.8" x2="511.4" y2="429.9" stroke="#c08c60" stroke-width="0.8" opacity="0.75"/>
<line x1="500.3" y1="422.7" x2="499.7" y2="435.1" stroke="#c08c60" stroke-width="0.8" opacity="0.75"/>
<line x1="489.7" y1="428.0" x2="489.2" y2="439.8" stroke="#c08c60" stroke-width="0.8" opacity="0.75"/>
<line x1="479.9" y1="432.8" x2="479.5" y2="444.1" stroke="#c08c60" stroke-width="0.8" opacity="0.75"/>
<line x1="471.0" y1="437.3" x2="470.7" y2="448.1" stroke="#c08c60" stroke-width="0.8" opacity="0.75"/>
<line x1="605.9" y1="387.7" x2="604.2" y2="406.0" stroke="#c08c60" stroke-width="0.8" opacity="0.75"/>
<line x1="583.8" y1="397.6" x2="582.4" y2="414.6" stroke="#c08c60" stroke-width="0.8" opacity="0.75"/>
<line x1="564.4" y1="406.2" x2="563.2" y2="422.1" stroke="#c08c60" stroke-width="0.8" opacity="0.75"/>
<line x1="547.3" y1="413.9" x2="546.3" y2="428.8" stroke="#c08c60" stroke-width="0.8" opacity="0.75"/>
<line x1="532.0" y1="420.7" x2="531.2" y2="434.8" stroke="#c08c60" stroke-width="0.8" opacity="0.75"/>
<line x1="518.4" y1="426.8" x2="517.6" y2="440.1" stroke="#c08c60" stroke-width="0.8" opacity="0.75"/>
<line x1="506.0" y1="432.3" x2="505.4" y2="444.9" stroke="#c08c60" stroke-width="0.8" opacity="0.75"/>
<line x1="494.9" y1="437.3" x2="494.3" y2="449.3" stroke="#c08c60" stroke-width="0.8" opacity="0.75"/>
<line x1="484.7" y1="441.8" x2="484.2" y2="453.3" stroke="#c08c60" stroke-width="0.8" opacity="0.75"/>
<line x1="475.4" y1="446.0" x2="475.0" y2="456.9" stroke="#c08c60" stroke-width="0.8" opacity="0.75"/>
<line x1="466.9" y1="449.8" x2="466.5" y2="460.3" stroke="#c08c60" stroke-width="0.8" opacity="0.75"/>
<line x1="594.5" y1="409.8" x2="592.9" y2="427.3" stroke="#c08c60" stroke-width="0.8" opacity="0.75"/>
<line x1="573.8" y1="418.0" x2="572.5" y2="434.3" stroke="#c08c60" stroke-width="0.8" opacity="0.75"/>
<line x1="555.6" y1="425.2" x2="554.5" y2="440.5" stroke="#c08c60" stroke-width="0.8" opacity="0.75"/>
<line x1="539.5" y1="431.5" x2="538.5" y2="445.9" stroke="#c08c60" stroke-width="0.8" opacity="0.75"/>
<line x1="525.0" y1="437.2" x2="524.2" y2="450.8" stroke="#c08c60" stroke-width="0.8" opacity="0.75"/>
<line x1="512.0" y1="442.3" x2="511.4" y2="455.2" stroke="#c08c60" stroke-width="0.8" opacity="0.75"/>
<line x1="500.3" y1="446.9" x2="499.7" y2="459.2" stroke="#c08c60" stroke-width="0.8" opacity="0.75"/>
<line x1="489.7" y1="451.1" x2="489.2" y2="462.8" stroke="#c08c60" stroke-width="0.8" opacity="0.75"/>
<line x1="479.9" y1="455.0" x2="479.5" y2="466.1" stroke="#c08c60" stroke-width="0.8" opacity="0.75"/>
<line x1="471.0" y1="458.5" x2="470.7" y2="469.1" stroke="#c08c60" stroke-width="0.8" opacity="0.75"/>
<line x1="605.9" y1="422.9" x2="604.2" y2="440.8" stroke="#c08c60" stroke-width="0.8" opacity="0.75"/>
<line x1="583.8" y1="430.4" x2="582.4" y2="447.1" stroke="#c08c60" stroke-width="0.8" opacity="0.75"/>
<line x1="564.4" y1="437.1" x2="563.3" y2="452.7" stroke="#c08c60" stroke-width="0.8" opacity="0.75"/>
<line x1="547.3" y1="442.9" x2="546.3" y2="457.6" stroke="#c08c60" stroke-width="0.8" opacity="0.75"/>
<line x1="532.0" y1="448.1" x2="531.2" y2="462.0" stroke="#c08c60" stroke-width="0.8" opacity="0.75"/>
<line x1="518.4" y1="452.8" x2="517.6" y2="466.0" stroke="#c08c60" stroke-width="0.8" opacity="0.75"/>
<line x1="506.0" y1="457.0" x2="505.4" y2="469.5" stroke="#c08c60" stroke-width="0.8" opacity="0.75"/>
<line x1="494.9" y1="460.9" x2="494.3" y2="472.7" stroke="#c08c60" stroke-width="0.8" opacity="0.75"/>
<line x1="484.7" y1="464.3" x2="484.2" y2="475.7" stroke="#c08c60" stroke-width="0.8" opacity="0.75"/>
<line x1="475.4" y1="467.5" x2="475.0" y2="478.4" stroke="#c08c60" stroke-width="0.8" opacity="0.75"/>
<line x1="466.9" y1="470.4" x2="466.5" y2="480.8" stroke="#c08c60" stroke-width="0.8" opacity="0.75"/>
<line x1="594.5" y1="443.6" x2="592.9" y2="460.8" stroke="#c08c60" stroke-width="0.8" opacity="0.75"/>
<line x1="573.8" y1="449.6" x2="572.5" y2="465.6" stroke="#c08c60" stroke-width="0.8" opacity="0.75"/>
<line x1="555.6" y1="454.9" x2="554.5" y2="470.0" stroke="#c08c60" stroke-width="0.8" opacity="0.75"/>
<line x1="539.5" y1="459.6" x2="538.5" y2="473.8" stroke="#c08c60" stroke-width="0.8" opacity="0.75"/>
<line x1="525.0" y1="463.8" x2="524.2" y2="477.2" stroke="#c08c60" stroke-width="0.8" opacity="0.75"/>
<line x1="512.0" y1="467.6" x2="511.4" y2="480.3" stroke="#c08c60" stroke-width="0.8" opacity="0.75"/>
<line x1="500.3" y1="471.0" x2="499.7" y2="483.1" stroke="#c08c60" stroke-width="0.8" opacity="0.75"/>
<line x1="489.7" y1="474.1" x2="489.2" y2="485.6" stroke="#c08c60" stroke-width="0.8" opacity="0.75"/>
<line x1="479.9" y1="476.9" x2="479.5" y2="487.9" stroke="#c08c60" stroke-width="0.8" opacity="0.75"/>
<line x1="471.0" y1="479.5" x2="470.7" y2="490.0" stroke="#c08c60" stroke-width="0.8" opacity="0.75"/>
<line x1="605.9" y1="457.7" x2="604.2" y2="475.2" stroke="#c08c60" stroke-width="0.8" opacity="0.75"/>
<line x1="583.8" y1="463.0" x2="582.4" y2="479.3" stroke="#c08c60" stroke-width="0.8" opacity="0.75"/>
<line x1="564.4" y1="467.6" x2="563.3" y2="483.0" stroke="#c08c60" stroke-width="0.8" opacity="0.75"/>
<line x1="547.3" y1="471.7" x2="546.3" y2="486.1" stroke="#c08c60" stroke-width="0.8" opacity="0.75"/>
<line x1="532.0" y1="475.3" x2="531.2" y2="489.0" stroke="#c08c60" stroke-width="0.8" opacity="0.75"/>
<line x1="518.4" y1="478.6" x2="517.6" y2="491.5" stroke="#c08c60" stroke-width="0.8" opacity="0.75"/>
<line x1="506.0" y1="481.6" x2="505.4" y2="493.8" stroke="#c08c60" stroke-width="0.8" opacity="0.75"/>
<line x1="494.9" y1="484.2" x2="494.3" y2="495.9" stroke="#c08c60" stroke-width="0.8" opacity="0.75"/>
<line x1="484.7" y1="486.7" x2="484.2" y2="497.8" stroke="#c08c60" stroke-width="0.8" opacity="0.75"/>
<line x1="475.4" y1="488.9" x2="475.0" y2="499.6" stroke="#c08c60" stroke-width="0.8" opacity="0.75"/>
<line x1="466.9" y1="490.9" x2="466.5" y2="501.2" stroke="#c08c60" stroke-width="0.8" opacity="0.75"/>
<line x1="594.5" y1="477.1" x2="592.9" y2="493.9" stroke="#c08c60" stroke-width="0.8" opacity="0.75"/>
<line x1="573.8" y1="481.0" x2="572.5" y2="496.7" stroke="#c08c60" stroke-width="0.8" opacity="0.75"/>
<line x1="555.6" y1="484.4" x2="554.5" y2="499.2" stroke="#c08c60" stroke-width="0.8" opacity="0.75"/>
<line x1="539.5" y1="487.4" x2="538.5" y2="501.4" stroke="#c08c60" stroke-width="0.8" opacity="0.75"/>
<line x1="525.0" y1="490.1" x2="524.2" y2="503.3" stroke="#c08c60" stroke-width="0.8" opacity="0.75"/>
<line x1="512.0" y1="492.6" x2="511.4" y2="505.1" stroke="#c08c60" stroke-width="0.8" opacity="0.75"/>
<line x1="500.3" y1="494.8" x2="499.7" y2="506.7" stroke="#c08c60" stroke-width="0.8" opacity="0.75"/>
<line x1="489.7" y1="496.8" x2="489.2" y2="508.1" stroke="#c08c60" stroke-width="0.8" opacity="0.75"/>
<line x1="479.9" y1="498.6" x2="479.5" y2="509.5" stroke="#c08c60" stroke-width="0.8" opacity="0.75"/>
<line x1="471.0" y1="500.3" x2="470.7" y2="510.7" stroke="#c08c60" stroke-width="0.8" opacity="0.75"/>
<line x1="605.9" y1="492.1" x2="604.2" y2="509.3" stroke="#c08c60" stroke-width="0.8" opacity="0.75"/>
<line x1="583.8" y1="495.1" x2="582.4" y2="511.2" stroke="#c08c60" stroke-width="0.8" opacity="0.75"/>
<line x1="564.4" y1="497.8" x2="563.3" y2="512.9" stroke="#c08c60" stroke-width="0.8" opacity="0.75"/>
<line x1="547.3" y1="500.1" x2="546.3" y2="514.4" stroke="#c08c60" stroke-width="0.8" opacity="0.75"/>
<line x1="532.0" y1="502.2" x2="531.2" y2="515.7" stroke="#c08c60" stroke-width="0.8" opacity="0.75"/>
<line x1="518.4" y1="504.1" x2="517.6" y2="516.8" stroke="#c08c60" stroke-width="0.8" opacity="0.75"/>
<line x1="506.0" y1="505.8" x2="505.4" y2="517.9" stroke="#c08c60" stroke-width="0.8" opacity="0.75"/>
<line x1="494.9" y1="507.3" x2="494.3" y2="518.9" stroke="#c08c60" stroke-width="0.8" opacity="0.75"/>
<line x1="484.7" y1="508.7" x2="484.2" y2="519.7" stroke="#c08c60" stroke-width="0.8" opacity="0.75"/>
<line x1="475.4" y1="510.0" x2="475.0" y2="520.5" stroke="#c08c60" stroke-width="0.8" opacity="0.75"/>
<line x1="466.9" y1="511.2" x2="466.5" y2="521.3" stroke="#c08c60" stroke-width="0.8" opacity="0.75"/>
<line x1="594.5" y1="510.2" x2="593.0" y2="526.7" stroke="#c08c60" stroke-width="0.8" opacity="0.75"/>
<line x1="573.8" y1="512.0" x2="572.5" y2="527.4" stroke="#c08c60" stroke-width="0.8" opacity="0.75"/>
<line x1="555.6" y1="513.5" x2="554.5" y2="528.1" stroke="#c08c60" stroke-width="0.8" opacity="0.75"/>
<line x1="539.5" y1="514.9" x2="538.5" y2="528.6" stroke="#c08c60" stroke-width="0.8" opacity="0.75"/>
<line x1="525.0" y1="516.2" x2="524.2" y2="529.2" stroke="#c08c60" stroke-width="0.8" opacity="0.75"/>
<line x1="512.0" y1="517.3" x2="511.4" y2="529.6" stroke="#c08c60" stroke-width="0.8" opacity="0.75"/>
<line x1="500.3" y1="518.3" x2="499.7" y2="530.1" stroke="#c08c60" stroke-width="0.8" opacity="0.75"/>
<line x1="489.7" y1="519.3" x2="489.2" y2="530.4" stroke="#c08c60" stroke-width="0.8" opacity="0.75"/>
<line x1="479.9" y1="520.1" x2="479.5" y2="530.8" stroke="#c08c60" stroke-width="0.8" opacity="0.75"/>
<line x1="471.0" y1="520.9" x2="470.7" y2="531.1" stroke="#c08c60" stroke-width="0.8" opacity="0.75"/>
<line x1="605.9" y1="526.2" x2="604.2" y2="543.1" stroke="#c08c60" stroke-width="0.8" opacity="0.75"/>
<line x1="583.8" y1="527.0" x2="582.4" y2="542.8" stroke="#c08c60" stroke-width="0.8" opacity="0.75"/>
<line x1="564.4" y1="527.7" x2="563.3" y2="542.5" stroke="#c08c60" stroke-width="0.8" opacity="0.75"/>
<line x1="547.3" y1="528.3" x2="546.3" y2="542.3" stroke="#c08c60" stroke-width="0.8" opacity="0.75"/>
<line x1="532.0" y1="528.9" x2="531.2" y2="542.1" stroke="#c08c60" stroke-width="0.8" opacity="0.75"/>
<line x1="518.4" y1="529.4" x2="517.6" y2="541.9" stroke="#c08c60" stroke-width="0.8" opacity="0.75"/>
<line x1="506.0" y1="529.8" x2="505.4" y2="541.7" stroke="#c08c60" stroke-width="0.8" opacity="0.75"/>
<line x1="494.9" y1="530.2" x2="494.3" y2="541.6" stroke="#c08c60" stroke-width="0.8" opacity="0.75"/>
<line x1="484.7" y1="530.6" x2="484.2" y2="541.4" stroke="#c08c60" stroke-width="0.8" opacity="0.75"/>
<line x1="475.4" y1="530.9" x2="475.0" y2="541.3" stroke="#c08c60" stroke-width="0.8" opacity="0.75"/>
<line x1="466.9" y1="531.2" x2="466.5" y2="541.2" stroke="#c08c60" stroke-width="0.8" opacity="0.75"/>
<line x1="594.5" y1="542.9" x2="593.0" y2="559.1" stroke="#c08c60" stroke-width="0.8" opacity="0.75"/>
<line x1="573.8" y1="542.6" x2="572.5" y2="557.8" stroke="#c08c60" stroke-width="0.8" opacity="0.75"/>
<line x1="555.6" y1="542.4" x2="554.5" y2="556.6" stroke="#c08c60" stroke-width="0.8" opacity="0.75"/>
<line x1="539.5" y1="542.2" x2="538.5" y2="555.6" stroke="#c08c60" stroke-width="0.8" opacity="0.75"/>
<line x1="525.0" y1="542.0" x2="524.2" y2="554.7" stroke="#c08c60" stroke-width="0.8" opacity="0.75"/>
<line x1="512.0" y1="541.8" x2="511.4" y2="553.9" stroke="#c08c60" stroke-width="0.8" opacity="0.75"/>
<line x1="500.3" y1="541.7" x2="499.7" y2="553.2" stroke="#c08c60" stroke-width="0.8" opacity="0.75"/>
<line x1="489.7" y1="541.5" x2="489.2" y2="552.5" stroke="#c08c60" stroke-width="0.8" opacity="0.75"/>
<line x1="479.9" y1="541.4" x2="479.5" y2="551.9" stroke="#c08c60" stroke-width="0.8" opacity="0.75"/>
<line x1="471.0" y1="541.3" x2="470.7" y2="551.3" stroke="#c08c60" stroke-width="0.8" opacity="0.75"/>
<line x1="605.9" y1="559.9" x2="604.2" y2="576.4" stroke="#c08c60" stroke-width="0.8" opacity="0.75"/>
<line x1="583.8" y1="558.5" x2="582.4" y2="574.0" stroke="#c08c60" stroke-width="0.8" opacity="0.75"/>
<line x1="564.4" y1="557.3" x2="563.3" y2="571.8" stroke="#c08c60" stroke-width="0.8" opacity="0.75"/>
<line x1="547.3" y1="556.2" x2="546.3" y2="569.9" stroke="#c08c60" stroke-width="0.8" opacity="0.75"/>
<line x1="532.0" y1="555.2" x2="531.2" y2="568.2" stroke="#c08c60" stroke-width="0.8" opacity="0.75"/>
<line x1="518.4" y1="554.4" x2="517.6" y2="566.7" stroke="#c08c60" stroke-width="0.8" opacity="0.75"/>
<line x1="506.0" y1="553.6" x2="505.4" y2="565.3" stroke="#c08c60" stroke-width="0.8" opacity="0.75"/>
<line x1="494.9" y1="552.9" x2="494.3" y2="564.0" stroke="#c08c60" stroke-width="0.8" opacity="0.75"/>
<line x1="484.7" y1="552.2" x2="484.2" y2="562.9" stroke="#c08c60" stroke-width="0.8" opacity="0.75"/>
<line x1="475.4" y1="551.6" x2="475.0" y2="561.9" stroke="#c08c60" stroke-width="0.8" opacity="0.75"/>
<line x1="466.9" y1="551.1" x2="466.5" y2="560.9" stroke="#c08c60" stroke-width="0.8" opacity="0.75"/>
<line x1="594.5" y1="575.3" x2="593.0" y2="591.2" stroke="#c08c60" stroke-width="0.8" opacity="0.75"/>
<line x1="573.8" y1="573.0" x2="572.5" y2="587.9" stroke="#c08c60" stroke-width="0.8" opacity="0.75"/>
<line x1="555.6" y1="570.9" x2="554.5" y2="584.9" stroke="#c08c60" stroke-width="0.8" opacity="0.75"/>
<line x1="539.5" y1="569.1" x2="538.5" y2="582.3" stroke="#c08c60" stroke-width="0.8" opacity="0.75"/>
<line x1="525.0" y1="567.5" x2="524.2" y2="580.0" stroke="#c08c60" stroke-width="0.8" opacity="0.75"/>
<line x1="512.0" y1="566.0" x2="511.4" y2="577.9" stroke="#c08c60" stroke-width="0.8" opacity="0.75"/>
<line x1="500.3" y1="564.7" x2="499.7" y2="576.1" stroke="#c08c60" stroke-width="0.8" opacity="0.75"/>
<line x1="489.7" y1="563.5" x2="489.2" y2="574.3" stroke="#c08c60" stroke-width="0.8" opacity="0.75"/>
<line x1="479.9" y1="562.4" x2="479.5" y2="572.8" stroke="#c08c60" stroke-width="0.8" opacity="0.75"/>
<line x1="471.0" y1="561.4" x2="470.7" y2="571.3" stroke="#c08c60" stroke-width="0.8" opacity="0.75"/>
<line x1="605.9" y1="593.3" x2="604.2" y2="609.5" stroke="#c08c60" stroke-width="0.8" opacity="0.75"/>
<line x1="583.8" y1="589.7" x2="582.4" y2="604.9" stroke="#c08c60" stroke-width="0.8" opacity="0.75"/>
<line x1="564.4" y1="586.5" x2="563.3" y2="600.8" stroke="#c08c60" stroke-width="0.8" opacity="0.75"/>
<line x1="547.3" y1="583.8" x2="546.3" y2="597.2" stroke="#c08c60" stroke-width="0.8" opacity="0.75"/>
<line x1="532.0" y1="581.3" x2="531.2" y2="594.0" stroke="#c08c60" stroke-width="0.8" opacity="0.75"/>
<line x1="518.4" y1="579.1" x2="517.6" y2="591.2" stroke="#c08c60" stroke-width="0.8" opacity="0.75"/>
<line x1="506.0" y1="577.1" x2="505.4" y2="588.6" stroke="#c08c60" stroke-width="0.8" opacity="0.75"/>
<line x1="494.9" y1="575.3" x2="494.3" y2="586.3" stroke="#c08c60" stroke-width="0.8" opacity="0.75"/>
<line x1="484.7" y1="573.6" x2="484.2" y2="584.1" stroke="#c08c60" stroke-width="0.8" opacity="0.75"/>
<line x1="475.4" y1="572.1" x2="475.0" y2="582.2" stroke="#c08c60" stroke-width="0.8" opacity="0.75"/>
<line x1="466.9" y1="570.7" x2="466.5" y2="580.4" stroke="#c08c60" stroke-width="0.8" opacity="0.75"/>
<line x1="594.5" y1="607.4" x2="593.0" y2="622.9" stroke="#c08c60" stroke-width="0.8" opacity="0.75"/>
<line x1="573.8" y1="603.0" x2="572.5" y2="617.6" stroke="#c08c60" stroke-width="0.8" opacity="0.75"/>
<line x1="555.6" y1="599.2" x2="554.5" y2="612.9" stroke="#c08c60" stroke-width="0.8" opacity="0.75"/>
<line x1="539.4" y1="595.8" x2="538.5" y2="608.8" stroke="#c08c60" stroke-width="0.8" opacity="0.75"/>
<line x1="525.0" y1="592.7" x2="524.2" y2="605.1" stroke="#c08c60" stroke-width="0.8" opacity="0.75"/>
<line x1="512.0" y1="590.0" x2="511.4" y2="601.7" stroke="#c08c60" stroke-width="0.8" opacity="0.75"/>
<line x1="500.3" y1="587.5" x2="499.7" y2="598.7" stroke="#c08c60" stroke-width="0.8" opacity="0.75"/>
<line x1="489.7" y1="585.3" x2="489.2" y2="595.9" stroke="#c08c60" stroke-width="0.8" opacity="0.75"/>
<line x1="479.9" y1="583.2" x2="479.5" y2="593.4" stroke="#c08c60" stroke-width="0.8" opacity="0.75"/>
<line x1="471.0" y1="581.3" x2="470.7" y2="591.1" stroke="#c08c60" stroke-width="0.8" opacity="0.75"/>
<line x1="605.9" y1="626.3" x2="604.2" y2="642.1" stroke="#c08c60" stroke-width="0.8" opacity="0.75"/>
<line x1="583.8" y1="620.5" x2="582.4" y2="635.4" stroke="#c08c60" stroke-width="0.8" opacity="0.75"/>
<line x1="564.4" y1="615.5" x2="563.3" y2="629.5" stroke="#c08c60" stroke-width="0.8" opacity="0.75"/>
<line x1="547.3" y1="611.0" x2="546.3" y2="624.3" stroke="#c08c60" stroke-width="0.8" opacity="0.75"/>
<line x1="532.0" y1="607.1" x2="531.2" y2="619.6" stroke="#c08c60" stroke-width="0.8" opacity="0.75"/>
<line x1="518.4" y1="603.5" x2="517.6" y2="615.4" stroke="#c08c60" stroke-width="0.8" opacity="0.75"/>
<line x1="506.0" y1="600.3" x2="505.4" y2="611.7" stroke="#c08c60" stroke-width="0.8" opacity="0.75"/>
<line x1="494.9" y1="597.4" x2="494.3" y2="608.2" stroke="#c08c60" stroke-width="0.8" opacity="0.75"/>
<line x1="484.7" y1="594.8" x2="484.2" y2="605.1" stroke="#c08c60" stroke-width="0.8" opacity="0.75"/>
<line x1="475.4" y1="592.4" x2="475.0" y2="602.3" stroke="#c08c60" stroke-width="0.8" opacity="0.75"/>
<line x1="466.9" y1="590.2" x2="466.5" y2="599.7" stroke="#c08c60" stroke-width="0.8" opacity="0.75"/>
<line x1="594.4" y1="639.1" x2="593.0" y2="654.3" stroke="#c08c60" stroke-width="0.8" opacity="0.75"/>
<line x1="573.8" y1="632.7" x2="572.5" y2="647.0" stroke="#c08c60" stroke-width="0.8" opacity="0.75"/>
<line x1="555.6" y1="627.1" x2="554.5" y2="640.6" stroke="#c08c60" stroke-width="0.8" opacity="0.75"/>
<line x1="539.4" y1="622.2" x2="538.5" y2="634.9" stroke="#c08c60" stroke-width="0.8" opacity="0.75"/>
<line x1="525.0" y1="617.7" x2="524.2" y2="629.8" stroke="#c08c60" stroke-width="0.8" opacity="0.75"/>
<line x1="512.0" y1="613.7" x2="511.4" y2="625.2" stroke="#c08c60" stroke-width="0.8" opacity="0.75"/>
<line x1="500.3" y1="610.1" x2="499.7" y2="621.1" stroke="#c08c60" stroke-width="0.8" opacity="0.75"/>
<line x1="489.7" y1="606.8" x2="489.2" y2="617.3" stroke="#c08c60" stroke-width="0.8" opacity="0.75"/>
<line x1="479.9" y1="603.8" x2="479.5" y2="613.9" stroke="#c08c60" stroke-width="0.8" opacity="0.75"/>
<line x1="471.0" y1="601.1" x2="470.7" y2="610.7" stroke="#c08c60" stroke-width="0.8" opacity="0.75"/>
<line x1="605.9" y1="658.9" x2="604.2" y2="674.4" stroke="#c08c60" stroke-width="0.8" opacity="0.75"/>
<line x1="583.8" y1="651.0" x2="582.4" y2="665.6" stroke="#c08c60" stroke-width="0.8" opacity="0.75"/>
<line x1="564.4" y1="644.1" x2="563.3" y2="657.9" stroke="#c08c60" stroke-width="0.8" opacity="0.75"/>
<line x1="547.3" y1="638.0" x2="546.3" y2="651.0" stroke="#c08c60" stroke-width="0.8" opacity="0.75"/>
<line x1="532.0" y1="632.6" x2="531.2" y2="644.9" stroke="#c08c60" stroke-width="0.8" opacity="0.75"/>
<line x1="518.4" y1="627.7" x2="517.6" y2="639.4" stroke="#c08c60" stroke-width="0.8" opacity="0.75"/>
<line x1="506.0" y1="623.3" x2="505.4" y2="634.5" stroke="#c08c60" stroke-width="0.8" opacity="0.75"/>
<line x1="494.9" y1="619.3" x2="494.3" y2="630.0" stroke="#c08c60" stroke-width="0.8" opacity="0.75"/>
<line x1="484.7" y1="615.7" x2="484.2" y2="625.9" stroke="#c08c60" stroke-width="0.8" opacity="0.75"/>
<line x1="475.4" y1="612.4" x2="475.0" y2="622.2" stroke="#c08c60" stroke-width="0.8" opacity="0.75"/>
<line x1="466.9" y1="609.4" x2="466.5" y2="618.8" stroke="#c08c60" stroke-width="0.8" opacity="0.75"/>
<line x1="594.4" y1="670.5" x2="593.0" y2="685.4" stroke="#c08c60" stroke-width="0.8" opacity="0.75"/>
<line x1="573.8" y1="662.1" x2="572.6" y2="676.1" stroke="#c08c60" stroke-width="0.8" opacity="0.75"/>
<line x1="555.6" y1="654.8" x2="554.5" y2="668.0" stroke="#c08c60" stroke-width="0.8" opacity="0.75"/>
<line x1="539.4" y1="648.2" x2="538.5" y2="660.8" stroke="#c08c60" stroke-width="0.8" opacity="0.75"/>
<line x1="525.0" y1="642.4" x2="524.2" y2="654.3" stroke="#c08c60" stroke-width="0.8" opacity="0.75"/>
<line x1="512.0" y1="637.2" x2="511.4" y2="648.5" stroke="#c08c60" stroke-width="0.8" opacity="0.75"/>
<line x1="500.3" y1="632.4" x2="499.7" y2="643.2" stroke="#c08c60" stroke-width="0.8" opacity="0.75"/>
<line x1="489.7" y1="628.1" x2="489.2" y2="638.4" stroke="#c08c60" stroke-width="0.8" opacity="0.75"/>
<line x1="479.9" y1="624.2" x2="479.5" y2="634.1" stroke="#c08c60" stroke-width="0.8" opacity="0.75"/>
<line x1="471.0" y1="620.6" x2="470.7" y2="630.1" stroke="#c08c60" stroke-width="0.8" opacity="0.75"/>
<line x1="605.9" y1="691.2" x2="604.2" y2="706.4" stroke="#c08c60" stroke-width="0.8" opacity="0.75"/>
<line x1="583.8" y1="681.2" x2="582.4" y2="695.5" stroke="#c08c60" stroke-width="0.8" opacity="0.75"/>
<line x1="564.4" y1="672.5" x2="563.3" y2="685.9" stroke="#c08c60" stroke-width="0.8" opacity="0.75"/>
<line x1="547.3" y1="664.7" x2="546.3" y2="677.5" stroke="#c08c60" stroke-width="0.8" opacity="0.75"/>
<line x1="532.0" y1="657.8" x2="531.2" y2="669.9" stroke="#c08c60" stroke-width="0.8" opacity="0.75"/>
<line x1="518.4" y1="651.6" x2="517.6" y2="663.1" stroke="#c08c60" stroke-width="0.8" opacity="0.75"/>
<line x1="506.0" y1="646.1" x2="505.4" y2="657.0" stroke="#c08c60" stroke-width="0.8" opacity="0.75"/>
<line x1="494.9" y1="641.0" x2="494.3" y2="651.5" stroke="#c08c60" stroke-width="0.8" opacity="0.75"/>
<line x1="484.7" y1="636.4" x2="484.2" y2="646.5" stroke="#c08c60" stroke-width="0.8" opacity="0.75"/>
<line x1="475.4" y1="632.2" x2="475.0" y2="641.9" stroke="#c08c60" stroke-width="0.8" opacity="0.75"/>
<line x1="466.9" y1="628.4" x2="466.5" y2="637.6" stroke="#c08c60" stroke-width="0.8" opacity="0.75"/>
<line x1="594.4" y1="701.5" x2="593.0" y2="716.1" stroke="#c08c60" stroke-width="0.8" opacity="0.75"/>
<line x1="573.8" y1="691.2" x2="572.6" y2="704.9" stroke="#c08c60" stroke-width="0.8" opacity="0.75"/>
<line x1="555.6" y1="682.1" x2="554.5" y2="695.1" stroke="#c08c60" stroke-width="0.8" opacity="0.75"/>
<line x1="539.4" y1="674.0" x2="538.6" y2="686.3" stroke="#c08c60" stroke-width="0.8" opacity="0.75"/>
<line x1="525.0" y1="666.8" x2="524.2" y2="678.5" stroke="#c08c60" stroke-width="0.8" opacity="0.75"/>
<line x1="512.0" y1="660.3" x2="511.4" y2="671.5" stroke="#c08c60" stroke-width="0.8" opacity="0.75"/>
<line x1="500.3" y1="654.5" x2="499.7" y2="665.1" stroke="#c08c60" stroke-width="0.8" opacity="0.75"/>
<line x1="489.7" y1="649.2" x2="489.2" y2="659.3" stroke="#c08c60" stroke-width="0.8" opacity="0.75"/>
<line x1="479.9" y1="644.3" x2="479.5" y2="654.1" stroke="#c08c60" stroke-width="0.8" opacity="0.75"/>
<line x1="471.0" y1="639.9" x2="470.7" y2="649.2" stroke="#c08c60" stroke-width="0.8" opacity="0.75"/>
<line x1="605.8" y1="723.1" x2="604.3" y2="738.0" stroke="#c08c60" stroke-width="0.8" opacity="0.75"/>
<line x1="583.8" y1="711.0" x2="582.4" y2="725.0" stroke="#c08c60" stroke-width="0.8" opacity="0.75"/>
<line x1="564.4" y1="700.5" x2="563.3" y2="713.7" stroke="#c08c60" stroke-width="0.8" opacity="0.75"/>
<line x1="547.3" y1="691.1" x2="546.3" y2="703.6" stroke="#c08c60" stroke-width="0.8" opacity="0.75"/>
<line x1="532.0" y1="682.8" x2="531.2" y2="694.6" stroke="#c08c60" stroke-width="0.8" opacity="0.75"/>
<line x1="518.4" y1="675.3" x2="517.6" y2="686.6" stroke="#c08c60" stroke-width="0.8" opacity="0.75"/>
<line x1="506.0" y1="668.6" x2="505.4" y2="679.3" stroke="#c08c60" stroke-width="0.8" opacity="0.75"/>
<line x1="494.9" y1="662.5" x2="494.3" y2="672.8" stroke="#c08c60" stroke-width="0.8" opacity="0.75"/>
<line x1="484.7" y1="656.9" x2="484.2" y2="666.8" stroke="#c08c60" stroke-width="0.8" opacity="0.75"/>
<line x1="475.4" y1="651.8" x2="475.0" y2="661.3" stroke="#c08c60" stroke-width="0.8" opacity="0.75"/>
<line x1="466.9" y1="647.2" x2="466.5" y2="656.3" stroke="#c08c60" stroke-width="0.8" opacity="0.75"/>
<line x1="594.4" y1="732.2" x2="593.0" y2="746.4" stroke="#c08c60" stroke-width="0.8" opacity="0.75"/>
<line x1="573.8" y1="719.9" x2="572.6" y2="733.4" stroke="#c08c60" stroke-width="0.8" opacity="0.75"/>
<line x1="555.6" y1="709.1" x2="554.6" y2="721.8" stroke="#c08c60" stroke-width="0.8" opacity="0.75"/>
<line x1="539.4" y1="699.5" x2="538.6" y2="711.6" stroke="#c08c60" stroke-width="0.8" opacity="0.75"/>
<line x1="525.0" y1="691.0" x2="524.2" y2="702.5" stroke="#c08c60" stroke-width="0.8" opacity="0.75"/>
<line x1="512.0" y1="683.3" x2="511.4" y2="694.2" stroke="#c08c60" stroke-width="0.8" opacity="0.75"/>
<line x1="500.3" y1="676.3" x2="499.7" y2="686.8" stroke="#c08c60" stroke-width="0.8" opacity="0.75"/>
<line x1="489.7" y1="670.0" x2="489.2" y2="680.0" stroke="#c08c60" stroke-width="0.8" opacity="0.75"/>
<line x1="479.9" y1="664.2" x2="479.5" y2="673.8" stroke="#c08c60" stroke-width="0.8" opacity="0.75"/>
<line x1="471.0" y1="658.9" x2="470.7" y2="668.2" stroke="#c08c60" stroke-width="0.8" opacity="0.75"/>
<line x1="460.0" y1="412.3" x2="602.0" y2="318.9" stroke="#75604a" stroke-width="2"/>
<line x1="460.0" y1="411.6" x2="602.0" y2="318.2" stroke="#2e1e14" stroke-width="0.9" stroke-dasharray="6 1.5" opacity="0.85"/>
<line x1="460.0" y1="422.5" x2="602.0" y2="336.7" stroke="#75604a" stroke-width="2"/>
<line x1="460.0" y1="421.8" x2="602.0" y2="336.0" stroke="#2e1e14" stroke-width="0.9" stroke-dasharray="6 1.5" opacity="0.85"/>
<line x1="460.0" y1="432.6" x2="602.0" y2="354.4" stroke="#75604a" stroke-width="2"/>
<line x1="460.0" y1="431.9" x2="602.0" y2="353.7" stroke="#2e1e14" stroke-width="0.9" stroke-dasharray="6 1.5" opacity="0.85"/>
<line x1="460.0" y1="442.8" x2="602.0" y2="372.0" stroke="#75604a" stroke-width="2"/>
<line x1="460.0" y1="442.1" x2="602.0" y2="371.3" stroke="#2e1e14" stroke-width="0.9" stroke-dasharray="6 1.5" opacity="0.85"/>
<line x1="460.0" y1="452.8" x2="602.0" y2="389.5" stroke="#75604a" stroke-width="2"/>
<line x1="460.0" y1="452.1" x2="602.0" y2="388.8" stroke="#2e1e14" stroke-width="0.9" stroke-dasharray="6 1.5" opacity="0.85"/>
<line x1="460.0" y1="462.8" x2="602.0" y2="406.9" stroke="#75604a" stroke-width="2"/>
<line x1="460.0" y1="462.1" x2="602.0" y2="406.2" stroke="#2e1e14" stroke-width="0.9" stroke-dasharray="6 1.5" opacity="0.85"/>
<line x1="460.0" y1="472.8" x2="602.0" y2="424.2" stroke="#75604a" stroke-width="2"/>
<line x1="460.0" y1="472.1" x2="602.0" y2="423.5" stroke="#2e1e14" stroke-width="0.9" stroke-dasharray="6 1.5" opacity="0.85"/>
<line x1="460.0" y1="482.7" x2="602.0" y2="441.4" stroke="#75604a" stroke-width="2"/>
<line x1="460.0" y1="482.0" x2="602.0" y2="440.7" stroke="#2e1e14" stroke-width="0.9" stroke-dasharray="6 1.5" opacity="0.85"/>
<line x1="460.0" y1="492.6" x2="602.0" y2="458.6" stroke="#75604a" stroke-width="2"/>
<line x1="460.0" y1="491.9" x2="602.0" y2="457.9" stroke="#2e1e14" stroke-width="0.9" stroke-dasharray="6 1.5" opacity="0.85"/>
<line x1="460.0" y1="502.4" x2="602.0" y2="475.7" stroke="#75604a" stroke-width="2"/>
<line x1="460.0" y1="501.7" x2="602.0" y2="475.0" stroke="#2e1e14" stroke-width="0.9" stroke-dasharray="6 1.5" opacity="0.85"/>
<line x1="460.0" y1="512.1" x2="602.0" y2="492.6" stroke="#75604a" stroke-width="2"/>
<line x1="460.0" y1="511.4" x2="602.0" y2="491.9" stroke="#2e1e14" stroke-width="0.9" stroke-dasharray="6 1.5" opacity="0.85"/>
<line x1="460.0" y1="521.8" x2="602.0" y2="509.5" stroke="#75604a" stroke-width="2"/>
<line x1="460.0" y1="521.1" x2="602.0" y2="508.8" stroke="#2e1e14" stroke-width="0.9" stroke-dasharray="6 1.5" opacity="0.85"/>
<line x1="460.0" y1="531.5" x2="602.0" y2="526.3" stroke="#75604a" stroke-width="2"/>
<line x1="460.0" y1="530.8" x2="602.0" y2="525.6" stroke="#2e1e14" stroke-width="0.9" stroke-dasharray="6 1.5" opacity="0.85"/>
<line x1="460.0" y1="541.1" x2="602.0" y2="543.0" stroke="#75604a" stroke-width="2"/>
<line x1="460.0" y1="540.4" x2="602.0" y2="542.3" stroke="#2e1e14" stroke-width="0.9" stroke-dasharray="6 1.5" opacity="0.85"/>
<line x1="460.0" y1="550.7" x2="602.0" y2="559.7" stroke="#75604a" stroke-width="2"/>
<line x1="460.0" y1="550.0" x2="602.0" y2="559.0" stroke="#2e1e14" stroke-width="0.9" stroke-dasharray="6 1.5" opacity="0.85"/>
<line x1="460.0" y1="560.2" x2="602.0" y2="576.2" stroke="#75604a" stroke-width="2"/>
<line x1="460.0" y1="559.5" x2="602.0" y2="575.5" stroke="#2e1e14" stroke-width="0.9" stroke-dasharray="6 1.5" opacity="0.85"/>
<line x1="460.0" y1="569.6" x2="602.0" y2="592.6" stroke="#75604a" stroke-width="2"/>
<line x1="460.0" y1="568.9" x2="602.0" y2="591.9" stroke="#2e1e14" stroke-width="0.9" stroke-dasharray="6 1.5" opacity="0.85"/>
<line x1="460.0" y1="579.0" x2="602.0" y2="609.0" stroke="#75604a" stroke-width="2"/>
<line x1="460.0" y1="578.3" x2="602.0" y2="608.3" stroke="#2e1e14" stroke-width="0.9" stroke-dasharray="6 1.5" opacity="0.85"/>
<line x1="460.0" y1="588.4" x2="602.0" y2="625.3" stroke="#75604a" stroke-width="2"/>
<line x1="460.0" y1="587.7" x2="602.0" y2="624.6" stroke="#2e1e14" stroke-width="0.9" stroke-dasharray="6 1.5" opacity="0.85"/>
<line x1="460.0" y1="597.7" x2="602.0" y2="641.4" stroke="#75604a" stroke-width="2"/>
<line x1="460.0" y1="597.0" x2="602.0" y2="640.7" stroke="#2e1e14" stroke-width="0.9" stroke-dasharray="6 1.5" opacity="0.85"/>
<line x1="460.0" y1="606.9" x2="602.0" y2="657.5" stroke="#75604a" stroke-width="2"/>
<line x1="460.0" y1="606.2" x2="602.0" y2="656.8" stroke="#2e1e14" stroke-width="0.9" stroke-dasharray="6 1.5" opacity="0.85"/>
<line x1="460.0" y1="616.1" x2="602.0" y2="673.5" stroke="#75604a" stroke-width="2"/>
<line x1="460.0" y1="615.4" x2="602.0" y2="672.8" stroke="#2e1e14" stroke-width="0.9" stroke-dasharray="6 1.5" opacity="0.85"/>
<line x1="460.0" y1="625.3" x2="602.0" y2="689.4" stroke="#75604a" stroke-width="2"/>
<line x1="460.0" y1="624.6" x2="602.0" y2="688.7" stroke="#2e1e14" stroke-width="0.9" stroke-dasharray="6 1.5" opacity="0.85"/>
<line x1="460.0" y1="634.4" x2="602.0" y2="705.3" stroke="#75604a" stroke-width="2"/>
<line x1="460.0" y1="633.7" x2="602.0" y2="704.6" stroke="#2e1e14" stroke-width="0.9" stroke-dasharray="6 1.5" opacity="0.85"/>
<line x1="460.0" y1="643.4" x2="602.0" y2="721.0" stroke="#75604a" stroke-width="2"/>
<line x1="460.0" y1="642.7" x2="602.0" y2="720.3" stroke="#2e1e14" stroke-width="0.9" stroke-dasharray="6 1.5" opacity="0.85"/>
<line x1="460.0" y1="652.4" x2="602.0" y2="736.6" stroke="#75604a" stroke-width="2"/>
<line x1="460.0" y1="651.7" x2="602.0" y2="735.9" stroke="#2e1e14" stroke-width="0.9" stroke-dasharray="6 1.5" opacity="0.85"/>
<line x1="460.0" y1="661.3" x2="602.0" y2="752.2" stroke="#75604a" stroke-width="2"/>
<line x1="460.0" y1="660.6" x2="602.0" y2="751.5" stroke="#2e1e14" stroke-width="0.9" stroke-dasharray="6 1.5" opacity="0.85"/>
</g>
<polygon points="597.2,530.0 600.0,530.0 600.0,730.0 580.0,730.0" fill="#b2b2ba" />
<polygon points="597.0,612.0 600.0,612.0 600.0,730.0 587.5,730.0" fill="#d2d2da" />
<polygon points="596.0,690.0 597.0,690.0 597.0,730.0 594.3,730.0" fill="#eeeec4" />
<polygon points="240.3,194.0 247.3,194.0 254.0,280.0 256.4,324.0 263.4,454.0 270.3,580.0 278.5,730.0 271.6,730.0" fill="#b3b38d" />
<polygon points="191.6,194.0 240.5,194.0 271.6,730.0 232.9,730.0" fill="#6e3a28" />
<polyline points="408.4,584.0 407.3,560.0 408.0,536.0" fill="none" stroke="#2e5a1e" stroke-width="1.4" />
<polyline points="407.5,566.0 404.2,556.0" fill="none" stroke="#4a8a2a" stroke-width="1" />
<polyline points="407.6,575.0 411.5,566.5" fill="none" stroke="#3a7a24" stroke-width="1" />
<polygon points="406.6,538.0 408.6,536.0 410.3,545.0 409.2,555.0 407.2,551.0" fill="#2a5a1e" />
<polyline points="407.2,540.0 405.8,548.0 407.0,557.0" fill="none" stroke="#1c4014" stroke-width="1" />
<polygon points="404.3,582.5 412.3,582.5 411.2,606.5 405.8,606.5" fill="#5a2a12" />
<polyline points="404.3,583.0 412.3,583.0" fill="none" stroke="#7a3e1e" stroke-width="1.4" />
<polygon points="476.0,676.0 534.7,694.0 532.0,730.0 476.0,730.0" fill="#080a08" />
<polygon points="479.0,683.0 524.0,712.0 523.5,726.0 478.5,694.0" fill="#c4623a" />
<polyline points="479.0,688.5 524.0,718.5" fill="none" stroke="#8a5a3a" stroke-width="1.5" />
<polygon points="478.0,716.0 492.0,730.0 478.0,730.0" fill="#c4623a" />
<polygon points="470.6,550.5 473.5,548.8 520.0,554.0 523.0,557.0 514.8,696.0 511.5,699.0 482.0,681.5 468.2,664.0" fill="url(#tvb)" />
<polygon points="477.0,562.0 516.0,566.5 510.0,686.0 483.5,671.0" fill="url(#tsb)" />
<polygon points="468.2,664.0 470.6,550.5 473.5,548.8 471.5,662.0 482.0,681.5" fill="#505050" />
<polyline points="486.0,650.0 500.0,606.0 511.0,646.0" fill="none" stroke="#464646" stroke-width="7" opacity="0.3" stroke-linejoin="round"/>
<polygon points="399.0,606.3 483.0,643.8 472.0,651.6 397.4,611.7" fill="#a9a797" />
<polygon points="397.4,613.0 472.0,653.0 470.0,661.0 397.4,619.0" fill="#e08a60" />
<polygon points="399.3,619.0 470.0,661.5 475.5,663.0 476.0,730.0 399.3,730.0" fill="#c8663c" />
<polygon points="399.3,619.0 470.0,661.5 475.5,663.0 476.0,730.0 399.3,730.0" fill="#000" filter="url(#bb)"/>
<g clip-path="url(#lwb)">
<line x1="394.0" y1="613.7" x2="394.0" y2="626.6" stroke="#c08c60" stroke-width="0.8" opacity="0.75"/>
<line x1="402.9" y1="619.1" x2="402.9" y2="632.8" stroke="#c08c60" stroke-width="0.8" opacity="0.75"/>
<line x1="412.5" y1="624.7" x2="412.3" y2="639.5" stroke="#c08c60" stroke-width="0.8" opacity="0.75"/>
<line x1="422.6" y1="630.8" x2="422.4" y2="646.5" stroke="#c08c60" stroke-width="0.8" opacity="0.75"/>
<line x1="433.4" y1="637.2" x2="433.0" y2="654.0" stroke="#c08c60" stroke-width="0.8" opacity="0.75"/>
<line x1="444.7" y1="644.0" x2="444.3" y2="661.8" stroke="#c08c60" stroke-width="0.8" opacity="0.75"/>
<line x1="456.7" y1="651.1" x2="456.1" y2="670.1" stroke="#c08c60" stroke-width="0.8" opacity="0.75"/>
<line x1="469.3" y1="658.7" x2="468.5" y2="678.8" stroke="#c08c60" stroke-width="0.8" opacity="0.75"/>
<line x1="482.5" y1="666.5" x2="481.5" y2="687.9" stroke="#c08c60" stroke-width="0.8" opacity="0.75"/>
<line x1="496.3" y1="674.8" x2="495.1" y2="697.4" stroke="#c08c60" stroke-width="0.8" opacity="0.75"/>
<line x1="510.7" y1="683.4" x2="509.3" y2="707.3" stroke="#c08c60" stroke-width="0.8" opacity="0.75"/>
<line x1="525.7" y1="692.4" x2="524.1" y2="717.6" stroke="#c08c60" stroke-width="0.8" opacity="0.75"/>
<line x1="541.4" y1="701.7" x2="539.4" y2="728.4" stroke="#c08c60" stroke-width="0.8" opacity="0.75"/>
<line x1="557.7" y1="711.4" x2="555.3" y2="739.5" stroke="#c08c60" stroke-width="0.8" opacity="0.75"/>
<line x1="398.4" y1="629.7" x2="398.3" y2="643.1" stroke="#c08c60" stroke-width="0.8" opacity="0.75"/>
<line x1="407.6" y1="636.2" x2="407.5" y2="650.4" stroke="#c08c60" stroke-width="0.8" opacity="0.75"/>
<line x1="417.5" y1="643.1" x2="417.3" y2="658.3" stroke="#c08c60" stroke-width="0.8" opacity="0.75"/>
<line x1="427.9" y1="650.4" x2="427.6" y2="666.6" stroke="#c08c60" stroke-width="0.8" opacity="0.75"/>
<line x1="439.0" y1="658.1" x2="438.6" y2="675.3" stroke="#c08c60" stroke-width="0.8" opacity="0.75"/>
<line x1="450.6" y1="666.3" x2="450.1" y2="684.6" stroke="#c08c60" stroke-width="0.8" opacity="0.75"/>
<line x1="462.9" y1="674.9" x2="462.2" y2="694.3" stroke="#c08c60" stroke-width="0.8" opacity="0.75"/>
<line x1="475.8" y1="683.9" x2="474.9" y2="704.5" stroke="#c08c60" stroke-width="0.8" opacity="0.75"/>
<line x1="489.3" y1="693.3" x2="488.2" y2="715.2" stroke="#c08c60" stroke-width="0.8" opacity="0.75"/>
<line x1="503.4" y1="703.2" x2="502.1" y2="726.3" stroke="#c08c60" stroke-width="0.8" opacity="0.75"/>
<line x1="518.1" y1="713.5" x2="516.6" y2="737.9" stroke="#c08c60" stroke-width="0.8" opacity="0.75"/>
<line x1="533.5" y1="724.2" x2="531.7" y2="750.0" stroke="#c08c60" stroke-width="0.8" opacity="0.75"/>
<line x1="549.5" y1="735.4" x2="547.3" y2="762.6" stroke="#c08c60" stroke-width="0.8" opacity="0.75"/>
<line x1="566.0" y1="747.0" x2="563.5" y2="775.6" stroke="#c08c60" stroke-width="0.8" opacity="0.75"/>
<line x1="394.0" y1="639.6" x2="394.0" y2="652.5" stroke="#c08c60" stroke-width="0.8" opacity="0.75"/>
<line x1="402.9" y1="646.8" x2="402.9" y2="660.5" stroke="#c08c60" stroke-width="0.8" opacity="0.75"/>
<line x1="412.5" y1="654.4" x2="412.3" y2="669.1" stroke="#c08c60" stroke-width="0.8" opacity="0.75"/>
<line x1="422.6" y1="662.6" x2="422.4" y2="678.2" stroke="#c08c60" stroke-width="0.8" opacity="0.75"/>
<line x1="433.4" y1="671.2" x2="433.0" y2="687.8" stroke="#c08c60" stroke-width="0.8" opacity="0.75"/>
<line x1="444.7" y1="680.3" x2="444.3" y2="698.0" stroke="#c08c60" stroke-width="0.8" opacity="0.75"/>
<line x1="456.7" y1="689.9" x2="456.1" y2="708.7" stroke="#c08c60" stroke-width="0.8" opacity="0.75"/>
<line x1="469.3" y1="700.0" x2="468.5" y2="720.0" stroke="#c08c60" stroke-width="0.8" opacity="0.75"/>
<line x1="482.5" y1="710.6" x2="481.5" y2="731.7" stroke="#c08c60" stroke-width="0.8" opacity="0.75"/>
<line x1="496.3" y1="721.6" x2="495.1" y2="744.0" stroke="#c08c60" stroke-width="0.8" opacity="0.75"/>
<line x1="510.7" y1="733.2" x2="509.3" y2="756.9" stroke="#c08c60" stroke-width="0.8" opacity="0.75"/>
<line x1="525.7" y1="745.3" x2="524.0" y2="770.2" stroke="#c08c60" stroke-width="0.8" opacity="0.75"/>
<line x1="541.4" y1="757.8" x2="539.4" y2="784.1" stroke="#c08c60" stroke-width="0.8" opacity="0.75"/>
<line x1="557.7" y1="770.9" x2="555.3" y2="798.5" stroke="#c08c60" stroke-width="0.8" opacity="0.75"/>
<line x1="398.4" y1="656.5" x2="398.3" y2="669.8" stroke="#c08c60" stroke-width="0.8" opacity="0.75"/>
<line x1="407.6" y1="664.9" x2="407.5" y2="679.1" stroke="#c08c60" stroke-width="0.8" opacity="0.75"/>
<line x1="417.5" y1="673.8" x2="417.3" y2="688.9" stroke="#c08c60" stroke-width="0.8" opacity="0.75"/>
<line x1="427.9" y1="683.2" x2="427.6" y2="699.3" stroke="#c08c60" stroke-width="0.8" opacity="0.75"/>
<line x1="439.0" y1="693.2" x2="438.6" y2="710.4" stroke="#c08c60" stroke-width="0.8" opacity="0.75"/>
<line x1="450.6" y1="703.8" x2="450.1" y2="722.0" stroke="#c08c60" stroke-width="0.8" opacity="0.75"/>
<line x1="462.9" y1="714.9" x2="462.2" y2="734.2" stroke="#c08c60" stroke-width="0.8" opacity="0.75"/>
<line x1="475.8" y1="726.6" x2="474.9" y2="747.0" stroke="#c08c60" stroke-width="0.8" opacity="0.75"/>
<line x1="489.3" y1="738.8" x2="488.2" y2="760.4" stroke="#c08c60" stroke-width="0.8" opacity="0.75"/>
<line x1="503.4" y1="751.5" x2="502.1" y2="774.4" stroke="#c08c60" stroke-width="0.8" opacity="0.75"/>
<line x1="518.2" y1="764.9" x2="516.6" y2="789.0" stroke="#c08c60" stroke-width="0.8" opacity="0.75"/>
<line x1="533.5" y1="778.8" x2="531.6" y2="804.1" stroke="#c08c60" stroke-width="0.8" opacity="0.75"/>
<line x1="549.5" y1="793.2" x2="547.3" y2="819.9" stroke="#c08c60" stroke-width="0.8" opacity="0.75"/>
<line x1="566.0" y1="808.2" x2="563.5" y2="836.2" stroke="#c08c60" stroke-width="0.8" opacity="0.75"/>
<line x1="394.0" y1="665.5" x2="394.0" y2="678.4" stroke="#c08c60" stroke-width="0.8" opacity="0.75"/>
<line x1="402.9" y1="674.5" x2="402.9" y2="688.2" stroke="#c08c60" stroke-width="0.8" opacity="0.75"/>
<line x1="412.5" y1="684.1" x2="412.3" y2="698.7" stroke="#c08c60" stroke-width="0.8" opacity="0.75"/>
<line x1="422.6" y1="694.3" x2="422.4" y2="709.9" stroke="#c08c60" stroke-width="0.8" opacity="0.75"/>
<line x1="433.4" y1="705.1" x2="433.0" y2="721.7" stroke="#c08c60" stroke-width="0.8" opacity="0.75"/>
<line x1="444.7" y1="716.6" x2="444.3" y2="734.2" stroke="#c08c60" stroke-width="0.8" opacity="0.75"/>
<line x1="456.7" y1="728.6" x2="456.1" y2="747.3" stroke="#c08c60" stroke-width="0.8" opacity="0.75"/>
<line x1="469.3" y1="741.3" x2="468.5" y2="761.1" stroke="#c08c60" stroke-width="0.8" opacity="0.75"/>
<line x1="482.5" y1="754.6" x2="481.5" y2="775.6" stroke="#c08c60" stroke-width="0.8" opacity="0.75"/>
<line x1="496.3" y1="768.5" x2="495.1" y2="790.6" stroke="#c08c60" stroke-width="0.8" opacity="0.75"/>
<line x1="510.7" y1="783.1" x2="509.3" y2="806.4" stroke="#c08c60" stroke-width="0.8" opacity="0.75"/>
<line x1="525.8" y1="798.2" x2="524.0" y2="822.8" stroke="#c08c60" stroke-width="0.8" opacity="0.75"/>
<line x1="541.4" y1="814.0" x2="539.4" y2="839.8" stroke="#c08c60" stroke-width="0.8" opacity="0.75"/>
<line x1="557.7" y1="830.4" x2="555.3" y2="857.5" stroke="#c08c60" stroke-width="0.8" opacity="0.75"/>
<line x1="398.4" y1="683.3" x2="398.3" y2="696.6" stroke="#c08c60" stroke-width="0.8" opacity="0.75"/>
<line x1="407.6" y1="693.5" x2="407.5" y2="707.7" stroke="#c08c60" stroke-width="0.8" opacity="0.75"/>
<line x1="417.5" y1="704.5" x2="417.3" y2="719.6" stroke="#c08c60" stroke-width="0.8" opacity="0.75"/>
<line x1="427.9" y1="716.1" x2="427.6" y2="732.1" stroke="#c08c60" stroke-width="0.8" opacity="0.75"/>
<line x1="439.0" y1="728.3" x2="438.6" y2="745.4" stroke="#c08c60" stroke-width="0.8" opacity="0.75"/>
<line x1="450.6" y1="741.3" x2="450.1" y2="759.4" stroke="#c08c60" stroke-width="0.8" opacity="0.75"/>
<line x1="462.9" y1="754.9" x2="462.2" y2="774.1" stroke="#c08c60" stroke-width="0.8" opacity="0.75"/>
<line x1="475.8" y1="769.2" x2="474.9" y2="789.5" stroke="#c08c60" stroke-width="0.8" opacity="0.75"/>
<line x1="489.3" y1="784.2" x2="488.2" y2="805.6" stroke="#c08c60" stroke-width="0.8" opacity="0.75"/>
<line x1="503.4" y1="799.9" x2="502.1" y2="822.5" stroke="#c08c60" stroke-width="0.8" opacity="0.75"/>
<line x1="518.2" y1="816.2" x2="516.6" y2="840.0" stroke="#c08c60" stroke-width="0.8" opacity="0.75"/>
<line x1="533.5" y1="833.3" x2="531.6" y2="858.3" stroke="#c08c60" stroke-width="0.8" opacity="0.75"/>
<line x1="549.5" y1="851.0" x2="547.3" y2="877.2" stroke="#c08c60" stroke-width="0.8" opacity="0.75"/>
<line x1="566.1" y1="869.4" x2="563.5" y2="896.9" stroke="#c08c60" stroke-width="0.8" opacity="0.75"/>
<line x1="394.0" y1="691.3" x2="394.0" y2="704.2" stroke="#c08c60" stroke-width="0.8" opacity="0.75"/>
<line x1="402.9" y1="702.2" x2="402.9" y2="715.9" stroke="#c08c60" stroke-width="0.8" opacity="0.75"/>
<line x1="412.5" y1="713.7" x2="412.3" y2="728.4" stroke="#c08c60" stroke-width="0.8" opacity="0.75"/>
<line x1="422.6" y1="726.0" x2="422.4" y2="741.6" stroke="#c08c60" stroke-width="0.8" opacity="0.75"/>
<line x1="433.4" y1="739.1" x2="433.0" y2="755.6" stroke="#c08c60" stroke-width="0.8" opacity="0.75"/>
<line x1="444.7" y1="752.9" x2="444.3" y2="770.4" stroke="#c08c60" stroke-width="0.8" opacity="0.75"/>
<line x1="456.7" y1="767.4" x2="456.1" y2="785.9" stroke="#c08c60" stroke-width="0.8" opacity="0.75"/>
<line x1="469.3" y1="782.7" x2="468.5" y2="802.3" stroke="#c08c60" stroke-width="0.8" opacity="0.75"/>
<line x1="482.5" y1="798.7" x2="481.5" y2="819.4" stroke="#c08c60" stroke-width="0.8" opacity="0.75"/>
<line x1="496.3" y1="815.4" x2="495.1" y2="837.3" stroke="#c08c60" stroke-width="0.8" opacity="0.75"/>
<line x1="510.7" y1="832.9" x2="509.3" y2="855.9" stroke="#c08c60" stroke-width="0.8" opacity="0.75"/>
<line x1="525.8" y1="851.2" x2="524.0" y2="875.3" stroke="#c08c60" stroke-width="0.8" opacity="0.75"/>
<line x1="541.4" y1="870.1" x2="539.4" y2="895.5" stroke="#c08c60" stroke-width="0.8" opacity="0.75"/>
<line x1="557.7" y1="889.9" x2="555.3" y2="916.5" stroke="#c08c60" stroke-width="0.8" opacity="0.75"/>
<line x1="398.4" y1="710.1" x2="398.3" y2="723.4" stroke="#c08c60" stroke-width="0.8" opacity="0.75"/>
<line x1="407.6" y1="722.2" x2="407.5" y2="736.4" stroke="#c08c60" stroke-width="0.8" opacity="0.75"/>
<line x1="417.5" y1="735.2" x2="417.3" y2="750.2" stroke="#c08c60" stroke-width="0.8" opacity="0.75"/>
<line x1="427.9" y1="748.9" x2="427.6" y2="764.9" stroke="#c08c60" stroke-width="0.8" opacity="0.75"/>
<line x1="439.0" y1="763.4" x2="438.6" y2="780.4" stroke="#c08c60" stroke-width="0.8" opacity="0.75"/>
<line x1="450.7" y1="778.8" x2="450.1" y2="796.8" stroke="#c08c60" stroke-width="0.8" opacity="0.75"/>
<line x1="462.9" y1="794.9" x2="462.2" y2="813.9" stroke="#c08c60" stroke-width="0.8" opacity="0.75"/>
<line x1="475.8" y1="811.9" x2="474.9" y2="832.0" stroke="#c08c60" stroke-width="0.8" opacity="0.75"/>
<line x1="489.3" y1="829.7" x2="488.2" y2="850.8" stroke="#c08c60" stroke-width="0.8" opacity="0.75"/>
<line x1="503.4" y1="848.2" x2="502.1" y2="870.5" stroke="#c08c60" stroke-width="0.8" opacity="0.75"/>
<line x1="518.2" y1="867.6" x2="516.6" y2="891.0" stroke="#c08c60" stroke-width="0.8" opacity="0.75"/>
<line x1="533.5" y1="887.8" x2="531.6" y2="912.4" stroke="#c08c60" stroke-width="0.8" opacity="0.75"/>
<line x1="549.5" y1="908.8" x2="547.3" y2="934.5" stroke="#c08c60" stroke-width="0.8" opacity="0.75"/>
<line x1="566.1" y1="930.7" x2="563.5" y2="957.5" stroke="#c08c60" stroke-width="0.8" opacity="0.75"/>
<line x1="394.0" y1="717.2" x2="394.0" y2="730.1" stroke="#c08c60" stroke-width="0.8" opacity="0.75"/>
<line x1="402.9" y1="729.9" x2="402.9" y2="743.6" stroke="#c08c60" stroke-width="0.8" opacity="0.75"/>
<line x1="412.5" y1="743.4" x2="412.3" y2="758.0" stroke="#c08c60" stroke-width="0.8" opacity="0.75"/>
<line x1="422.6" y1="757.8" x2="422.4" y2="773.3" stroke="#c08c60" stroke-width="0.8" opacity="0.75"/>
<line x1="433.4" y1="773.1" x2="433.0" y2="789.5" stroke="#c08c60" stroke-width="0.8" opacity="0.75"/>
<line x1="444.7" y1="789.2" x2="444.3" y2="806.6" stroke="#c08c60" stroke-width="0.8" opacity="0.75"/>
<line x1="456.7" y1="806.1" x2="456.1" y2="824.6" stroke="#c08c60" stroke-width="0.8" opacity="0.75"/>
<line x1="469.3" y1="824.0" x2="468.5" y2="843.4" stroke="#c08c60" stroke-width="0.8" opacity="0.75"/>
<line x1="482.5" y1="842.7" x2="481.5" y2="863.2" stroke="#c08c60" stroke-width="0.8" opacity="0.75"/>
<line x1="496.3" y1="862.3" x2="495.1" y2="883.9" stroke="#c08c60" stroke-width="0.8" opacity="0.75"/>
<line x1="510.7" y1="882.8" x2="509.3" y2="905.4" stroke="#c08c60" stroke-width="0.8" opacity="0.75"/>
<line x1="525.8" y1="904.1" x2="524.0" y2="927.9" stroke="#c08c60" stroke-width="0.8" opacity="0.75"/>
<line x1="541.4" y1="926.3" x2="539.4" y2="951.2" stroke="#c08c60" stroke-width="0.8" opacity="0.75"/>
<line x1="557.7" y1="949.4" x2="555.3" y2="975.4" stroke="#c08c60" stroke-width="0.8" opacity="0.75"/>
<line x1="398.4" y1="736.8" x2="398.3" y2="750.1" stroke="#c08c60" stroke-width="0.8" opacity="0.75"/>
<line x1="407.6" y1="750.9" x2="407.5" y2="765.0" stroke="#c08c60" stroke-width="0.8" opacity="0.75"/>
<line x1="417.5" y1="765.8" x2="417.3" y2="780.9" stroke="#c08c60" stroke-width="0.8" opacity="0.75"/>
<line x1="427.9" y1="781.7" x2="427.6" y2="797.7" stroke="#c08c60" stroke-width="0.8" opacity="0.75"/>
<line x1="439.0" y1="798.6" x2="438.6" y2="815.4" stroke="#c08c60" stroke-width="0.8" opacity="0.75"/>
<line x1="450.7" y1="816.3" x2="450.1" y2="834.1" stroke="#c08c60" stroke-width="0.8" opacity="0.75"/>
<line x1="462.9" y1="835.0" x2="462.2" y2="853.8" stroke="#c08c60" stroke-width="0.8" opacity="0.75"/>
<line x1="475.8" y1="854.6" x2="474.9" y2="874.5" stroke="#c08c60" stroke-width="0.8" opacity="0.75"/>
<line x1="489.3" y1="875.1" x2="488.2" y2="896.0" stroke="#c08c60" stroke-width="0.8" opacity="0.75"/>
<line x1="503.4" y1="896.6" x2="502.1" y2="918.6" stroke="#c08c60" stroke-width="0.8" opacity="0.75"/>
<line x1="518.2" y1="919.0" x2="516.6" y2="942.1" stroke="#c08c60" stroke-width="0.8" opacity="0.75"/>
<line x1="533.5" y1="942.4" x2="531.6" y2="966.5" stroke="#c08c60" stroke-width="0.8" opacity="0.75"/>
<line x1="549.5" y1="966.6" x2="547.2" y2="991.9" stroke="#c08c60" stroke-width="0.8" opacity="0.75"/>
<line x1="566.1" y1="991.9" x2="563.4" y2="1018.2" stroke="#c08c60" stroke-width="0.8" opacity="0.75"/>
<line x1="394.0" y1="743.1" x2="394.0" y2="756.0" stroke="#c08c60" stroke-width="0.8" opacity="0.75"/>
<line x1="402.9" y1="757.6" x2="402.9" y2="771.3" stroke="#c08c60" stroke-width="0.8" opacity="0.75"/>
<line x1="412.5" y1="773.1" x2="412.3" y2="787.6" stroke="#c08c60" stroke-width="0.8" opacity="0.75"/>
<line x1="422.6" y1="789.6" x2="422.4" y2="805.0" stroke="#c08c60" stroke-width="0.8" opacity="0.75"/>
<line x1="433.4" y1="807.0" x2="433.0" y2="823.4" stroke="#c08c60" stroke-width="0.8" opacity="0.75"/>
<line x1="444.7" y1="825.5" x2="444.3" y2="842.8" stroke="#c08c60" stroke-width="0.8" opacity="0.75"/>
<line x1="456.7" y1="844.9" x2="456.1" y2="863.2" stroke="#c08c60" stroke-width="0.8" opacity="0.75"/>
<line x1="469.3" y1="865.3" x2="468.5" y2="884.6" stroke="#c08c60" stroke-width="0.8" opacity="0.75"/>
<line x1="482.5" y1="886.8" x2="481.5" y2="907.0" stroke="#c08c60" stroke-width="0.8" opacity="0.75"/>
<line x1="496.3" y1="909.2" x2="495.1" y2="930.5" stroke="#c08c60" stroke-width="0.8" opacity="0.75"/>
<line x1="510.7" y1="932.6" x2="509.3" y2="955.0" stroke="#c08c60" stroke-width="0.8" opacity="0.75"/>
<line x1="525.8" y1="957.0" x2="524.0" y2="980.4" stroke="#c08c60" stroke-width="0.8" opacity="0.75"/>
<line x1="541.4" y1="982.5" x2="539.3" y2="1006.9" stroke="#c08c60" stroke-width="0.8" opacity="0.75"/>
<line x1="557.7" y1="1008.9" x2="555.3" y2="1034.4" stroke="#c08c60" stroke-width="0.8" opacity="0.75"/>
<line x1="390.0" y1="611.3" x2="482.0" y2="666.2" stroke="#6c5642" stroke-width="1.7"/>
<line x1="390.0" y1="623.9" x2="482.0" y2="688.2" stroke="#6c5642" stroke-width="1.7"/>
<line x1="390.0" y1="636.4" x2="482.0" y2="710.2" stroke="#6c5642" stroke-width="1.7"/>
<line x1="390.0" y1="648.9" x2="482.0" y2="732.2" stroke="#6c5642" stroke-width="1.7"/>
<line x1="390.0" y1="661.4" x2="482.0" y2="754.1" stroke="#6c5642" stroke-width="1.7"/>
<line x1="390.0" y1="674.0" x2="482.0" y2="776.1" stroke="#6c5642" stroke-width="1.7"/>
<line x1="390.0" y1="686.5" x2="482.0" y2="798.1" stroke="#6c5642" stroke-width="1.7"/>
<line x1="390.0" y1="699.0" x2="482.0" y2="820.0" stroke="#6c5642" stroke-width="1.7"/>
<line x1="390.0" y1="711.5" x2="482.0" y2="842.0" stroke="#6c5642" stroke-width="1.7"/>
<line x1="390.0" y1="724.1" x2="482.0" y2="864.0" stroke="#6c5642" stroke-width="1.7"/>
<line x1="390.0" y1="736.6" x2="482.0" y2="885.9" stroke="#6c5642" stroke-width="1.7"/>
<line x1="390.0" y1="749.1" x2="482.0" y2="907.9" stroke="#6c5642" stroke-width="1.7"/>
</g>
<polygon points="475.3,664.0 479.0,661.0 478.6,730.0 476.0,730.0" fill="#cf7044" />
<polyline points="475.3,684.0 479.0,681.5" fill="none" stroke="#8a7860" stroke-width="2" />
<polyline points="475.5,705.5 479.0,703.0" fill="none" stroke="#8a7860" stroke-width="2" />
<polyline points="475.7,725.0 479.0,722.5" fill="none" stroke="#8a7860" stroke-width="2" />
<polyline points="398.5,606.6 483.2,644.0" fill="none" stroke="#74460a" stroke-width="2.2" />
<polyline points="397.4,611.8 471.5,651.6" fill="none" stroke="#8a540e" stroke-width="3.8" />
<polyline points="397.4,617.8 469.0,659.6" fill="none" stroke="#8a540e" stroke-width="4.6" />
<polyline points="398.2,606.5 398.2,626.0" fill="none" stroke="#8a540e" stroke-width="2.2" />
<polygon points="468.7,649.5 475.3,650.0 475.3,683.5 469.2,680.0" fill="#8c560e" />
<polygon points="475.3,650.0 483.4,644.0 483.2,672.0 480.0,672.0 480.2,653.0 475.3,657.0" fill="#74460a" />
<polygon points="468.7,649.5 478.0,643.5 483.4,644.0 475.3,650.0" fill="#9a6212" />
<polygon points="475.5,657.5 480.0,654.0 480.0,662.0 475.5,665.0" fill="#e8a07a" />
<polygon points="335.8,718.4 368.1,698.0 388.0,730.0 335.8,730.0" fill="#8c5006" />
<polygon points="362.0,702.0 368.1,698.0 388.0,730.0 380.0,730.0" fill="#7e4604" />
<polygon points="336.9,663.6 345.0,661.0 353.9,655.4 355.5,704.7 353.0,706.5 352.3,674.0 340.4,678.0 341.0,714.5 338.5,716.0" fill="#451a0a" />
<polyline points="343.2,676.0 344.1,710.5" fill="none" stroke="#451a0a" stroke-width="1.5" />
<polyline points="346.6,676.0 347.5,710.5" fill="none" stroke="#451a0a" stroke-width="1.5" />
<polyline points="350.0,676.0 350.9,710.5" fill="none" stroke="#451a0a" stroke-width="1.5" />
<polygon points="324.3,693.7 328.0,690.0 331.5,700.0 335.8,710.0 336.5,730.0 326.5,730.0" fill="#54220e" />
<polygon points="335.8,710.0 335.8,723.0 341.0,718.0 341.0,730.0 336.5,730.0" fill="#3c1608" />
<polyline points="324.5,694.0 328.0,690.5" fill="none" stroke="#7a3a1c" stroke-width="1.2" />
<polygon points="378.0,664.0 380.2,661.4 384.0,667.5 393.9,673.0 393.9,730.0 380.5,730.0" fill="#451a0a" />
<polyline points="384.5,692.0 384.8,730.0" fill="none" stroke="#6a3020" stroke-width="0.9" />
<polyline points="387.5,692.0 387.8,730.0" fill="none" stroke="#6a3020" stroke-width="0.9" />
<polyline points="390.5,692.0 390.8,730.0" fill="none" stroke="#6a3020" stroke-width="0.9" />
<polygon points="398.8,684.0 400.0,682.2 403.0,683.0 417.5,699.2 417.5,730.0 398.8,730.0" fill="#451a0a" />
<polyline points="403.0,707.0 403.0,730.0" fill="none" stroke="#a4583a" stroke-width="0.9" />
<polyline points="406.5,707.0 406.5,730.0" fill="none" stroke="#a4583a" stroke-width="0.9" />
<polyline points="410.0,707.0 410.0,730.0" fill="none" stroke="#a4583a" stroke-width="0.9" />
<polyline points="413.5,707.0 413.5,730.0" fill="none" stroke="#a4583a" stroke-width="0.9" />
<polyline points="369.8,712.0 368.4,680.0 367.0,650.0" fill="none" stroke="#2a5a18" stroke-width="1.5" />
<polygon points="365.5,650.0 366.8,648.0 368.5,655.0 372.0,652.5 371.5,659.0 376.5,665.5 371.0,667.0 370.5,676.0 367.2,670.0 365.3,661.0" fill="#2f6a1a" />
<polyline points="366.0,652.0 367.8,668.0" fill="none" stroke="#1a3a0e" stroke-width="1.2" />
<polyline points="368.8,690.0 363.0,678.5 360.5,676.5" fill="none" stroke="#3f8428" stroke-width="1.3" />
<polyline points="369.0,694.0 373.5,685.5 376.5,683.8" fill="none" stroke="#3a7c24" stroke-width="1.3" />
<polygon points="364.3,711.0 375.8,711.0 374.4,730.0 365.6,730.0" fill="#6a3408" />
<ellipse cx="370" cy="711" rx="5.7" ry="2.8" fill="#260a04" stroke="#8e4a12" stroke-width="1.1"/></svg>
<div class="abs" style="left:0;top:732px;width:1024px;height:2px;background:#fff"></div>
<div class="abs" style="left:0;top:734px;width:1024px;height:34px;background:linear-gradient(to bottom,#1c58c8 0px,#2a7ee6 1.5px,#2a76e0 3.5px,#2468d8 4.5px,#4a92ec 5.5px,#3f86e8 6.5px,#2860d8 8.5px,#2458d2 11px,#2359d6 16px,#2264e2 31px,#1c4cba 32.5px,#17409e 34px)"></div>
<div class="abs" style="left:894px;top:738px;width:130px;height:30px;background:linear-gradient(to bottom,#1a7ad8 0px,#1e9af0 3px,#149aee 8px,#1290e8 20px,#0e7ed6 27px,#0a62b8 30px);border-left:1px solid #0c3c8c;box-sizing:border-box"></div>
<div class="abs" style="left:0;top:738px;width:109px;height:30px;border-radius:0 12px 12px 0 / 0 15px 15px 0;background:linear-gradient(to bottom,#5aa85a 0px,#3f9a3f 3px,#348c34 8px,#2e862e 20px,#2a7a2a 26px,#226622 30px);box-shadow:inset -3px 0 4px rgba(0,50,0,0.35)"></div>
<div class="abs" style="left:34.5px;top:742px;font-size:16.6px;font-weight:bold;font-style:italic;color:#fff;text-shadow:1px 1px 1px #1a4a1a;letter-spacing:0.300px;line-height:22px">Iniciar</div>
<svg class="abs" style="left:0;top:738px" width="1024" height="30" viewBox="0 738 1024 30" font-family="Liberation Sans,sans-serif" font-size="11">
<path d="M12 745 c2.500 -1.500 5 -1.500 7.500 0 l-1.500 6.500 c-2.500 -1.500 -5 -1.500 -7.500 0 z" fill="#e8532a"/>
<path d="M20.500 745.500 c2.500 1.500 5 1.500 7.500 0 l-1.500 6.500 c-2.500 1.500 -5 1.500 -7.500 0 z" fill="#7cc043"/>
<path d="M10 752.500 c2.500 -1.500 5 -1.500 7.500 0 l-1.500 6.500 c-2.500 -1.500 -5 -1.500 -7.500 0 z" fill="#3f8be8"/>
<path d="M18.500 753 c2.500 1.500 5 1.500 7.500 0 l-1.500 6.500 c-2.500 1.500 -5 1.500 -7.500 0 z" fill="#f5c11c"/>
<rect x="121" y="744" width="2" height="2" fill="#1240a8"/>
<rect x="119" y="748" width="2" height="2" fill="#1240a8"/>
<rect x="121" y="752" width="2" height="2" fill="#1240a8"/>
<rect x="119" y="756" width="2" height="2" fill="#1240a8"/>
<rect x="121" y="760" width="2" height="2" fill="#1240a8"/>
<rect x="224" y="744" width="2" height="2" fill="#1240a8"/>
<rect x="222" y="748" width="2" height="2" fill="#1240a8"/>
<rect x="224" y="752" width="2" height="2" fill="#1240a8"/>
<rect x="222" y="756" width="2" height="2" fill="#1240a8"/>
<rect x="224" y="760" width="2" height="2" fill="#1240a8"/>
<rect x="132" y="746" width="13" height="13" rx="2" fill="#dfeaf8" stroke="#2a5aa8"/><path d="M135 756 l4 -7 l3 4 l-4 3 z" fill="#2a4a8a"/><circle cx="144.500" cy="749" r="1.500" fill="#e84a2a"/>
<rect x="155.500" y="745.500" width="15" height="15" fill="#f8e8c8" stroke="#e89a2a" stroke-width="1.500"/><circle cx="163" cy="753" r="4.500" fill="#fff" stroke="#c87a1a"/><path d="M163 750 v3 h2.500" stroke="#8a4a0a" fill="none"/>
<g transform="translate(187.0 753.0) scale(1.00)">
<ellipse cx="0" cy="0" rx="8.500" ry="3" fill="none" stroke="#f0c020" stroke-width="1.400" transform="rotate(-35)"/>
<circle cx="0" cy="0.500" r="5.600" fill="none" stroke="#5ab4f4" stroke-width="2.600"/>
<path d="M-5 0.500 h10" stroke="#5ab4f4" stroke-width="2.200"/>
<path d="M2 2.500 h5 v3 h-5 z" fill="#2a62da"/>
</g>
<text x="205" y="752.500" fill="#e4eeff" font-size="13" font-weight="bold">»</text>
<rect x="232.500" y="741.500" width="157.500" height="23" rx="2.500" fill="#3c81f3" stroke="#2a6ae0"/>
<rect x="233" y="742" width="156" height="2" rx="1" fill="#5a9af8"/>
<g transform="translate(248.0 753.0) scale(0.90)">
<ellipse cx="0" cy="0" rx="8.500" ry="3" fill="none" stroke="#f0c020" stroke-width="1.400" transform="rotate(-35)"/>
<circle cx="0" cy="0.500" r="5.600" fill="none" stroke="#5ab4f4" stroke-width="2.600"/>
<path d="M-5 0.500 h10" stroke="#5ab4f4" stroke-width="2.200"/>
<path d="M2 2.500 h5 v3 h-5 z" fill="#2a62da"/>
</g>
<text x="260" y="757" fill="#fff">Sweet Home 3D : Do...</text>
<rect x="391.500" y="741.500" width="158.500" height="23" rx="2.500" fill="#3c81f3" stroke="#2a6ae0"/>
<rect x="392" y="742" width="157.500" height="2" rx="1" fill="#5a9af8"/>
<path d="M402 748 h7 l3 3 v9 h-10 z" fill="#fff" stroke="#6a6a4a" stroke-width="0.800"/><path d="M406 746 h8 v10 h-8 z" fill="#f8e8a0" stroke="#8a7a2a" stroke-width="0.800"/><circle cx="413" cy="749" r="1.600" fill="#e03a2a"/>
<text x="420" y="757" fill="#fff" letter-spacing="-0.3">Nova mensagem</text>
<rect x="551.500" y="741.500" width="159" height="23.500" rx="2.500" fill="#1e52b8" stroke="#163e96"/>
<rect x="552" y="742" width="158" height="2.500" rx="1" fill="#193f9c"/>
<path d="M562 751 l6 -5 l8 4 l-5 7 l-4 2 l-5 -5 z" fill="#e8e8e8" stroke="#3a3a3a" stroke-width="0.800"/><path d="M565 751 l4 -2 l4 2 l-4 4 z" fill="#8a6a3a"/>
<text x="581" y="757" fill="#fff">casa-edicula-teste.sh...</text>
<circle cx="895" cy="753" r="8" fill="#2a7ae8" stroke="#bcd8fa" stroke-width="1.200"/><path d="M897 749 l-4 4 l4 4" fill="none" stroke="#fff" stroke-width="2"/>
<rect x="913" y="746" width="8" height="7" fill="#2e2e66" stroke="#a8acd8" stroke-width="1"/><rect x="915" y="754" width="4" height="2" fill="#9a9ec8"/><rect x="908" y="749.500" width="8" height="7" fill="#262658" stroke="#b4b8e0" stroke-width="1"/><path d="M908 759.500 h8 l1 1.500 h-10 z" fill="#b8a8d8"/>
<circle cx="932.500" cy="753" r="7" fill="#dcd424" stroke="#a8a018" stroke-width="0.800"/><text x="932.500" y="756.500" font-size="9" font-weight="bold" font-style="italic" text-anchor="middle" fill="#2a6ac8">iT</text>
<rect x="943" y="747" width="14" height="13" fill="#000"/><rect x="943" y="747" width="7" height="6" fill="#7a7880"/><rect x="950" y="754" width="7" height="6" fill="#8a8a8a"/>
<defs><radialGradient id="ag" cx="0.35" cy="0.3" r="0.8"><stop offset="0" stop-color="#9ab4dc"/><stop offset="0.45" stop-color="#34507e"/><stop offset="1" stop-color="#0e1c38"/></radialGradient></defs><circle cx="968" cy="753" r="8" fill="url(#ag)"/><text x="968" y="758" font-size="14" font-weight="bold" text-anchor="middle" fill="#fff" font-family="Liberation Serif,serif">a</text>
<text x="982.500" y="757" fill="#fff">00:40</text>
</svg>
</div>
</body>
</html>
